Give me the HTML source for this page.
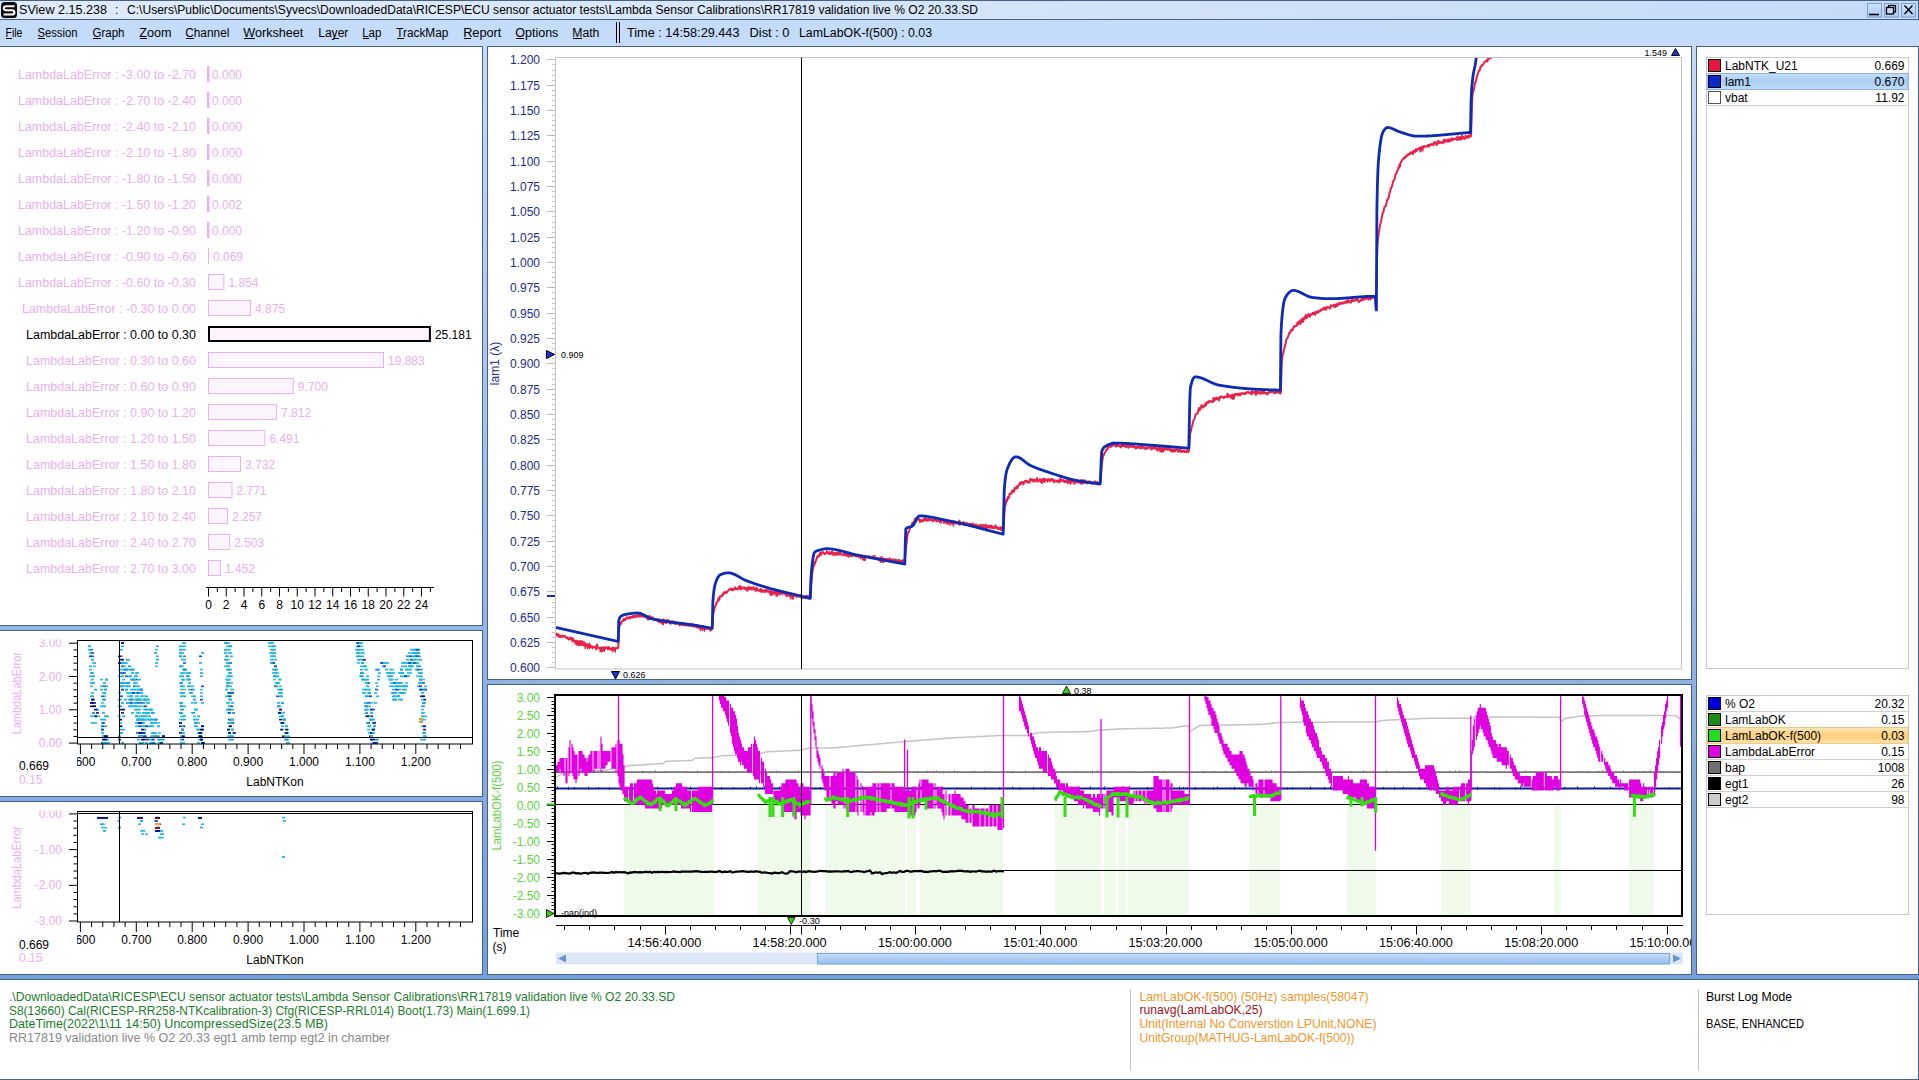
<!DOCTYPE html><html><head><meta charset="utf-8"><style>html,body{margin:0;padding:0;overflow:hidden;background:#fff}svg{display:block}text{font-family:"Liberation Sans",sans-serif}</style></head><body><svg width="1919" height="1080" viewBox="0 0 1919 1080"><defs>
<linearGradient id="gMain" x1="0" y1="0" x2="0" y2="1"><stop offset="0" stop-color="#c4dcfa"/><stop offset="1" stop-color="#6c99d4"/></linearGradient>
<linearGradient id="gTitle" x1="0" y1="0" x2="1" y2="0"><stop offset="0" stop-color="#dfebfb"/><stop offset="0.5" stop-color="#d4e4f9"/><stop offset="1" stop-color="#c6dbf8"/></linearGradient>
<linearGradient id="gBtn" x1="0" y1="0" x2="0" y2="1"><stop offset="0" stop-color="#cfe2fb"/><stop offset="1" stop-color="#a9cbf5"/></linearGradient>
<linearGradient id="gSel" x1="0" y1="0" x2="0" y2="1"><stop offset="0" stop-color="#c6def9"/><stop offset="0.5" stop-color="#a9cdf6"/><stop offset="1" stop-color="#c2dcf9"/></linearGradient>
<linearGradient id="gOrg" x1="0" y1="0" x2="0" y2="1"><stop offset="0" stop-color="#fde7b8"/><stop offset="0.5" stop-color="#fbcf7d"/><stop offset="1" stop-color="#fde2a8"/></linearGradient>
<linearGradient id="gThumb" x1="0" y1="0" x2="0" y2="1"><stop offset="0" stop-color="#c9defa"/><stop offset="1" stop-color="#96bdf0"/></linearGradient>
</defs>
<rect x="0" y="20" width="1919" height="1060" fill="url(#gMain)"/>
<rect x="0" y="0" width="1919" height="20" fill="url(#gTitle)"/>
<line x1="0" y1="0.5" x2="1919" y2="0.5" stroke="#485f88" stroke-width="1"/>
<line x1="0" y1="19.5" x2="1919" y2="19.5" stroke="#485f88" stroke-width="1"/>
<line x1="1918.5" y1="0" x2="1918.5" y2="20" stroke="#485f88" stroke-width="1"/>
<rect x="0" y="20" width="1919" height="26" fill="#c4dbf9"/>
<rect x="-1" y="46" width="484" height="580" fill="#485f88"/>
<rect x="0" y="47" width="482" height="578" fill="#fff"/>
<rect x="-1" y="630" width="484" height="167" fill="#485f88"/>
<rect x="0" y="631" width="482" height="165" fill="#fff"/>
<rect x="-1" y="801" width="484" height="174" fill="#485f88"/>
<rect x="0" y="802" width="482" height="172" fill="#fff"/>
<rect x="487" y="46" width="1205" height="634" fill="#485f88"/>
<rect x="488" y="47" width="1203" height="632" fill="#fff"/>
<rect x="487" y="684" width="1205" height="291" fill="#485f88"/>
<rect x="488" y="685" width="1203" height="289" fill="#fff"/>
<rect x="1696" y="46" width="223" height="929" fill="#485f88"/>
<rect x="1697" y="47" width="221" height="927" fill="#fff"/>
<rect x="-1" y="979" width="1920" height="101" fill="#485f88"/>
<rect x="0" y="980" width="1918" height="99" fill="#fff"/>
<rect x="1" y="2" width="16" height="16" rx="3.5" fill="#080808"/>
<path d="M14.6,6.2 H6.2 Q3.8,6.2 3.8,8.3 Q3.8,10.2 6.2,10.2 H11.8 Q14.4,10.2 14.4,12.4 Q14.4,14.5 11.8,14.5 H3.6" stroke="#fff" stroke-width="2.1" fill="none"/>
<text x="19.0" y="13.5" font-size="12" fill="#000" textLength="88.0" lengthAdjust="spacingAndGlyphs">SView 2.15.238</text>
<text x="115.0" y="13.5" font-size="12" fill="#000">:</text>
<text x="127.0" y="13.5" font-size="12" fill="#000" textLength="851.0" lengthAdjust="spacingAndGlyphs">C:\Users\Public\Documents\Syvecs\DownloadedData\RICESP\ECU sensor actuator tests\Lambda Sensor Calibrations\RR17819 validation live % O2 20.33.SD</text>
<rect x="1867.5" y="3.5" width="14" height="13.5" fill="url(#gBtn)" stroke="#7d9cc8" stroke-width="1"/>
<rect x="1884.5" y="3.5" width="14" height="13.5" fill="url(#gBtn)" stroke="#7d9cc8" stroke-width="1"/>
<rect x="1901.5" y="3.5" width="14" height="13.5" fill="url(#gBtn)" stroke="#7d9cc8" stroke-width="1"/>
<line x1="1869" y1="14.5" x2="1879" y2="14.5" stroke="#000" stroke-width="1.6"/>
<rect x="1888.5" y="5.5" width="7" height="6.5" fill="none" stroke="#000" stroke-width="1.3"/>
<rect x="1886.5" y="7.5" width="7" height="6.5" fill="#c6ddf9" stroke="#000" stroke-width="1.3"/>
<path d="M1904.5,5.5 L1912.5,14 M1912.5,5.5 L1904.5,14" stroke="#000" stroke-width="1.4" fill="none"/>
<text x="5.5" y="37.0" font-size="12" fill="#000" textLength="16.9" lengthAdjust="spacingAndGlyphs">File</text>
<text x="37.5" y="37.0" font-size="12" fill="#000" textLength="39.9" lengthAdjust="spacingAndGlyphs">Session</text>
<text x="92.5" y="37.0" font-size="12" fill="#000" textLength="31.9" lengthAdjust="spacingAndGlyphs">Graph</text>
<text x="139.2" y="37.0" font-size="12" fill="#000" textLength="32.2" lengthAdjust="spacingAndGlyphs">Zoom</text>
<text x="185.2" y="37.0" font-size="12" fill="#000" textLength="44.2" lengthAdjust="spacingAndGlyphs">Channel</text>
<text x="243.2" y="37.0" font-size="12" fill="#000" textLength="60.2" lengthAdjust="spacingAndGlyphs">Worksheet</text>
<text x="318.2" y="37.0" font-size="12" fill="#000" textLength="30.2" lengthAdjust="spacingAndGlyphs">Layer</text>
<text x="362.2" y="37.0" font-size="12" fill="#000" textLength="19.2" lengthAdjust="spacingAndGlyphs">Lap</text>
<text x="396.2" y="37.0" font-size="12" fill="#000" textLength="52.2" lengthAdjust="spacingAndGlyphs">TrackMap</text>
<text x="463.2" y="37.0" font-size="12" fill="#000" textLength="38.2" lengthAdjust="spacingAndGlyphs">Report</text>
<text x="515.2" y="37.0" font-size="12" fill="#000" textLength="43.2" lengthAdjust="spacingAndGlyphs">Options</text>
<text x="572.2" y="37.0" font-size="12" fill="#000" textLength="27.2" lengthAdjust="spacingAndGlyphs">Math</text>
<line x1="6" y1="38.5" x2="12" y2="38.5" stroke="#000" stroke-width="1"/>
<line x1="38" y1="38.5" x2="45" y2="38.5" stroke="#000" stroke-width="1"/>
<line x1="93" y1="38.5" x2="101" y2="38.5" stroke="#000" stroke-width="1"/>
<line x1="140" y1="38.5" x2="147" y2="38.5" stroke="#000" stroke-width="1"/>
<line x1="186" y1="38.5" x2="194" y2="38.5" stroke="#000" stroke-width="1"/>
<line x1="244" y1="38.5" x2="255" y2="38.5" stroke="#000" stroke-width="1"/>
<line x1="333" y1="38.5" x2="339" y2="38.5" stroke="#000" stroke-width="1"/>
<line x1="363" y1="38.5" x2="369" y2="38.5" stroke="#000" stroke-width="1"/>
<line x1="397" y1="38.5" x2="404" y2="38.5" stroke="#000" stroke-width="1"/>
<line x1="464" y1="38.5" x2="471" y2="38.5" stroke="#000" stroke-width="1"/>
<line x1="516" y1="38.5" x2="524" y2="38.5" stroke="#000" stroke-width="1"/>
<line x1="573" y1="38.5" x2="582" y2="38.5" stroke="#000" stroke-width="1"/>
<line x1="616.5" y1="22" x2="616.5" y2="43" stroke="#000" stroke-width="1"/>
<line x1="619.5" y1="22" x2="619.5" y2="43" stroke="#000" stroke-width="1"/>
<text x="627.0" y="37.0" font-size="12" fill="#000" textLength="112.5" lengthAdjust="spacingAndGlyphs">Time : 14:58:29.443</text>
<text x="749.5" y="37.0" font-size="12" fill="#000" textLength="40.0" lengthAdjust="spacingAndGlyphs">Dist : 0</text>
<text x="799.0" y="37.0" font-size="12" fill="#000" textLength="133.0" lengthAdjust="spacingAndGlyphs">LamLabOK-f(500) : 0.03</text>
<text x="18.0" y="78.5" font-size="12" fill="#e9b0ee" textLength="178.0" lengthAdjust="spacingAndGlyphs">LambdaLabError : -3.00 to -2.70</text>
<rect x="207" y="66" width="2.4" height="16" fill="#e9b0ee"/>
<text x="212.0" y="78.5" font-size="12" fill="#e9b0ee">0.000</text>
<text x="18.0" y="104.5" font-size="12" fill="#e9b0ee" textLength="178.0" lengthAdjust="spacingAndGlyphs">LambdaLabError : -2.70 to -2.40</text>
<rect x="207" y="92" width="2.4" height="16" fill="#e9b0ee"/>
<text x="212.0" y="104.5" font-size="12" fill="#e9b0ee">0.000</text>
<text x="18.0" y="130.5" font-size="12" fill="#e9b0ee" textLength="178.0" lengthAdjust="spacingAndGlyphs">LambdaLabError : -2.40 to -2.10</text>
<rect x="207" y="118" width="2.4" height="16" fill="#e9b0ee"/>
<text x="212.0" y="130.5" font-size="12" fill="#e9b0ee">0.000</text>
<text x="18.0" y="156.5" font-size="12" fill="#e9b0ee" textLength="178.0" lengthAdjust="spacingAndGlyphs">LambdaLabError : -2.10 to -1.80</text>
<rect x="207" y="144" width="2.4" height="16" fill="#e9b0ee"/>
<text x="212.0" y="156.5" font-size="12" fill="#e9b0ee">0.000</text>
<text x="18.0" y="182.5" font-size="12" fill="#e9b0ee" textLength="178.0" lengthAdjust="spacingAndGlyphs">LambdaLabError : -1.80 to -1.50</text>
<rect x="207" y="170" width="2.4" height="16" fill="#e9b0ee"/>
<text x="212.0" y="182.5" font-size="12" fill="#e9b0ee">0.000</text>
<text x="18.0" y="208.5" font-size="12" fill="#e9b0ee" textLength="178.0" lengthAdjust="spacingAndGlyphs">LambdaLabError : -1.50 to -1.20</text>
<rect x="207" y="196" width="2.4" height="16" fill="#e9b0ee"/>
<text x="212.0" y="208.5" font-size="12" fill="#e9b0ee">0.002</text>
<text x="18.0" y="234.5" font-size="12" fill="#e9b0ee" textLength="178.0" lengthAdjust="spacingAndGlyphs">LambdaLabError : -1.20 to -0.90</text>
<rect x="207" y="222" width="2.4" height="16" fill="#e9b0ee"/>
<text x="212.0" y="234.5" font-size="12" fill="#e9b0ee">0.000</text>
<text x="18.0" y="260.5" font-size="12" fill="#e9b0ee" textLength="178.0" lengthAdjust="spacingAndGlyphs">LambdaLabError : -0.90 to -0.60</text>
<line x1="208.5" y1="248" x2="208.5" y2="264" stroke="#e9b0ee" stroke-width="1"/>
<text x="213.0" y="260.5" font-size="12" fill="#e9b0ee">0.069</text>
<text x="18.0" y="286.5" font-size="12" fill="#e9b0ee" textLength="178.0" lengthAdjust="spacingAndGlyphs">LambdaLabError : -0.60 to -0.30</text>
<rect x="208.5" y="274.5" width="15.4" height="15" fill="#fdf5fd" stroke="#e9b0ee" stroke-width="1"/>
<text x="228.4" y="286.5" font-size="12" fill="#e9b0ee">1.854</text>
<text x="22.0" y="312.5" font-size="12" fill="#e9b0ee" textLength="174.0" lengthAdjust="spacingAndGlyphs">LambdaLabError : -0.30 to 0.00</text>
<rect x="208.5" y="300.5" width="42.1" height="15" fill="#fdf5fd" stroke="#e9b0ee" stroke-width="1"/>
<text x="255.1" y="312.5" font-size="12" fill="#e9b0ee">4.875</text>
<text x="26.0" y="338.5" font-size="12" fill="#000" textLength="170.0" lengthAdjust="spacingAndGlyphs">LambdaLabError : 0.00 to 0.30</text>
<rect x="209" y="327" width="220.9" height="14" fill="#fdf4fd" stroke="#000" stroke-width="2"/>
<text x="434.9" y="338.5" font-size="12" fill="#000">25.181</text>
<text x="26.0" y="364.5" font-size="12" fill="#e9b0ee" textLength="170.0" lengthAdjust="spacingAndGlyphs">LambdaLabError : 0.30 to 0.60</text>
<rect x="208.5" y="352.5" width="175.0" height="15" fill="#fdf5fd" stroke="#e9b0ee" stroke-width="1"/>
<text x="388.0" y="364.5" font-size="12" fill="#e9b0ee">19.883</text>
<text x="26.0" y="390.5" font-size="12" fill="#e9b0ee" textLength="170.0" lengthAdjust="spacingAndGlyphs">LambdaLabError : 0.60 to 0.90</text>
<rect x="208.5" y="378.5" width="84.8" height="15" fill="#fdf5fd" stroke="#e9b0ee" stroke-width="1"/>
<text x="297.8" y="390.5" font-size="12" fill="#e9b0ee">9.700</text>
<text x="26.0" y="416.5" font-size="12" fill="#e9b0ee" textLength="170.0" lengthAdjust="spacingAndGlyphs">LambdaLabError : 0.90 to 1.20</text>
<rect x="208.5" y="404.5" width="68.1" height="15" fill="#fdf5fd" stroke="#e9b0ee" stroke-width="1"/>
<text x="281.1" y="416.5" font-size="12" fill="#e9b0ee">7.812</text>
<text x="26.0" y="442.5" font-size="12" fill="#e9b0ee" textLength="170.0" lengthAdjust="spacingAndGlyphs">LambdaLabError : 1.20 to 1.50</text>
<rect x="208.5" y="430.5" width="56.4" height="15" fill="#fdf5fd" stroke="#e9b0ee" stroke-width="1"/>
<text x="269.4" y="442.5" font-size="12" fill="#e9b0ee">6.491</text>
<text x="26.0" y="468.5" font-size="12" fill="#e9b0ee" textLength="170.0" lengthAdjust="spacingAndGlyphs">LambdaLabError : 1.50 to 1.80</text>
<rect x="208.5" y="456.5" width="32.0" height="15" fill="#fdf5fd" stroke="#e9b0ee" stroke-width="1"/>
<text x="245.0" y="468.5" font-size="12" fill="#e9b0ee">3.732</text>
<text x="26.0" y="494.5" font-size="12" fill="#e9b0ee" textLength="170.0" lengthAdjust="spacingAndGlyphs">LambdaLabError : 1.80 to 2.10</text>
<rect x="208.5" y="482.5" width="23.5" height="15" fill="#fdf5fd" stroke="#e9b0ee" stroke-width="1"/>
<text x="236.5" y="494.5" font-size="12" fill="#e9b0ee">2.771</text>
<text x="26.0" y="520.5" font-size="12" fill="#e9b0ee" textLength="170.0" lengthAdjust="spacingAndGlyphs">LambdaLabError : 2.10 to 2.40</text>
<rect x="208.5" y="508.5" width="19.0" height="15" fill="#fdf5fd" stroke="#e9b0ee" stroke-width="1"/>
<text x="232.0" y="520.5" font-size="12" fill="#e9b0ee">2.257</text>
<text x="26.0" y="546.5" font-size="12" fill="#e9b0ee" textLength="170.0" lengthAdjust="spacingAndGlyphs">LambdaLabError : 2.40 to 2.70</text>
<rect x="208.5" y="534.5" width="21.2" height="15" fill="#fdf5fd" stroke="#e9b0ee" stroke-width="1"/>
<text x="234.2" y="546.5" font-size="12" fill="#e9b0ee">2.503</text>
<text x="26.0" y="572.5" font-size="12" fill="#e9b0ee" textLength="170.0" lengthAdjust="spacingAndGlyphs">LambdaLabError : 2.70 to 3.00</text>
<rect x="208.5" y="560.5" width="11.9" height="15" fill="#fdf5fd" stroke="#e9b0ee" stroke-width="1"/>
<text x="224.9" y="572.5" font-size="12" fill="#e9b0ee">1.452</text>
<line x1="206" y1="587.5" x2="434" y2="587.5" stroke="#000" stroke-width="1"/>
<line x1="208.5" y1="587" x2="208.5" y2="596.5" stroke="#000" stroke-width="1"/>
<text x="208.5" y="608.6" font-size="12" fill="#000" text-anchor="middle">0</text>
<line x1="217.375" y1="587" x2="217.375" y2="592" stroke="#000" stroke-width="1"/>
<line x1="226.25" y1="587" x2="226.25" y2="596.5" stroke="#000" stroke-width="1"/>
<text x="226.2" y="608.6" font-size="12" fill="#000" text-anchor="middle">2</text>
<line x1="235.125" y1="587" x2="235.125" y2="592" stroke="#000" stroke-width="1"/>
<line x1="244.0" y1="587" x2="244.0" y2="596.5" stroke="#000" stroke-width="1"/>
<text x="244.0" y="608.6" font-size="12" fill="#000" text-anchor="middle">4</text>
<line x1="252.875" y1="587" x2="252.875" y2="592" stroke="#000" stroke-width="1"/>
<line x1="261.75" y1="587" x2="261.75" y2="596.5" stroke="#000" stroke-width="1"/>
<text x="261.8" y="608.6" font-size="12" fill="#000" text-anchor="middle">6</text>
<line x1="270.625" y1="587" x2="270.625" y2="592" stroke="#000" stroke-width="1"/>
<line x1="279.5" y1="587" x2="279.5" y2="596.5" stroke="#000" stroke-width="1"/>
<text x="279.5" y="608.6" font-size="12" fill="#000" text-anchor="middle">8</text>
<line x1="288.375" y1="587" x2="288.375" y2="592" stroke="#000" stroke-width="1"/>
<line x1="297.25" y1="587" x2="297.25" y2="596.5" stroke="#000" stroke-width="1"/>
<text x="297.2" y="608.6" font-size="12" fill="#000" text-anchor="middle">10</text>
<line x1="306.125" y1="587" x2="306.125" y2="592" stroke="#000" stroke-width="1"/>
<line x1="315.0" y1="587" x2="315.0" y2="596.5" stroke="#000" stroke-width="1"/>
<text x="315.0" y="608.6" font-size="12" fill="#000" text-anchor="middle">12</text>
<line x1="323.875" y1="587" x2="323.875" y2="592" stroke="#000" stroke-width="1"/>
<line x1="332.75" y1="587" x2="332.75" y2="596.5" stroke="#000" stroke-width="1"/>
<text x="332.8" y="608.6" font-size="12" fill="#000" text-anchor="middle">14</text>
<line x1="341.625" y1="587" x2="341.625" y2="592" stroke="#000" stroke-width="1"/>
<line x1="350.5" y1="587" x2="350.5" y2="596.5" stroke="#000" stroke-width="1"/>
<text x="350.5" y="608.6" font-size="12" fill="#000" text-anchor="middle">16</text>
<line x1="359.375" y1="587" x2="359.375" y2="592" stroke="#000" stroke-width="1"/>
<line x1="368.25" y1="587" x2="368.25" y2="596.5" stroke="#000" stroke-width="1"/>
<text x="368.2" y="608.6" font-size="12" fill="#000" text-anchor="middle">18</text>
<line x1="377.125" y1="587" x2="377.125" y2="592" stroke="#000" stroke-width="1"/>
<line x1="386.0" y1="587" x2="386.0" y2="596.5" stroke="#000" stroke-width="1"/>
<text x="386.0" y="608.6" font-size="12" fill="#000" text-anchor="middle">20</text>
<line x1="394.875" y1="587" x2="394.875" y2="592" stroke="#000" stroke-width="1"/>
<line x1="403.75" y1="587" x2="403.75" y2="596.5" stroke="#000" stroke-width="1"/>
<text x="403.8" y="608.6" font-size="12" fill="#000" text-anchor="middle">22</text>
<line x1="412.625" y1="587" x2="412.625" y2="592" stroke="#000" stroke-width="1"/>
<line x1="421.5" y1="587" x2="421.5" y2="596.5" stroke="#000" stroke-width="1"/>
<text x="421.5" y="608.6" font-size="12" fill="#000" text-anchor="middle">24</text>
<line x1="430.375" y1="587" x2="430.375" y2="592" stroke="#000" stroke-width="1"/>
<clipPath id="cl1"><rect x="0" y="639.5" width="482" height="200"/></clipPath>
<g clip-path="url(#cl1)">
<text x="62.0" y="647.2" font-size="12" fill="#e9b0ee" text-anchor="end">3.00</text>
<text x="62.0" y="680.5" font-size="12" fill="#e9b0ee" text-anchor="end">2.00</text>
<text x="62.0" y="713.8" font-size="12" fill="#e9b0ee" text-anchor="end">1.00</text>
<text x="62.0" y="747.1" font-size="12" fill="#e9b0ee" text-anchor="end">0.00</text>
</g>
<text x="0" y="0" font-size="12" fill="#e9b0ee" text-anchor="middle" transform="translate(21.3,693.2) rotate(-90)" textLength="82.4" lengthAdjust="spacingAndGlyphs">LambdaLabError</text>
<line x1="69" y1="743.1" x2="77.5" y2="743.1" stroke="#000" stroke-width="1"/>
<line x1="69" y1="709.8000000000001" x2="77.5" y2="709.8000000000001" stroke="#000" stroke-width="1"/>
<line x1="69" y1="676.5" x2="77.5" y2="676.5" stroke="#000" stroke-width="1"/>
<line x1="69" y1="643.2" x2="77.5" y2="643.2" stroke="#000" stroke-width="1"/>
<line x1="73.5" y1="736.44" x2="77.5" y2="736.44" stroke="#000" stroke-width="1"/>
<line x1="73.5" y1="729.78" x2="77.5" y2="729.78" stroke="#000" stroke-width="1"/>
<line x1="73.5" y1="723.12" x2="77.5" y2="723.12" stroke="#000" stroke-width="1"/>
<line x1="73.5" y1="716.46" x2="77.5" y2="716.46" stroke="#000" stroke-width="1"/>
<line x1="73.5" y1="703.14" x2="77.5" y2="703.14" stroke="#000" stroke-width="1"/>
<line x1="73.5" y1="696.48" x2="77.5" y2="696.48" stroke="#000" stroke-width="1"/>
<line x1="73.5" y1="689.82" x2="77.5" y2="689.82" stroke="#000" stroke-width="1"/>
<line x1="73.5" y1="683.1600000000001" x2="77.5" y2="683.1600000000001" stroke="#000" stroke-width="1"/>
<line x1="73.5" y1="669.84" x2="77.5" y2="669.84" stroke="#000" stroke-width="1"/>
<line x1="73.5" y1="663.1800000000001" x2="77.5" y2="663.1800000000001" stroke="#000" stroke-width="1"/>
<line x1="73.5" y1="656.52" x2="77.5" y2="656.52" stroke="#000" stroke-width="1"/>
<line x1="73.5" y1="649.86" x2="77.5" y2="649.86" stroke="#000" stroke-width="1"/>
<rect x="88" y="645.5" width="3" height="1.6" fill="#1ebdf0"/><rect x="88" y="645.5" width="3" height="1.6" fill="#18b0e8"/><rect x="90" y="648.9" width="3" height="1.6" fill="#1060d8"/><rect x="88" y="648.9" width="3" height="1.6" fill="#18b0e8"/><rect x="91" y="652.2" width="3" height="1.6" fill="#0a48c0"/><rect x="89" y="652.2" width="3" height="1.6" fill="#18b0e8"/><rect x="89" y="655.5" width="3" height="1.6" fill="#0a48c0"/><rect x="91" y="655.5" width="3" height="1.6" fill="#1060d8"/><rect x="91" y="658.9" width="3" height="1.6" fill="#1060d8"/><rect x="91" y="658.9" width="3" height="1.6" fill="#2ac0f0"/><rect x="93" y="662.2" width="3" height="1.6" fill="#18b0e8"/><rect x="92" y="662.2" width="3" height="1.6" fill="#2ac0f0"/><rect x="93" y="665.5" width="3" height="1.6" fill="#2ac0f0"/><rect x="89" y="665.5" width="3" height="1.6" fill="#18b0e8"/><rect x="89" y="668.8" width="3" height="1.6" fill="#1ebdf0"/><rect x="91" y="672.2" width="3" height="1.6" fill="#2ac0f0"/><rect x="90" y="672.2" width="3" height="1.6" fill="#14a8e0"/><rect x="89" y="675.5" width="3" height="1.6" fill="#1ebdf0"/><rect x="92" y="675.5" width="3" height="1.6" fill="#14a8e0"/><rect x="91" y="678.8" width="3" height="1.6" fill="#1ebdf0"/><rect x="92" y="682.2" width="3" height="1.6" fill="#18b0e8"/><rect x="90" y="682.2" width="3" height="1.6" fill="#14a8e0"/><rect x="90" y="685.5" width="3" height="1.6" fill="#2ac0f0"/><rect x="94" y="688.8" width="3" height="1.6" fill="#14a8e0"/><rect x="91" y="692.1" width="3" height="1.6" fill="#1ebdf0"/><rect x="91" y="695.5" width="3" height="1.6" fill="#14a8e0"/><rect x="90" y="695.5" width="3" height="1.6" fill="#18b0e8"/><rect x="91" y="698.8" width="3" height="1.6" fill="#0a1a9a"/><rect x="92" y="698.8" width="3" height="1.6" fill="#10107a"/><rect x="92" y="698.8" width="3" height="1.6" fill="#14a8e0"/><rect x="91" y="698.8" width="3" height="1.6" fill="#000a80"/><rect x="90" y="702.1" width="3" height="1.6" fill="#0a1a9a"/><rect x="93" y="702.1" width="3" height="1.6" fill="#10107a"/><rect x="90" y="702.1" width="3" height="1.6" fill="#0a1a9a"/><rect x="91" y="702.1" width="3" height="1.6" fill="#10107a"/><rect x="92" y="705.5" width="3" height="1.6" fill="#0a1a9a"/><rect x="93" y="705.5" width="3" height="1.6" fill="#14a8e0"/><rect x="90" y="705.5" width="3" height="1.6" fill="#000a80"/><rect x="93" y="705.5" width="3" height="1.6" fill="#10107a"/><rect x="96" y="708.8" width="3" height="1.6" fill="#0a1a9a"/><rect x="96" y="708.8" width="3" height="1.6" fill="#2ac0f0"/><rect x="94" y="708.8" width="3" height="1.6" fill="#000a80"/><rect x="92" y="712.1" width="3" height="1.6" fill="#10107a"/><rect x="92" y="712.1" width="3" height="1.6" fill="#18b0e8"/><rect x="96" y="712.1" width="3" height="1.6" fill="#0a1a9a"/><rect x="94" y="715.5" width="3" height="1.6" fill="#0a1a9a"/><rect x="94" y="715.5" width="3" height="1.6" fill="#10107a"/><rect x="97" y="715.5" width="3" height="1.6" fill="#2ac0f0"/><rect x="90" y="715.5" width="3" height="1.6" fill="#2ac0f0"/><rect x="92" y="715.5" width="3" height="1.6" fill="#1ebdf0"/><rect x="94" y="722.1" width="3" height="1.6" fill="#1ebdf0"/><rect x="91" y="722.1" width="3" height="1.6" fill="#18b0e8"/><rect x="100" y="678.8" width="3" height="1.6" fill="#2ac0f0"/><rect x="105" y="678.8" width="3" height="1.6" fill="#14a8e0"/><rect x="105" y="678.8" width="3" height="1.6" fill="#18b0e8"/><rect x="103" y="682.2" width="3" height="1.6" fill="#18b0e8"/><rect x="103" y="682.2" width="3" height="1.6" fill="#2ac0f0"/><rect x="103" y="685.5" width="3" height="1.6" fill="#1060d8"/><rect x="105" y="685.5" width="3" height="1.6" fill="#18b0e8"/><rect x="100" y="685.5" width="3" height="1.6" fill="#2ac0f0"/><rect x="104" y="688.8" width="3" height="1.6" fill="#14a8e0"/><rect x="100" y="688.8" width="3" height="1.6" fill="#14a8e0"/><rect x="104" y="688.8" width="3" height="1.6" fill="#18b0e8"/><rect x="103" y="692.1" width="3" height="1.6" fill="#0a48c0"/><rect x="103" y="692.1" width="3" height="1.6" fill="#18b0e8"/><rect x="102" y="692.1" width="3" height="1.6" fill="#1ebdf0"/><rect x="103" y="695.5" width="3" height="1.6" fill="#1ebdf0"/><rect x="101" y="695.5" width="3" height="1.6" fill="#1060d8"/><rect x="103" y="698.8" width="3" height="1.6" fill="#1ebdf0"/><rect x="103" y="698.8" width="3" height="1.6" fill="#18b0e8"/><rect x="102" y="698.8" width="3" height="1.6" fill="#14a8e0"/><rect x="101" y="702.1" width="3" height="1.6" fill="#2ac0f0"/><rect x="103" y="705.5" width="3" height="1.6" fill="#14a8e0"/><rect x="100" y="705.5" width="3" height="1.6" fill="#1ebdf0"/><rect x="102" y="705.5" width="3" height="1.6" fill="#18b0e8"/><rect x="102" y="712.1" width="3" height="1.6" fill="#18b0e8"/><rect x="106" y="715.5" width="3" height="1.6" fill="#14a8e0"/><rect x="104" y="715.5" width="3" height="1.6" fill="#14a8e0"/><rect x="103" y="718.8" width="3" height="1.6" fill="#1ebdf0"/><rect x="100" y="718.8" width="3" height="1.6" fill="#14a8e0"/><rect x="103" y="718.8" width="3" height="1.6" fill="#2ac0f0"/><rect x="101" y="722.1" width="3" height="1.6" fill="#18b0e8"/><rect x="102" y="722.1" width="3" height="1.6" fill="#1060d8"/><rect x="101" y="725.5" width="3" height="1.6" fill="#2ac0f0"/><rect x="104" y="725.5" width="3" height="1.6" fill="#14a8e0"/><rect x="101" y="725.5" width="3" height="1.6" fill="#1060d8"/><rect x="101" y="728.8" width="3" height="1.6" fill="#1ebdf0"/><rect x="101" y="728.8" width="3" height="1.6" fill="#1ebdf0"/><rect x="101" y="728.8" width="3" height="1.6" fill="#0a48c0"/><rect x="101" y="732.1" width="3" height="1.6" fill="#18b0e8"/><rect x="102" y="735.4" width="3" height="1.6" fill="#2ac0f0"/><rect x="102" y="735.4" width="3" height="1.6" fill="#18b0e8"/><rect x="106" y="738.8" width="3" height="1.6" fill="#1ebdf0"/><rect x="105" y="738.8" width="3" height="1.6" fill="#18b0e8"/><rect x="102" y="738.8" width="3" height="1.6" fill="#14a8e0"/><rect x="104" y="742.1" width="3" height="1.6" fill="#2ac0f0"/><rect x="107" y="742.1" width="3" height="1.6" fill="#18b0e8"/><rect x="103" y="742.1" width="3" height="1.6" fill="#1060d8"/><rect x="105" y="735.4" width="3" height="1.6" fill="#14a8e0"/><rect x="102" y="735.4" width="3" height="1.6" fill="#2ac0f0"/><rect x="105" y="735.4" width="3" height="1.6" fill="#0a1a9a"/><rect x="104" y="735.4" width="3" height="1.6" fill="#000a80"/><rect x="102" y="738.8" width="3" height="1.6" fill="#2ac0f0"/><rect x="102" y="738.8" width="3" height="1.6" fill="#0a1a9a"/><rect x="104" y="738.8" width="3" height="1.6" fill="#10107a"/><rect x="102" y="742.1" width="3" height="1.6" fill="#18b0e8"/><rect x="101" y="742.1" width="3" height="1.6" fill="#000a80"/><rect x="102" y="742.1" width="3" height="1.6" fill="#18b0e8"/><rect x="105" y="742.1" width="3" height="1.6" fill="#14a8e0"/><rect x="121" y="642.2" width="3" height="1.6" fill="#000a80"/><rect x="121" y="642.2" width="3" height="1.6" fill="#10107a"/><rect x="121" y="645.5" width="3" height="1.6" fill="#18b0e8"/><rect x="120" y="648.9" width="3" height="1.6" fill="#1ebdf0"/><rect x="120" y="655.5" width="3" height="1.6" fill="#18b0e8"/><rect x="118" y="655.5" width="3" height="1.6" fill="#0a1a9a"/><rect x="120" y="658.9" width="3" height="1.6" fill="#0a1a9a"/><rect x="121" y="658.9" width="3" height="1.6" fill="#0a1a9a"/><rect x="118" y="662.2" width="3" height="1.6" fill="#1ebdf0"/><rect x="118" y="662.2" width="3" height="1.6" fill="#000a80"/><rect x="121" y="662.2" width="3" height="1.6" fill="#18b0e8"/><rect x="121" y="662.2" width="3" height="1.6" fill="#14a8e0"/><rect x="122" y="665.5" width="3" height="1.6" fill="#1ebdf0"/><rect x="121" y="665.5" width="3" height="1.6" fill="#1060d8"/><rect x="121" y="668.8" width="3" height="1.6" fill="#18b0e8"/><rect x="118" y="668.8" width="3" height="1.6" fill="#1ebdf0"/><rect x="121" y="672.2" width="3" height="1.6" fill="#2ac0f0"/><rect x="120" y="672.2" width="3" height="1.6" fill="#1060d8"/><rect x="118" y="675.5" width="3" height="1.6" fill="#2ac0f0"/><rect x="121" y="675.5" width="3" height="1.6" fill="#14a8e0"/><rect x="122" y="678.8" width="3" height="1.6" fill="#1ebdf0"/><rect x="119" y="682.2" width="3" height="1.6" fill="#2ac0f0"/><rect x="121" y="682.2" width="3" height="1.6" fill="#1ebdf0"/><rect x="119" y="685.5" width="3" height="1.6" fill="#14a8e0"/><rect x="119" y="685.5" width="3" height="1.6" fill="#14a8e0"/><rect x="121" y="688.8" width="3" height="1.6" fill="#14a8e0"/><rect x="121" y="688.8" width="3" height="1.6" fill="#0a48c0"/><rect x="118" y="692.1" width="3" height="1.6" fill="#1ebdf0"/><rect x="119" y="695.5" width="3" height="1.6" fill="#1ebdf0"/><rect x="120" y="695.5" width="3" height="1.6" fill="#1060d8"/><rect x="118" y="698.8" width="3" height="1.6" fill="#18b0e8"/><rect x="119" y="698.8" width="3" height="1.6" fill="#18b0e8"/><rect x="121" y="702.1" width="3" height="1.6" fill="#1ebdf0"/><rect x="121" y="702.1" width="3" height="1.6" fill="#18b0e8"/><rect x="118" y="705.5" width="3" height="1.6" fill="#14a8e0"/><rect x="119" y="705.5" width="3" height="1.6" fill="#14a8e0"/><rect x="122" y="708.8" width="3" height="1.6" fill="#000a80"/><rect x="119" y="708.8" width="3" height="1.6" fill="#10107a"/><rect x="121" y="712.1" width="3" height="1.6" fill="#10107a"/><rect x="118" y="715.5" width="3" height="1.6" fill="#1ebdf0"/><rect x="122" y="715.5" width="3" height="1.6" fill="#18b0e8"/><rect x="119" y="718.8" width="3" height="1.6" fill="#14a8e0"/><rect x="119" y="718.8" width="3" height="1.6" fill="#000a80"/><rect x="119" y="722.1" width="3" height="1.6" fill="#18b0e8"/><rect x="120" y="725.5" width="3" height="1.6" fill="#18b0e8"/><rect x="119" y="725.5" width="3" height="1.6" fill="#000a80"/><rect x="119" y="728.8" width="3" height="1.6" fill="#18b0e8"/><rect x="122" y="728.8" width="3" height="1.6" fill="#14a8e0"/><rect x="119" y="732.1" width="3" height="1.6" fill="#1ebdf0"/><rect x="120" y="732.1" width="3" height="1.6" fill="#14a8e0"/><rect x="118" y="735.4" width="3" height="1.6" fill="#14a8e0"/><rect x="118" y="738.8" width="3" height="1.6" fill="#10107a"/><rect x="121" y="742.1" width="3" height="1.6" fill="#14a8e0"/><rect x="126" y="658.9" width="3" height="1.6" fill="#1060d8"/><rect x="127" y="658.9" width="3" height="1.6" fill="#2ac0f0"/><rect x="125" y="662.2" width="3" height="1.6" fill="#1ebdf0"/><rect x="123" y="662.2" width="3" height="1.6" fill="#18b0e8"/><rect x="123" y="662.2" width="3" height="1.6" fill="#1ebdf0"/><rect x="128" y="665.5" width="3" height="1.6" fill="#2ac0f0"/><rect x="128" y="665.5" width="3" height="1.6" fill="#18b0e8"/><rect x="123" y="665.5" width="3" height="1.6" fill="#2ac0f0"/><rect x="124" y="668.8" width="3" height="1.6" fill="#14a8e0"/><rect x="124" y="668.8" width="3" height="1.6" fill="#2ac0f0"/><rect x="123" y="668.8" width="3" height="1.6" fill="#14a8e0"/><rect x="125" y="668.8" width="3" height="1.6" fill="#0a48c0"/><rect x="126" y="668.8" width="3" height="1.6" fill="#18b0e8"/><rect x="130" y="668.8" width="3" height="1.6" fill="#18b0e8"/><rect x="131" y="668.8" width="3" height="1.6" fill="#0a48c0"/><rect x="132" y="668.8" width="3" height="1.6" fill="#1ebdf0"/><rect x="125" y="668.8" width="3" height="1.6" fill="#18b0e8"/><rect x="129" y="668.8" width="3" height="1.6" fill="#14a8e0"/><rect x="136" y="672.2" width="3" height="1.6" fill="#2ac0f0"/><rect x="131" y="672.2" width="3" height="1.6" fill="#14a8e0"/><rect x="131" y="672.2" width="3" height="1.6" fill="#2ac0f0"/><rect x="123" y="672.2" width="3" height="1.6" fill="#1060d8"/><rect x="135" y="672.2" width="3" height="1.6" fill="#18b0e8"/><rect x="135" y="675.5" width="3" height="1.6" fill="#14a8e0"/><rect x="134" y="675.5" width="3" height="1.6" fill="#14a8e0"/><rect x="129" y="675.5" width="3" height="1.6" fill="#1ebdf0"/><rect x="128" y="675.5" width="3" height="1.6" fill="#14a8e0"/><rect x="125" y="675.5" width="3" height="1.6" fill="#1060d8"/><rect x="135" y="675.5" width="3" height="1.6" fill="#2ac0f0"/><rect x="129" y="675.5" width="3" height="1.6" fill="#1ebdf0"/><rect x="134" y="675.5" width="3" height="1.6" fill="#2ac0f0"/><rect x="137" y="678.8" width="3" height="1.6" fill="#1ebdf0"/><rect x="130" y="678.8" width="3" height="1.6" fill="#14a8e0"/><rect x="131" y="678.8" width="3" height="1.6" fill="#14a8e0"/><rect x="134" y="678.8" width="3" height="1.6" fill="#0a48c0"/><rect x="138" y="678.8" width="3" height="1.6" fill="#2ac0f0"/><rect x="133" y="678.8" width="3" height="1.6" fill="#1ebdf0"/><rect x="132" y="678.8" width="3" height="1.6" fill="#14a8e0"/><rect x="119" y="682.2" width="3" height="1.6" fill="#2ac0f0"/><rect x="127" y="682.2" width="3" height="1.6" fill="#1060d8"/><rect x="120" y="682.2" width="3" height="1.6" fill="#0a48c0"/><rect x="121" y="682.2" width="3" height="1.6" fill="#18b0e8"/><rect x="135" y="682.2" width="3" height="1.6" fill="#1ebdf0"/><rect x="124" y="682.2" width="3" height="1.6" fill="#2ac0f0"/><rect x="133" y="682.2" width="3" height="1.6" fill="#18b0e8"/><rect x="123" y="682.2" width="3" height="1.6" fill="#18b0e8"/><rect x="126" y="682.2" width="3" height="1.6" fill="#18b0e8"/><rect x="120" y="682.2" width="3" height="1.6" fill="#1ebdf0"/><rect x="127" y="682.2" width="3" height="1.6" fill="#14a8e0"/><rect x="126" y="685.5" width="3" height="1.6" fill="#1060d8"/><rect x="136" y="685.5" width="3" height="1.6" fill="#1ebdf0"/><rect x="137" y="685.5" width="3" height="1.6" fill="#2ac0f0"/><rect x="133" y="685.5" width="3" height="1.6" fill="#0a48c0"/><rect x="127" y="685.5" width="3" height="1.6" fill="#18b0e8"/><rect x="134" y="685.5" width="3" height="1.6" fill="#1ebdf0"/><rect x="128" y="685.5" width="3" height="1.6" fill="#2ac0f0"/><rect x="120" y="685.5" width="3" height="1.6" fill="#14a8e0"/><rect x="122" y="685.5" width="3" height="1.6" fill="#18b0e8"/><rect x="122" y="685.5" width="3" height="1.6" fill="#2ac0f0"/><rect x="125" y="685.5" width="3" height="1.6" fill="#1ebdf0"/><rect x="133" y="688.8" width="3" height="1.6" fill="#14a8e0"/><rect x="137" y="688.8" width="3" height="1.6" fill="#18b0e8"/><rect x="130" y="688.8" width="3" height="1.6" fill="#14a8e0"/><rect x="138" y="688.8" width="3" height="1.6" fill="#2ac0f0"/><rect x="125" y="688.8" width="3" height="1.6" fill="#1060d8"/><rect x="140" y="688.8" width="3" height="1.6" fill="#0a48c0"/><rect x="125" y="688.8" width="3" height="1.6" fill="#18b0e8"/><rect x="140" y="688.8" width="3" height="1.6" fill="#0a48c0"/><rect x="137" y="688.8" width="3" height="1.6" fill="#2ac0f0"/><rect x="140" y="688.8" width="3" height="1.6" fill="#14a8e0"/><rect x="134" y="688.8" width="3" height="1.6" fill="#1ebdf0"/><rect x="140" y="692.1" width="3" height="1.6" fill="#18b0e8"/><rect x="136" y="692.1" width="3" height="1.6" fill="#14a8e0"/><rect x="128" y="692.1" width="3" height="1.6" fill="#18b0e8"/><rect x="126" y="692.1" width="3" height="1.6" fill="#18b0e8"/><rect x="135" y="692.1" width="3" height="1.6" fill="#1ebdf0"/><rect x="130" y="692.1" width="3" height="1.6" fill="#14a8e0"/><rect x="136" y="692.1" width="3" height="1.6" fill="#14a8e0"/><rect x="128" y="692.1" width="3" height="1.6" fill="#2ac0f0"/><rect x="132" y="692.1" width="3" height="1.6" fill="#0a48c0"/><rect x="132" y="692.1" width="3" height="1.6" fill="#14a8e0"/><rect x="140" y="692.1" width="3" height="1.6" fill="#1ebdf0"/><rect x="132" y="692.1" width="3" height="1.6" fill="#0a48c0"/><rect x="137" y="692.1" width="3" height="1.6" fill="#1060d8"/><rect x="140" y="695.5" width="3" height="1.6" fill="#1ebdf0"/><rect x="135" y="695.5" width="3" height="1.6" fill="#18b0e8"/><rect x="127" y="695.5" width="3" height="1.6" fill="#1ebdf0"/><rect x="145" y="695.5" width="3" height="1.6" fill="#18b0e8"/><rect x="140" y="695.5" width="3" height="1.6" fill="#2ac0f0"/><rect x="130" y="695.5" width="3" height="1.6" fill="#2ac0f0"/><rect x="130" y="695.5" width="3" height="1.6" fill="#14a8e0"/><rect x="130" y="695.5" width="3" height="1.6" fill="#2ac0f0"/><rect x="129" y="695.5" width="3" height="1.6" fill="#2ac0f0"/><rect x="143" y="695.5" width="3" height="1.6" fill="#2ac0f0"/><rect x="136" y="695.5" width="3" height="1.6" fill="#2ac0f0"/><rect x="137" y="698.8" width="3" height="1.6" fill="#1ebdf0"/><rect x="138" y="698.8" width="3" height="1.6" fill="#2ac0f0"/><rect x="147" y="698.8" width="3" height="1.6" fill="#2ac0f0"/><rect x="129" y="698.8" width="3" height="1.6" fill="#1ebdf0"/><rect x="137" y="698.8" width="3" height="1.6" fill="#2ac0f0"/><rect x="142" y="698.8" width="3" height="1.6" fill="#2ac0f0"/><rect x="136" y="698.8" width="3" height="1.6" fill="#1ebdf0"/><rect x="132" y="698.8" width="3" height="1.6" fill="#1ebdf0"/><rect x="138" y="698.8" width="3" height="1.6" fill="#2ac0f0"/><rect x="135" y="698.8" width="3" height="1.6" fill="#18b0e8"/><rect x="139" y="698.8" width="3" height="1.6" fill="#18b0e8"/><rect x="143" y="698.8" width="3" height="1.6" fill="#14a8e0"/><rect x="140" y="698.8" width="3" height="1.6" fill="#2ac0f0"/><rect x="130" y="698.8" width="3" height="1.6" fill="#0a48c0"/><rect x="137" y="698.8" width="3" height="1.6" fill="#14a8e0"/><rect x="144" y="698.8" width="3" height="1.6" fill="#1060d8"/><rect x="129" y="698.8" width="3" height="1.6" fill="#1060d8"/><rect x="136" y="698.8" width="3" height="1.6" fill="#18b0e8"/><rect x="135" y="698.8" width="3" height="1.6" fill="#14a8e0"/><rect x="128" y="698.8" width="3" height="1.6" fill="#2ac0f0"/><rect x="146" y="698.8" width="3" height="1.6" fill="#14a8e0"/><rect x="124" y="698.8" width="3" height="1.6" fill="#14a8e0"/><rect x="138" y="698.8" width="3" height="1.6" fill="#1ebdf0"/><rect x="138" y="698.8" width="3" height="1.6" fill="#2ac0f0"/><rect x="130" y="698.8" width="3" height="1.6" fill="#14a8e0"/><rect x="144" y="698.8" width="3" height="1.6" fill="#2ac0f0"/><rect x="145" y="698.8" width="3" height="1.6" fill="#1ebdf0"/><rect x="146" y="702.1" width="3" height="1.6" fill="#18b0e8"/><rect x="133" y="702.1" width="3" height="1.6" fill="#2ac0f0"/><rect x="134" y="702.1" width="3" height="1.6" fill="#14a8e0"/><rect x="137" y="702.1" width="3" height="1.6" fill="#1060d8"/><rect x="142" y="702.1" width="3" height="1.6" fill="#2ac0f0"/><rect x="134" y="702.1" width="3" height="1.6" fill="#18b0e8"/><rect x="126" y="702.1" width="3" height="1.6" fill="#1060d8"/><rect x="129" y="702.1" width="3" height="1.6" fill="#1060d8"/><rect x="140" y="702.1" width="3" height="1.6" fill="#1060d8"/><rect x="127" y="702.1" width="3" height="1.6" fill="#2ac0f0"/><rect x="147" y="702.1" width="3" height="1.6" fill="#1ebdf0"/><rect x="142" y="702.1" width="3" height="1.6" fill="#14a8e0"/><rect x="130" y="702.1" width="3" height="1.6" fill="#1060d8"/><rect x="129" y="705.5" width="3" height="1.6" fill="#2ac0f0"/><rect x="130" y="705.5" width="3" height="1.6" fill="#18b0e8"/><rect x="135" y="705.5" width="3" height="1.6" fill="#2ac0f0"/><rect x="134" y="705.5" width="3" height="1.6" fill="#2ac0f0"/><rect x="141" y="705.5" width="3" height="1.6" fill="#2ac0f0"/><rect x="128" y="705.5" width="3" height="1.6" fill="#14a8e0"/><rect x="129" y="705.5" width="3" height="1.6" fill="#1ebdf0"/><rect x="132" y="705.5" width="3" height="1.6" fill="#1ebdf0"/><rect x="134" y="705.5" width="3" height="1.6" fill="#18b0e8"/><rect x="144" y="705.5" width="3" height="1.6" fill="#0a48c0"/><rect x="138" y="705.5" width="3" height="1.6" fill="#18b0e8"/><rect x="150" y="708.8" width="3" height="1.6" fill="#18b0e8"/><rect x="134" y="708.8" width="3" height="1.6" fill="#14a8e0"/><rect x="150" y="708.8" width="3" height="1.6" fill="#14a8e0"/><rect x="144" y="708.8" width="3" height="1.6" fill="#2ac0f0"/><rect x="138" y="708.8" width="3" height="1.6" fill="#1ebdf0"/><rect x="143" y="708.8" width="3" height="1.6" fill="#2ac0f0"/><rect x="149" y="708.8" width="3" height="1.6" fill="#14a8e0"/><rect x="150" y="708.8" width="3" height="1.6" fill="#1ebdf0"/><rect x="136" y="708.8" width="3" height="1.6" fill="#14a8e0"/><rect x="145" y="708.8" width="3" height="1.6" fill="#14a8e0"/><rect x="135" y="708.8" width="3" height="1.6" fill="#2ac0f0"/><rect x="148" y="708.8" width="3" height="1.6" fill="#18b0e8"/><rect x="147" y="712.1" width="3" height="1.6" fill="#18b0e8"/><rect x="152" y="712.1" width="3" height="1.6" fill="#2ac0f0"/><rect x="138" y="712.1" width="3" height="1.6" fill="#1ebdf0"/><rect x="145" y="712.1" width="3" height="1.6" fill="#18b0e8"/><rect x="147" y="712.1" width="3" height="1.6" fill="#18b0e8"/><rect x="151" y="712.1" width="3" height="1.6" fill="#14a8e0"/><rect x="131" y="712.1" width="3" height="1.6" fill="#14a8e0"/><rect x="142" y="712.1" width="3" height="1.6" fill="#14a8e0"/><rect x="136" y="712.1" width="3" height="1.6" fill="#1ebdf0"/><rect x="151" y="712.1" width="3" height="1.6" fill="#14a8e0"/><rect x="145" y="712.1" width="3" height="1.6" fill="#18b0e8"/><rect x="145" y="712.1" width="3" height="1.6" fill="#2ac0f0"/><rect x="146" y="712.1" width="3" height="1.6" fill="#18b0e8"/><rect x="148" y="715.5" width="3" height="1.6" fill="#2ac0f0"/><rect x="143" y="715.5" width="3" height="1.6" fill="#0a48c0"/><rect x="147" y="715.5" width="3" height="1.6" fill="#2ac0f0"/><rect x="141" y="715.5" width="3" height="1.6" fill="#1ebdf0"/><rect x="144" y="715.5" width="3" height="1.6" fill="#18b0e8"/><rect x="135" y="715.5" width="3" height="1.6" fill="#18b0e8"/><rect x="144" y="715.5" width="3" height="1.6" fill="#2ac0f0"/><rect x="141" y="715.5" width="3" height="1.6" fill="#18b0e8"/><rect x="144" y="715.5" width="3" height="1.6" fill="#2ac0f0"/><rect x="138" y="715.5" width="3" height="1.6" fill="#1ebdf0"/><rect x="142" y="715.5" width="3" height="1.6" fill="#2ac0f0"/><rect x="135" y="715.5" width="3" height="1.6" fill="#14a8e0"/><rect x="139" y="718.8" width="3" height="1.6" fill="#14a8e0"/><rect x="138" y="718.8" width="3" height="1.6" fill="#1ebdf0"/><rect x="148" y="718.8" width="3" height="1.6" fill="#18b0e8"/><rect x="137" y="718.8" width="3" height="1.6" fill="#14a8e0"/><rect x="140" y="718.8" width="3" height="1.6" fill="#18b0e8"/><rect x="144" y="718.8" width="3" height="1.6" fill="#18b0e8"/><rect x="142" y="718.8" width="3" height="1.6" fill="#14a8e0"/><rect x="145" y="718.8" width="3" height="1.6" fill="#2ac0f0"/><rect x="148" y="718.8" width="3" height="1.6" fill="#14a8e0"/><rect x="148" y="718.8" width="3" height="1.6" fill="#2ac0f0"/><rect x="141" y="718.8" width="3" height="1.6" fill="#1ebdf0"/><rect x="154" y="718.8" width="3" height="1.6" fill="#18b0e8"/><rect x="142" y="718.8" width="3" height="1.6" fill="#1ebdf0"/><rect x="136" y="718.8" width="3" height="1.6" fill="#1ebdf0"/><rect x="154" y="718.8" width="3" height="1.6" fill="#14a8e0"/><rect x="137" y="718.8" width="3" height="1.6" fill="#18b0e8"/><rect x="150" y="718.8" width="3" height="1.6" fill="#1ebdf0"/><rect x="154" y="718.8" width="3" height="1.6" fill="#2ac0f0"/><rect x="150" y="718.8" width="3" height="1.6" fill="#14a8e0"/><rect x="136" y="718.8" width="3" height="1.6" fill="#0a48c0"/><rect x="136" y="718.8" width="3" height="1.6" fill="#1ebdf0"/><rect x="155" y="718.8" width="3" height="1.6" fill="#18b0e8"/><rect x="146" y="718.8" width="3" height="1.6" fill="#1ebdf0"/><rect x="141" y="718.8" width="3" height="1.6" fill="#14a8e0"/><rect x="153" y="718.8" width="3" height="1.6" fill="#14a8e0"/><rect x="137" y="718.8" width="3" height="1.6" fill="#1ebdf0"/><rect x="135" y="722.1" width="3" height="1.6" fill="#2ac0f0"/><rect x="136" y="722.1" width="3" height="1.6" fill="#18b0e8"/><rect x="151" y="722.1" width="3" height="1.6" fill="#2ac0f0"/><rect x="150" y="722.1" width="3" height="1.6" fill="#18b0e8"/><rect x="142" y="722.1" width="3" height="1.6" fill="#1ebdf0"/><rect x="141" y="722.1" width="3" height="1.6" fill="#14a8e0"/><rect x="157" y="722.1" width="3" height="1.6" fill="#2ac0f0"/><rect x="153" y="722.1" width="3" height="1.6" fill="#2ac0f0"/><rect x="137" y="722.1" width="3" height="1.6" fill="#1ebdf0"/><rect x="135" y="722.1" width="3" height="1.6" fill="#14a8e0"/><rect x="135" y="722.1" width="3" height="1.6" fill="#1ebdf0"/><rect x="154" y="722.1" width="3" height="1.6" fill="#1ebdf0"/><rect x="157" y="725.5" width="3" height="1.6" fill="#18b0e8"/><rect x="151" y="725.5" width="3" height="1.6" fill="#1ebdf0"/><rect x="151" y="725.5" width="3" height="1.6" fill="#18b0e8"/><rect x="139" y="725.5" width="3" height="1.6" fill="#1060d8"/><rect x="144" y="725.5" width="3" height="1.6" fill="#2ac0f0"/><rect x="141" y="725.5" width="3" height="1.6" fill="#14a8e0"/><rect x="135" y="725.5" width="3" height="1.6" fill="#1ebdf0"/><rect x="147" y="725.5" width="3" height="1.6" fill="#14a8e0"/><rect x="157" y="725.5" width="3" height="1.6" fill="#1ebdf0"/><rect x="149" y="725.5" width="3" height="1.6" fill="#18b0e8"/><rect x="145" y="725.5" width="3" height="1.6" fill="#0a48c0"/><rect x="138" y="725.5" width="3" height="1.6" fill="#1060d8"/><rect x="152" y="732.1" width="3" height="1.6" fill="#1ebdf0"/><rect x="138" y="732.1" width="3" height="1.6" fill="#2ac0f0"/><rect x="141" y="732.1" width="3" height="1.6" fill="#18b0e8"/><rect x="153" y="732.1" width="3" height="1.6" fill="#18b0e8"/><rect x="138" y="732.1" width="3" height="1.6" fill="#14a8e0"/><rect x="158" y="732.1" width="3" height="1.6" fill="#1ebdf0"/><rect x="136" y="732.1" width="3" height="1.6" fill="#1060d8"/><rect x="143" y="732.1" width="3" height="1.6" fill="#14a8e0"/><rect x="143" y="732.1" width="3" height="1.6" fill="#14a8e0"/><rect x="139" y="732.1" width="3" height="1.6" fill="#1ebdf0"/><rect x="151" y="732.1" width="3" height="1.6" fill="#14a8e0"/><rect x="154" y="732.1" width="3" height="1.6" fill="#2ac0f0"/><rect x="150" y="735.4" width="3" height="1.6" fill="#1ebdf0"/><rect x="152" y="735.4" width="3" height="1.6" fill="#2ac0f0"/><rect x="154" y="735.4" width="3" height="1.6" fill="#1060d8"/><rect x="144" y="735.4" width="3" height="1.6" fill="#18b0e8"/><rect x="153" y="735.4" width="3" height="1.6" fill="#18b0e8"/><rect x="143" y="735.4" width="3" height="1.6" fill="#0a48c0"/><rect x="140" y="735.4" width="3" height="1.6" fill="#1ebdf0"/><rect x="140" y="735.4" width="3" height="1.6" fill="#18b0e8"/><rect x="157" y="735.4" width="3" height="1.6" fill="#14a8e0"/><rect x="138" y="735.4" width="3" height="1.6" fill="#14a8e0"/><rect x="154" y="735.4" width="3" height="1.6" fill="#18b0e8"/><rect x="138" y="735.4" width="3" height="1.6" fill="#18b0e8"/><rect x="137" y="738.8" width="3" height="1.6" fill="#1ebdf0"/><rect x="146" y="738.8" width="3" height="1.6" fill="#0a48c0"/><rect x="159" y="738.8" width="3" height="1.6" fill="#2ac0f0"/><rect x="151" y="738.8" width="3" height="1.6" fill="#18b0e8"/><rect x="157" y="738.8" width="3" height="1.6" fill="#2ac0f0"/><rect x="150" y="738.8" width="3" height="1.6" fill="#1ebdf0"/><rect x="158" y="738.8" width="3" height="1.6" fill="#14a8e0"/><rect x="141" y="738.8" width="3" height="1.6" fill="#2ac0f0"/><rect x="152" y="738.8" width="3" height="1.6" fill="#1060d8"/><rect x="149" y="738.8" width="3" height="1.6" fill="#2ac0f0"/><rect x="140" y="742.1" width="3" height="1.6" fill="#18b0e8"/><rect x="139" y="742.1" width="3" height="1.6" fill="#18b0e8"/><rect x="139" y="742.1" width="3" height="1.6" fill="#0a48c0"/><rect x="149" y="742.1" width="3" height="1.6" fill="#1ebdf0"/><rect x="153" y="742.1" width="3" height="1.6" fill="#1ebdf0"/><rect x="152" y="742.1" width="3" height="1.6" fill="#14a8e0"/><rect x="158" y="742.1" width="3" height="1.6" fill="#18b0e8"/><rect x="139" y="742.1" width="3" height="1.6" fill="#2ac0f0"/><rect x="151" y="742.1" width="3" height="1.6" fill="#1060d8"/><rect x="150" y="742.1" width="3" height="1.6" fill="#14a8e0"/><rect x="141" y="742.1" width="3" height="1.6" fill="#18b0e8"/><rect x="145" y="742.1" width="3" height="1.6" fill="#1ebdf0"/><rect x="139" y="722.1" width="3" height="1.6" fill="#000a80"/><rect x="138" y="722.1" width="3" height="1.6" fill="#0a1a9a"/><rect x="142" y="725.5" width="3" height="1.6" fill="#18b0e8"/><rect x="143" y="728.8" width="3" height="1.6" fill="#18b0e8"/><rect x="143" y="728.8" width="3" height="1.6" fill="#14a8e0"/><rect x="141" y="728.8" width="3" height="1.6" fill="#000a80"/><rect x="139" y="732.1" width="3" height="1.6" fill="#000a80"/><rect x="139" y="732.1" width="3" height="1.6" fill="#10107a"/><rect x="142" y="732.1" width="3" height="1.6" fill="#0a1a9a"/><rect x="140" y="735.4" width="3" height="1.6" fill="#000a80"/><rect x="140" y="735.4" width="3" height="1.6" fill="#2ac0f0"/><rect x="140" y="735.4" width="3" height="1.6" fill="#1ebdf0"/><rect x="141" y="738.8" width="3" height="1.6" fill="#10107a"/><rect x="143" y="738.8" width="3" height="1.6" fill="#0a1a9a"/><rect x="140" y="742.1" width="3" height="1.6" fill="#0a1a9a"/><rect x="140" y="742.1" width="3" height="1.6" fill="#1ebdf0"/><rect x="162" y="735.4" width="3" height="1.6" fill="#10107a"/><rect x="162" y="735.4" width="3" height="1.6" fill="#0a1a9a"/><rect x="162" y="738.8" width="3" height="1.6" fill="#2ac0f0"/><rect x="161" y="738.8" width="3" height="1.6" fill="#18b0e8"/><rect x="160" y="742.1" width="3" height="1.6" fill="#18b0e8"/><rect x="160" y="742.1" width="3" height="1.6" fill="#0a1a9a"/><rect x="156" y="645.5" width="3" height="1.6" fill="#18b0e8"/><rect x="155" y="648.9" width="3" height="1.6" fill="#2ac0f0"/><rect x="154" y="652.2" width="3" height="1.6" fill="#14a8e0"/><rect x="156" y="655.5" width="3" height="1.6" fill="#2ac0f0"/><rect x="156" y="658.9" width="3" height="1.6" fill="#14a8e0"/><rect x="155" y="662.2" width="3" height="1.6" fill="#18b0e8"/><rect x="155" y="665.5" width="3" height="1.6" fill="#2ac0f0"/><rect x="182" y="642.2" width="3" height="1.6" fill="#1ebdf0"/><rect x="183" y="642.2" width="3" height="1.6" fill="#1ebdf0"/><rect x="182" y="642.2" width="3" height="1.6" fill="#2ac0f0"/><rect x="183" y="645.5" width="3" height="1.6" fill="#1ebdf0"/><rect x="179" y="645.5" width="3" height="1.6" fill="#14a8e0"/><rect x="181" y="645.5" width="3" height="1.6" fill="#1ebdf0"/><rect x="179" y="648.9" width="3" height="1.6" fill="#18b0e8"/><rect x="180" y="648.9" width="3" height="1.6" fill="#1ebdf0"/><rect x="183" y="648.9" width="3" height="1.6" fill="#2ac0f0"/><rect x="181" y="652.2" width="3" height="1.6" fill="#18b0e8"/><rect x="179" y="652.2" width="3" height="1.6" fill="#18b0e8"/><rect x="179" y="652.2" width="3" height="1.6" fill="#2ac0f0"/><rect x="179" y="655.5" width="3" height="1.6" fill="#18b0e8"/><rect x="179" y="655.5" width="3" height="1.6" fill="#14a8e0"/><rect x="183" y="655.5" width="3" height="1.6" fill="#14a8e0"/><rect x="181" y="658.9" width="3" height="1.6" fill="#1ebdf0"/><rect x="183" y="658.9" width="3" height="1.6" fill="#2ac0f0"/><rect x="183" y="658.9" width="3" height="1.6" fill="#2ac0f0"/><rect x="183" y="662.2" width="3" height="1.6" fill="#1060d8"/><rect x="181" y="665.5" width="3" height="1.6" fill="#2ac0f0"/><rect x="179" y="665.5" width="3" height="1.6" fill="#18b0e8"/><rect x="179" y="665.5" width="3" height="1.6" fill="#14a8e0"/><rect x="183" y="668.8" width="3" height="1.6" fill="#1ebdf0"/><rect x="182" y="668.8" width="3" height="1.6" fill="#2ac0f0"/><rect x="183" y="668.8" width="3" height="1.6" fill="#1060d8"/><rect x="181" y="672.2" width="3" height="1.6" fill="#1ebdf0"/><rect x="180" y="672.2" width="3" height="1.6" fill="#1ebdf0"/><rect x="183" y="672.2" width="3" height="1.6" fill="#2ac0f0"/><rect x="181" y="675.5" width="3" height="1.6" fill="#14a8e0"/><rect x="179" y="675.5" width="3" height="1.6" fill="#14a8e0"/><rect x="180" y="675.5" width="3" height="1.6" fill="#2ac0f0"/><rect x="182" y="678.8" width="3" height="1.6" fill="#14a8e0"/><rect x="182" y="678.8" width="3" height="1.6" fill="#2ac0f0"/><rect x="181" y="678.8" width="3" height="1.6" fill="#18b0e8"/><rect x="179" y="682.2" width="3" height="1.6" fill="#14a8e0"/><rect x="180" y="682.2" width="3" height="1.6" fill="#18b0e8"/><rect x="180" y="682.2" width="3" height="1.6" fill="#18b0e8"/><rect x="182" y="685.5" width="3" height="1.6" fill="#1ebdf0"/><rect x="180" y="685.5" width="3" height="1.6" fill="#14a8e0"/><rect x="180" y="685.5" width="3" height="1.6" fill="#18b0e8"/><rect x="183" y="688.8" width="3" height="1.6" fill="#2ac0f0"/><rect x="180" y="688.8" width="3" height="1.6" fill="#2ac0f0"/><rect x="181" y="692.1" width="3" height="1.6" fill="#14a8e0"/><rect x="182" y="692.1" width="3" height="1.6" fill="#18b0e8"/><rect x="179" y="692.1" width="3" height="1.6" fill="#1ebdf0"/><rect x="183" y="695.5" width="3" height="1.6" fill="#14a8e0"/><rect x="180" y="695.5" width="3" height="1.6" fill="#1ebdf0"/><rect x="181" y="695.5" width="3" height="1.6" fill="#2ac0f0"/><rect x="180" y="702.1" width="3" height="1.6" fill="#14a8e0"/><rect x="179" y="702.1" width="3" height="1.6" fill="#14a8e0"/><rect x="180" y="702.1" width="3" height="1.6" fill="#18b0e8"/><rect x="180" y="705.5" width="3" height="1.6" fill="#0a48c0"/><rect x="183" y="705.5" width="3" height="1.6" fill="#2ac0f0"/><rect x="181" y="705.5" width="3" height="1.6" fill="#1ebdf0"/><rect x="180" y="708.8" width="3" height="1.6" fill="#2ac0f0"/><rect x="181" y="708.8" width="3" height="1.6" fill="#14a8e0"/><rect x="180" y="712.1" width="3" height="1.6" fill="#2ac0f0"/><rect x="179" y="712.1" width="3" height="1.6" fill="#1060d8"/><rect x="180" y="712.1" width="3" height="1.6" fill="#18b0e8"/><rect x="183" y="715.5" width="3" height="1.6" fill="#14a8e0"/><rect x="183" y="715.5" width="3" height="1.6" fill="#1ebdf0"/><rect x="180" y="715.5" width="3" height="1.6" fill="#2ac0f0"/><rect x="179" y="718.8" width="3" height="1.6" fill="#2ac0f0"/><rect x="183" y="718.8" width="3" height="1.6" fill="#14a8e0"/><rect x="181" y="718.8" width="3" height="1.6" fill="#18b0e8"/><rect x="179" y="722.1" width="3" height="1.6" fill="#10107a"/><rect x="179" y="722.1" width="3" height="1.6" fill="#1ebdf0"/><rect x="179" y="722.1" width="3" height="1.6" fill="#10107a"/><rect x="179" y="725.5" width="3" height="1.6" fill="#0a1a9a"/><rect x="182" y="725.5" width="3" height="1.6" fill="#000a80"/><rect x="181" y="725.5" width="3" height="1.6" fill="#18b0e8"/><rect x="181" y="728.8" width="3" height="1.6" fill="#0a1a9a"/><rect x="181" y="728.8" width="3" height="1.6" fill="#0a1a9a"/><rect x="181" y="728.8" width="3" height="1.6" fill="#14a8e0"/><rect x="179" y="732.1" width="3" height="1.6" fill="#10107a"/><rect x="182" y="732.1" width="3" height="1.6" fill="#18b0e8"/><rect x="182" y="732.1" width="3" height="1.6" fill="#1ebdf0"/><rect x="181" y="735.4" width="3" height="1.6" fill="#1ebdf0"/><rect x="180" y="735.4" width="3" height="1.6" fill="#1ebdf0"/><rect x="182" y="735.4" width="3" height="1.6" fill="#0a1a9a"/><rect x="181" y="738.8" width="3" height="1.6" fill="#0a1a9a"/><rect x="180" y="738.8" width="3" height="1.6" fill="#14a8e0"/><rect x="182" y="742.1" width="3" height="1.6" fill="#18b0e8"/><rect x="180" y="742.1" width="3" height="1.6" fill="#1ebdf0"/><rect x="184" y="668.8" width="3" height="1.6" fill="#2ac0f0"/><rect x="183" y="668.8" width="3" height="1.6" fill="#14a8e0"/><rect x="184" y="668.8" width="3" height="1.6" fill="#14a8e0"/><rect x="188" y="672.2" width="3" height="1.6" fill="#14a8e0"/><rect x="186" y="672.2" width="3" height="1.6" fill="#18b0e8"/><rect x="186" y="672.2" width="3" height="1.6" fill="#2ac0f0"/><rect x="186" y="675.5" width="3" height="1.6" fill="#18b0e8"/><rect x="186" y="675.5" width="3" height="1.6" fill="#18b0e8"/><rect x="187" y="675.5" width="3" height="1.6" fill="#18b0e8"/><rect x="187" y="678.8" width="3" height="1.6" fill="#14a8e0"/><rect x="188" y="678.8" width="3" height="1.6" fill="#14a8e0"/><rect x="186" y="678.8" width="3" height="1.6" fill="#18b0e8"/><rect x="188" y="682.2" width="3" height="1.6" fill="#18b0e8"/><rect x="189" y="685.5" width="3" height="1.6" fill="#1ebdf0"/><rect x="187" y="685.5" width="3" height="1.6" fill="#14a8e0"/><rect x="191" y="685.5" width="3" height="1.6" fill="#1ebdf0"/><rect x="188" y="688.8" width="3" height="1.6" fill="#18b0e8"/><rect x="191" y="688.8" width="3" height="1.6" fill="#0a48c0"/><rect x="192" y="688.8" width="3" height="1.6" fill="#2ac0f0"/><rect x="189" y="692.1" width="3" height="1.6" fill="#14a8e0"/><rect x="190" y="692.1" width="3" height="1.6" fill="#18b0e8"/><rect x="191" y="695.5" width="3" height="1.6" fill="#2ac0f0"/><rect x="193" y="695.5" width="3" height="1.6" fill="#14a8e0"/><rect x="193" y="698.8" width="3" height="1.6" fill="#1ebdf0"/><rect x="193" y="698.8" width="3" height="1.6" fill="#1ebdf0"/><rect x="193" y="698.8" width="3" height="1.6" fill="#2ac0f0"/><rect x="194" y="702.1" width="3" height="1.6" fill="#18b0e8"/><rect x="191" y="702.1" width="3" height="1.6" fill="#2ac0f0"/><rect x="194" y="708.8" width="3" height="1.6" fill="#1ebdf0"/><rect x="195" y="708.8" width="3" height="1.6" fill="#1ebdf0"/><rect x="194" y="708.8" width="3" height="1.6" fill="#18b0e8"/><rect x="191" y="712.1" width="3" height="1.6" fill="#2ac0f0"/><rect x="192" y="712.1" width="3" height="1.6" fill="#14a8e0"/><rect x="193" y="715.5" width="3" height="1.6" fill="#2ac0f0"/><rect x="197" y="715.5" width="3" height="1.6" fill="#14a8e0"/><rect x="196" y="718.8" width="3" height="1.6" fill="#18b0e8"/><rect x="193" y="718.8" width="3" height="1.6" fill="#2ac0f0"/><rect x="193" y="718.8" width="3" height="1.6" fill="#18b0e8"/><rect x="194" y="722.1" width="3" height="1.6" fill="#0a48c0"/><rect x="194" y="722.1" width="3" height="1.6" fill="#18b0e8"/><rect x="197" y="722.1" width="3" height="1.6" fill="#18b0e8"/><rect x="194" y="725.5" width="3" height="1.6" fill="#18b0e8"/><rect x="195" y="725.5" width="3" height="1.6" fill="#18b0e8"/><rect x="196" y="728.8" width="3" height="1.6" fill="#1ebdf0"/><rect x="199" y="728.8" width="3" height="1.6" fill="#18b0e8"/><rect x="197" y="728.8" width="3" height="1.6" fill="#18b0e8"/><rect x="197" y="732.1" width="3" height="1.6" fill="#18b0e8"/><rect x="200" y="732.1" width="3" height="1.6" fill="#1ebdf0"/><rect x="198" y="732.1" width="3" height="1.6" fill="#0a48c0"/><rect x="199" y="735.4" width="3" height="1.6" fill="#1ebdf0"/><rect x="198" y="735.4" width="3" height="1.6" fill="#14a8e0"/><rect x="200" y="735.4" width="3" height="1.6" fill="#2ac0f0"/><rect x="199" y="738.8" width="3" height="1.6" fill="#18b0e8"/><rect x="198" y="738.8" width="3" height="1.6" fill="#1ebdf0"/><rect x="200" y="738.8" width="3" height="1.6" fill="#2ac0f0"/><rect x="197" y="742.1" width="3" height="1.6" fill="#1ebdf0"/><rect x="202" y="742.1" width="3" height="1.6" fill="#18b0e8"/><rect x="201" y="725.5" width="3" height="1.6" fill="#0a1a9a"/><rect x="201" y="725.5" width="3" height="1.6" fill="#000a80"/><rect x="201" y="728.8" width="3" height="1.6" fill="#0a1a9a"/><rect x="200" y="728.8" width="3" height="1.6" fill="#000a80"/><rect x="199" y="732.1" width="3" height="1.6" fill="#10107a"/><rect x="199" y="735.4" width="3" height="1.6" fill="#000a80"/><rect x="200" y="738.8" width="3" height="1.6" fill="#10107a"/><rect x="200" y="738.8" width="3" height="1.6" fill="#0a1a9a"/><rect x="202" y="742.1" width="3" height="1.6" fill="#0a1a9a"/><rect x="201" y="742.1" width="3" height="1.6" fill="#000a80"/><rect x="201" y="652.2" width="3" height="1.6" fill="#14a8e0"/><rect x="199" y="655.5" width="3" height="1.6" fill="#0a48c0"/><rect x="199" y="662.2" width="3" height="1.6" fill="#18b0e8"/><rect x="200" y="668.8" width="3" height="1.6" fill="#2ac0f0"/><rect x="200" y="672.2" width="3" height="1.6" fill="#14a8e0"/><rect x="200" y="675.5" width="3" height="1.6" fill="#18b0e8"/><rect x="201" y="685.5" width="3" height="1.6" fill="#0a48c0"/><rect x="200" y="688.8" width="3" height="1.6" fill="#2ac0f0"/><rect x="200" y="692.1" width="3" height="1.6" fill="#2ac0f0"/><rect x="200" y="695.5" width="3" height="1.6" fill="#18b0e8"/><rect x="200" y="698.8" width="3" height="1.6" fill="#0a48c0"/><rect x="201" y="702.1" width="3" height="1.6" fill="#18b0e8"/><rect x="225" y="642.2" width="3" height="1.6" fill="#1060d8"/><rect x="227" y="642.2" width="3" height="1.6" fill="#2ac0f0"/><rect x="224" y="642.2" width="3" height="1.6" fill="#14a8e0"/><rect x="226" y="645.5" width="3" height="1.6" fill="#1ebdf0"/><rect x="229" y="645.5" width="3" height="1.6" fill="#14a8e0"/><rect x="228" y="645.5" width="3" height="1.6" fill="#1ebdf0"/><rect x="229" y="645.5" width="3" height="1.6" fill="#14a8e0"/><rect x="226" y="648.9" width="3" height="1.6" fill="#18b0e8"/><rect x="228" y="648.9" width="3" height="1.6" fill="#1ebdf0"/><rect x="224" y="648.9" width="3" height="1.6" fill="#1060d8"/><rect x="224" y="648.9" width="3" height="1.6" fill="#1ebdf0"/><rect x="229" y="652.2" width="3" height="1.6" fill="#2ac0f0"/><rect x="228" y="652.2" width="3" height="1.6" fill="#1ebdf0"/><rect x="224" y="652.2" width="3" height="1.6" fill="#2ac0f0"/><rect x="224" y="652.2" width="3" height="1.6" fill="#1ebdf0"/><rect x="226" y="655.5" width="3" height="1.6" fill="#1ebdf0"/><rect x="225" y="655.5" width="3" height="1.6" fill="#14a8e0"/><rect x="230" y="655.5" width="3" height="1.6" fill="#1ebdf0"/><rect x="224" y="658.9" width="3" height="1.6" fill="#18b0e8"/><rect x="225" y="658.9" width="3" height="1.6" fill="#14a8e0"/><rect x="227" y="658.9" width="3" height="1.6" fill="#2ac0f0"/><rect x="226" y="662.2" width="3" height="1.6" fill="#14a8e0"/><rect x="229" y="662.2" width="3" height="1.6" fill="#1060d8"/><rect x="228" y="662.2" width="3" height="1.6" fill="#14a8e0"/><rect x="227" y="665.5" width="3" height="1.6" fill="#1ebdf0"/><rect x="227" y="665.5" width="3" height="1.6" fill="#18b0e8"/><rect x="224" y="665.5" width="3" height="1.6" fill="#2ac0f0"/><rect x="226" y="665.5" width="3" height="1.6" fill="#2ac0f0"/><rect x="226" y="668.8" width="3" height="1.6" fill="#18b0e8"/><rect x="227" y="668.8" width="3" height="1.6" fill="#1ebdf0"/><rect x="229" y="668.8" width="3" height="1.6" fill="#14a8e0"/><rect x="227" y="668.8" width="3" height="1.6" fill="#18b0e8"/><rect x="228" y="672.2" width="3" height="1.6" fill="#18b0e8"/><rect x="228" y="672.2" width="3" height="1.6" fill="#2ac0f0"/><rect x="229" y="672.2" width="3" height="1.6" fill="#18b0e8"/><rect x="226" y="675.5" width="3" height="1.6" fill="#2ac0f0"/><rect x="228" y="675.5" width="3" height="1.6" fill="#14a8e0"/><rect x="229" y="675.5" width="3" height="1.6" fill="#14a8e0"/><rect x="230" y="675.5" width="3" height="1.6" fill="#2ac0f0"/><rect x="226" y="678.8" width="3" height="1.6" fill="#14a8e0"/><rect x="227" y="678.8" width="3" height="1.6" fill="#18b0e8"/><rect x="225" y="678.8" width="3" height="1.6" fill="#2ac0f0"/><rect x="228" y="678.8" width="3" height="1.6" fill="#2ac0f0"/><rect x="226" y="682.2" width="3" height="1.6" fill="#18b0e8"/><rect x="227" y="682.2" width="3" height="1.6" fill="#14a8e0"/><rect x="230" y="682.2" width="3" height="1.6" fill="#2ac0f0"/><rect x="226" y="685.5" width="3" height="1.6" fill="#1060d8"/><rect x="226" y="685.5" width="3" height="1.6" fill="#1060d8"/><rect x="226" y="685.5" width="3" height="1.6" fill="#1ebdf0"/><rect x="229" y="685.5" width="3" height="1.6" fill="#1ebdf0"/><rect x="230" y="688.8" width="3" height="1.6" fill="#2ac0f0"/><rect x="225" y="688.8" width="3" height="1.6" fill="#1ebdf0"/><rect x="231" y="688.8" width="3" height="1.6" fill="#2ac0f0"/><rect x="225" y="688.8" width="3" height="1.6" fill="#2ac0f0"/><rect x="230" y="692.1" width="3" height="1.6" fill="#1ebdf0"/><rect x="227" y="692.1" width="3" height="1.6" fill="#14a8e0"/><rect x="228" y="692.1" width="3" height="1.6" fill="#0a48c0"/><rect x="231" y="692.1" width="3" height="1.6" fill="#0a48c0"/><rect x="225" y="695.5" width="3" height="1.6" fill="#1ebdf0"/><rect x="227" y="695.5" width="3" height="1.6" fill="#18b0e8"/><rect x="229" y="695.5" width="3" height="1.6" fill="#2ac0f0"/><rect x="228" y="695.5" width="3" height="1.6" fill="#0a48c0"/><rect x="229" y="698.8" width="3" height="1.6" fill="#2ac0f0"/><rect x="229" y="698.8" width="3" height="1.6" fill="#2ac0f0"/><rect x="228" y="698.8" width="3" height="1.6" fill="#2ac0f0"/><rect x="229" y="698.8" width="3" height="1.6" fill="#1ebdf0"/><rect x="226" y="702.1" width="3" height="1.6" fill="#18b0e8"/><rect x="227" y="702.1" width="3" height="1.6" fill="#2ac0f0"/><rect x="231" y="702.1" width="3" height="1.6" fill="#18b0e8"/><rect x="228" y="705.5" width="3" height="1.6" fill="#14a8e0"/><rect x="230" y="705.5" width="3" height="1.6" fill="#0a48c0"/><rect x="228" y="705.5" width="3" height="1.6" fill="#1ebdf0"/><rect x="226" y="708.8" width="3" height="1.6" fill="#14a8e0"/><rect x="228" y="708.8" width="3" height="1.6" fill="#0a48c0"/><rect x="231" y="708.8" width="3" height="1.6" fill="#18b0e8"/><rect x="226" y="708.8" width="3" height="1.6" fill="#18b0e8"/><rect x="227" y="712.1" width="3" height="1.6" fill="#2ac0f0"/><rect x="232" y="712.1" width="3" height="1.6" fill="#1060d8"/><rect x="232" y="712.1" width="3" height="1.6" fill="#18b0e8"/><rect x="228" y="712.1" width="3" height="1.6" fill="#0a48c0"/><rect x="228" y="718.8" width="3" height="1.6" fill="#10107a"/><rect x="229" y="718.8" width="3" height="1.6" fill="#18b0e8"/><rect x="231" y="718.8" width="3" height="1.6" fill="#000a80"/><rect x="231" y="718.8" width="3" height="1.6" fill="#2ac0f0"/><rect x="231" y="722.1" width="3" height="1.6" fill="#0a1a9a"/><rect x="228" y="722.1" width="3" height="1.6" fill="#2ac0f0"/><rect x="227" y="722.1" width="3" height="1.6" fill="#1ebdf0"/><rect x="230" y="722.1" width="3" height="1.6" fill="#14a8e0"/><rect x="228" y="725.5" width="3" height="1.6" fill="#1ebdf0"/><rect x="229" y="725.5" width="3" height="1.6" fill="#000a80"/><rect x="231" y="728.8" width="3" height="1.6" fill="#000a80"/><rect x="227" y="728.8" width="3" height="1.6" fill="#18b0e8"/><rect x="227" y="728.8" width="3" height="1.6" fill="#10107a"/><rect x="231" y="728.8" width="3" height="1.6" fill="#1ebdf0"/><rect x="232" y="732.1" width="3" height="1.6" fill="#1ebdf0"/><rect x="228" y="732.1" width="3" height="1.6" fill="#18b0e8"/><rect x="228" y="732.1" width="3" height="1.6" fill="#000a80"/><rect x="233" y="732.1" width="3" height="1.6" fill="#0a1a9a"/><rect x="230" y="735.4" width="3" height="1.6" fill="#1ebdf0"/><rect x="227" y="735.4" width="3" height="1.6" fill="#2ac0f0"/><rect x="231" y="735.4" width="3" height="1.6" fill="#2ac0f0"/><rect x="229" y="735.4" width="3" height="1.6" fill="#18b0e8"/><rect x="229" y="738.8" width="3" height="1.6" fill="#18b0e8"/><rect x="228" y="738.8" width="3" height="1.6" fill="#2ac0f0"/><rect x="231" y="738.8" width="3" height="1.6" fill="#18b0e8"/><rect x="268" y="642.2" width="3" height="1.6" fill="#1ebdf0"/><rect x="271" y="642.2" width="3" height="1.6" fill="#14a8e0"/><rect x="269" y="642.2" width="3" height="1.6" fill="#1ebdf0"/><rect x="271" y="645.5" width="3" height="1.6" fill="#2ac0f0"/><rect x="273" y="645.5" width="3" height="1.6" fill="#14a8e0"/><rect x="268" y="645.5" width="3" height="1.6" fill="#2ac0f0"/><rect x="272" y="645.5" width="3" height="1.6" fill="#18b0e8"/><rect x="270" y="648.9" width="3" height="1.6" fill="#2ac0f0"/><rect x="271" y="648.9" width="3" height="1.6" fill="#18b0e8"/><rect x="273" y="648.9" width="3" height="1.6" fill="#18b0e8"/><rect x="273" y="652.2" width="3" height="1.6" fill="#18b0e8"/><rect x="273" y="652.2" width="3" height="1.6" fill="#1ebdf0"/><rect x="271" y="652.2" width="3" height="1.6" fill="#14a8e0"/><rect x="269" y="652.2" width="3" height="1.6" fill="#1ebdf0"/><rect x="273" y="655.5" width="3" height="1.6" fill="#2ac0f0"/><rect x="270" y="655.5" width="3" height="1.6" fill="#14a8e0"/><rect x="272" y="655.5" width="3" height="1.6" fill="#18b0e8"/><rect x="270" y="655.5" width="3" height="1.6" fill="#2ac0f0"/><rect x="274" y="658.9" width="3" height="1.6" fill="#2ac0f0"/><rect x="271" y="658.9" width="3" height="1.6" fill="#1ebdf0"/><rect x="270" y="658.9" width="3" height="1.6" fill="#2ac0f0"/><rect x="272" y="662.2" width="3" height="1.6" fill="#14a8e0"/><rect x="271" y="662.2" width="3" height="1.6" fill="#2ac0f0"/><rect x="272" y="662.2" width="3" height="1.6" fill="#0a48c0"/><rect x="270" y="662.2" width="3" height="1.6" fill="#14a8e0"/><rect x="274" y="665.5" width="3" height="1.6" fill="#18b0e8"/><rect x="274" y="665.5" width="3" height="1.6" fill="#18b0e8"/><rect x="274" y="665.5" width="3" height="1.6" fill="#1060d8"/><rect x="272" y="668.8" width="3" height="1.6" fill="#14a8e0"/><rect x="274" y="668.8" width="3" height="1.6" fill="#1ebdf0"/><rect x="275" y="668.8" width="3" height="1.6" fill="#14a8e0"/><rect x="274" y="668.8" width="3" height="1.6" fill="#14a8e0"/><rect x="272" y="672.2" width="3" height="1.6" fill="#1ebdf0"/><rect x="276" y="672.2" width="3" height="1.6" fill="#1ebdf0"/><rect x="274" y="672.2" width="3" height="1.6" fill="#14a8e0"/><rect x="273" y="675.5" width="3" height="1.6" fill="#1060d8"/><rect x="273" y="675.5" width="3" height="1.6" fill="#14a8e0"/><rect x="276" y="675.5" width="3" height="1.6" fill="#14a8e0"/><rect x="275" y="675.5" width="3" height="1.6" fill="#18b0e8"/><rect x="278" y="678.8" width="3" height="1.6" fill="#2ac0f0"/><rect x="279" y="678.8" width="3" height="1.6" fill="#2ac0f0"/><rect x="273" y="678.8" width="3" height="1.6" fill="#2ac0f0"/><rect x="276" y="682.2" width="3" height="1.6" fill="#1ebdf0"/><rect x="275" y="682.2" width="3" height="1.6" fill="#14a8e0"/><rect x="275" y="682.2" width="3" height="1.6" fill="#1ebdf0"/><rect x="277" y="682.2" width="3" height="1.6" fill="#14a8e0"/><rect x="275" y="685.5" width="3" height="1.6" fill="#2ac0f0"/><rect x="279" y="685.5" width="3" height="1.6" fill="#1ebdf0"/><rect x="274" y="685.5" width="3" height="1.6" fill="#0a48c0"/><rect x="275" y="685.5" width="3" height="1.6" fill="#18b0e8"/><rect x="279" y="688.8" width="3" height="1.6" fill="#14a8e0"/><rect x="279" y="688.8" width="3" height="1.6" fill="#18b0e8"/><rect x="277" y="688.8" width="3" height="1.6" fill="#1ebdf0"/><rect x="280" y="688.8" width="3" height="1.6" fill="#14a8e0"/><rect x="280" y="692.1" width="3" height="1.6" fill="#18b0e8"/><rect x="279" y="692.1" width="3" height="1.6" fill="#2ac0f0"/><rect x="278" y="692.1" width="3" height="1.6" fill="#18b0e8"/><rect x="278" y="692.1" width="3" height="1.6" fill="#1ebdf0"/><rect x="279" y="695.5" width="3" height="1.6" fill="#14a8e0"/><rect x="276" y="695.5" width="3" height="1.6" fill="#1060d8"/><rect x="280" y="695.5" width="3" height="1.6" fill="#18b0e8"/><rect x="281" y="702.1" width="3" height="1.6" fill="#18b0e8"/><rect x="277" y="702.1" width="3" height="1.6" fill="#18b0e8"/><rect x="281" y="702.1" width="3" height="1.6" fill="#14a8e0"/><rect x="277" y="705.5" width="3" height="1.6" fill="#1060d8"/><rect x="277" y="705.5" width="3" height="1.6" fill="#0a48c0"/><rect x="277" y="705.5" width="3" height="1.6" fill="#1ebdf0"/><rect x="278" y="705.5" width="3" height="1.6" fill="#1ebdf0"/><rect x="279" y="708.8" width="3" height="1.6" fill="#14a8e0"/><rect x="279" y="708.8" width="3" height="1.6" fill="#10107a"/><rect x="278" y="712.1" width="3" height="1.6" fill="#000a80"/><rect x="282" y="712.1" width="3" height="1.6" fill="#2ac0f0"/><rect x="281" y="712.1" width="3" height="1.6" fill="#2ac0f0"/><rect x="278" y="712.1" width="3" height="1.6" fill="#0a1a9a"/><rect x="281" y="715.5" width="3" height="1.6" fill="#10107a"/><rect x="279" y="715.5" width="3" height="1.6" fill="#1ebdf0"/><rect x="281" y="715.5" width="3" height="1.6" fill="#1ebdf0"/><rect x="281" y="715.5" width="3" height="1.6" fill="#1ebdf0"/><rect x="282" y="718.8" width="3" height="1.6" fill="#18b0e8"/><rect x="283" y="718.8" width="3" height="1.6" fill="#10107a"/><rect x="279" y="718.8" width="3" height="1.6" fill="#0a1a9a"/><rect x="283" y="718.8" width="3" height="1.6" fill="#14a8e0"/><rect x="280" y="722.1" width="3" height="1.6" fill="#0a1a9a"/><rect x="282" y="722.1" width="3" height="1.6" fill="#1ebdf0"/><rect x="280" y="722.1" width="3" height="1.6" fill="#1ebdf0"/><rect x="281" y="722.1" width="3" height="1.6" fill="#000a80"/><rect x="285" y="725.5" width="3" height="1.6" fill="#18b0e8"/><rect x="285" y="725.5" width="3" height="1.6" fill="#18b0e8"/><rect x="281" y="725.5" width="3" height="1.6" fill="#18b0e8"/><rect x="286" y="728.8" width="3" height="1.6" fill="#1ebdf0"/><rect x="285" y="728.8" width="3" height="1.6" fill="#10107a"/><rect x="281" y="728.8" width="3" height="1.6" fill="#1ebdf0"/><rect x="280" y="728.8" width="3" height="1.6" fill="#0a1a9a"/><rect x="284" y="732.1" width="3" height="1.6" fill="#2ac0f0"/><rect x="285" y="732.1" width="3" height="1.6" fill="#18b0e8"/><rect x="286" y="732.1" width="3" height="1.6" fill="#14a8e0"/><rect x="285" y="732.1" width="3" height="1.6" fill="#10107a"/><rect x="282" y="735.4" width="3" height="1.6" fill="#0a1a9a"/><rect x="287" y="735.4" width="3" height="1.6" fill="#1ebdf0"/><rect x="284" y="735.4" width="3" height="1.6" fill="#2ac0f0"/><rect x="285" y="738.8" width="3" height="1.6" fill="#10107a"/><rect x="284" y="738.8" width="3" height="1.6" fill="#2ac0f0"/><rect x="286" y="738.8" width="3" height="1.6" fill="#14a8e0"/><rect x="287" y="742.1" width="3" height="1.6" fill="#1ebdf0"/><rect x="287" y="742.1" width="3" height="1.6" fill="#18b0e8"/><rect x="287" y="742.1" width="3" height="1.6" fill="#2ac0f0"/><rect x="286" y="742.1" width="3" height="1.6" fill="#1ebdf0"/><rect x="359" y="642.2" width="3" height="1.6" fill="#18b0e8"/><rect x="358" y="642.2" width="3" height="1.6" fill="#14a8e0"/><rect x="360" y="642.2" width="3" height="1.6" fill="#1ebdf0"/><rect x="359" y="642.2" width="3" height="1.6" fill="#2ac0f0"/><rect x="356" y="642.2" width="3" height="1.6" fill="#0a48c0"/><rect x="360" y="645.5" width="3" height="1.6" fill="#2ac0f0"/><rect x="357" y="645.5" width="3" height="1.6" fill="#1060d8"/><rect x="357" y="645.5" width="3" height="1.6" fill="#2ac0f0"/><rect x="356" y="645.5" width="3" height="1.6" fill="#2ac0f0"/><rect x="357" y="645.5" width="3" height="1.6" fill="#0a48c0"/><rect x="357" y="648.9" width="3" height="1.6" fill="#14a8e0"/><rect x="358" y="648.9" width="3" height="1.6" fill="#18b0e8"/><rect x="355" y="648.9" width="3" height="1.6" fill="#18b0e8"/><rect x="357" y="648.9" width="3" height="1.6" fill="#18b0e8"/><rect x="361" y="648.9" width="3" height="1.6" fill="#14a8e0"/><rect x="357" y="652.2" width="3" height="1.6" fill="#18b0e8"/><rect x="362" y="652.2" width="3" height="1.6" fill="#1ebdf0"/><rect x="356" y="652.2" width="3" height="1.6" fill="#14a8e0"/><rect x="360" y="652.2" width="3" height="1.6" fill="#1ebdf0"/><rect x="361" y="655.5" width="3" height="1.6" fill="#18b0e8"/><rect x="356" y="655.5" width="3" height="1.6" fill="#14a8e0"/><rect x="358" y="655.5" width="3" height="1.6" fill="#14a8e0"/><rect x="357" y="658.9" width="3" height="1.6" fill="#14a8e0"/><rect x="363" y="658.9" width="3" height="1.6" fill="#1060d8"/><rect x="359" y="658.9" width="3" height="1.6" fill="#18b0e8"/><rect x="362" y="658.9" width="3" height="1.6" fill="#0a48c0"/><rect x="357" y="662.2" width="3" height="1.6" fill="#2ac0f0"/><rect x="361" y="662.2" width="3" height="1.6" fill="#1ebdf0"/><rect x="361" y="662.2" width="3" height="1.6" fill="#18b0e8"/><rect x="361" y="662.2" width="3" height="1.6" fill="#14a8e0"/><rect x="363" y="665.5" width="3" height="1.6" fill="#14a8e0"/><rect x="364" y="665.5" width="3" height="1.6" fill="#2ac0f0"/><rect x="363" y="665.5" width="3" height="1.6" fill="#1ebdf0"/><rect x="360" y="665.5" width="3" height="1.6" fill="#1ebdf0"/><rect x="363" y="665.5" width="3" height="1.6" fill="#2ac0f0"/><rect x="365" y="668.8" width="3" height="1.6" fill="#2ac0f0"/><rect x="360" y="668.8" width="3" height="1.6" fill="#18b0e8"/><rect x="364" y="668.8" width="3" height="1.6" fill="#2ac0f0"/><rect x="361" y="672.2" width="3" height="1.6" fill="#14a8e0"/><rect x="360" y="672.2" width="3" height="1.6" fill="#14a8e0"/><rect x="361" y="672.2" width="3" height="1.6" fill="#2ac0f0"/><rect x="360" y="672.2" width="3" height="1.6" fill="#14a8e0"/><rect x="360" y="672.2" width="3" height="1.6" fill="#14a8e0"/><rect x="361" y="675.5" width="3" height="1.6" fill="#2ac0f0"/><rect x="359" y="675.5" width="3" height="1.6" fill="#2ac0f0"/><rect x="366" y="675.5" width="3" height="1.6" fill="#18b0e8"/><rect x="360" y="675.5" width="3" height="1.6" fill="#14a8e0"/><rect x="365" y="678.8" width="3" height="1.6" fill="#18b0e8"/><rect x="366" y="678.8" width="3" height="1.6" fill="#1ebdf0"/><rect x="362" y="678.8" width="3" height="1.6" fill="#2ac0f0"/><rect x="363" y="678.8" width="3" height="1.6" fill="#18b0e8"/><rect x="361" y="678.8" width="3" height="1.6" fill="#14a8e0"/><rect x="366" y="682.2" width="3" height="1.6" fill="#2ac0f0"/><rect x="367" y="682.2" width="3" height="1.6" fill="#1060d8"/><rect x="365" y="682.2" width="3" height="1.6" fill="#14a8e0"/><rect x="365" y="682.2" width="3" height="1.6" fill="#18b0e8"/><rect x="365" y="682.2" width="3" height="1.6" fill="#1ebdf0"/><rect x="366" y="685.5" width="3" height="1.6" fill="#2ac0f0"/><rect x="366" y="685.5" width="3" height="1.6" fill="#2ac0f0"/><rect x="366" y="685.5" width="3" height="1.6" fill="#2ac0f0"/><rect x="368" y="688.8" width="3" height="1.6" fill="#2ac0f0"/><rect x="368" y="688.8" width="3" height="1.6" fill="#2ac0f0"/><rect x="365" y="688.8" width="3" height="1.6" fill="#2ac0f0"/><rect x="364" y="688.8" width="3" height="1.6" fill="#14a8e0"/><rect x="362" y="688.8" width="3" height="1.6" fill="#1ebdf0"/><rect x="368" y="692.1" width="3" height="1.6" fill="#1060d8"/><rect x="368" y="692.1" width="3" height="1.6" fill="#18b0e8"/><rect x="367" y="692.1" width="3" height="1.6" fill="#1ebdf0"/><rect x="363" y="692.1" width="3" height="1.6" fill="#2ac0f0"/><rect x="362" y="692.1" width="3" height="1.6" fill="#1ebdf0"/><rect x="365" y="695.5" width="3" height="1.6" fill="#14a8e0"/><rect x="368" y="695.5" width="3" height="1.6" fill="#2ac0f0"/><rect x="369" y="695.5" width="3" height="1.6" fill="#0a48c0"/><rect x="365" y="695.5" width="3" height="1.6" fill="#14a8e0"/><rect x="367" y="702.1" width="3" height="1.6" fill="#1060d8"/><rect x="364" y="702.1" width="3" height="1.6" fill="#1ebdf0"/><rect x="364" y="702.1" width="3" height="1.6" fill="#18b0e8"/><rect x="364" y="702.1" width="3" height="1.6" fill="#2ac0f0"/><rect x="370" y="702.1" width="3" height="1.6" fill="#1ebdf0"/><rect x="365" y="705.5" width="3" height="1.6" fill="#0a48c0"/><rect x="368" y="705.5" width="3" height="1.6" fill="#2ac0f0"/><rect x="364" y="705.5" width="3" height="1.6" fill="#0a48c0"/><rect x="364" y="705.5" width="3" height="1.6" fill="#1ebdf0"/><rect x="370" y="708.8" width="3" height="1.6" fill="#14a8e0"/><rect x="365" y="708.8" width="3" height="1.6" fill="#000a80"/><rect x="370" y="708.8" width="3" height="1.6" fill="#0a1a9a"/><rect x="366" y="708.8" width="3" height="1.6" fill="#2ac0f0"/><rect x="364" y="708.8" width="3" height="1.6" fill="#2ac0f0"/><rect x="370" y="712.1" width="3" height="1.6" fill="#14a8e0"/><rect x="365" y="712.1" width="3" height="1.6" fill="#10107a"/><rect x="365" y="712.1" width="3" height="1.6" fill="#1ebdf0"/><rect x="365" y="715.5" width="3" height="1.6" fill="#1ebdf0"/><rect x="367" y="715.5" width="3" height="1.6" fill="#14a8e0"/><rect x="370" y="715.5" width="3" height="1.6" fill="#0a1a9a"/><rect x="368" y="715.5" width="3" height="1.6" fill="#1ebdf0"/><rect x="366" y="715.5" width="3" height="1.6" fill="#000a80"/><rect x="372" y="718.8" width="3" height="1.6" fill="#14a8e0"/><rect x="370" y="718.8" width="3" height="1.6" fill="#14a8e0"/><rect x="370" y="718.8" width="3" height="1.6" fill="#18b0e8"/><rect x="369" y="718.8" width="3" height="1.6" fill="#18b0e8"/><rect x="369" y="718.8" width="3" height="1.6" fill="#18b0e8"/><rect x="372" y="722.1" width="3" height="1.6" fill="#10107a"/><rect x="372" y="722.1" width="3" height="1.6" fill="#1ebdf0"/><rect x="373" y="722.1" width="3" height="1.6" fill="#0a1a9a"/><rect x="367" y="722.1" width="3" height="1.6" fill="#0a1a9a"/><rect x="366" y="722.1" width="3" height="1.6" fill="#14a8e0"/><rect x="368" y="725.5" width="3" height="1.6" fill="#0a1a9a"/><rect x="373" y="725.5" width="3" height="1.6" fill="#0a1a9a"/><rect x="368" y="725.5" width="3" height="1.6" fill="#1ebdf0"/><rect x="373" y="725.5" width="3" height="1.6" fill="#1ebdf0"/><rect x="367" y="725.5" width="3" height="1.6" fill="#1ebdf0"/><rect x="372" y="728.8" width="3" height="1.6" fill="#1ebdf0"/><rect x="372" y="728.8" width="3" height="1.6" fill="#14a8e0"/><rect x="367" y="728.8" width="3" height="1.6" fill="#1ebdf0"/><rect x="371" y="728.8" width="3" height="1.6" fill="#18b0e8"/><rect x="372" y="728.8" width="3" height="1.6" fill="#000a80"/><rect x="368" y="732.1" width="3" height="1.6" fill="#1ebdf0"/><rect x="370" y="732.1" width="3" height="1.6" fill="#1ebdf0"/><rect x="370" y="732.1" width="3" height="1.6" fill="#000a80"/><rect x="372" y="732.1" width="3" height="1.6" fill="#18b0e8"/><rect x="369" y="735.4" width="3" height="1.6" fill="#10107a"/><rect x="370" y="735.4" width="3" height="1.6" fill="#14a8e0"/><rect x="370" y="735.4" width="3" height="1.6" fill="#1ebdf0"/><rect x="374" y="738.8" width="3" height="1.6" fill="#10107a"/><rect x="375" y="738.8" width="3" height="1.6" fill="#1ebdf0"/><rect x="376" y="738.8" width="3" height="1.6" fill="#18b0e8"/><rect x="371" y="738.8" width="3" height="1.6" fill="#000a80"/><rect x="370" y="738.8" width="3" height="1.6" fill="#10107a"/><rect x="373" y="742.1" width="3" height="1.6" fill="#2ac0f0"/><rect x="371" y="742.1" width="3" height="1.6" fill="#1ebdf0"/><rect x="373" y="742.1" width="3" height="1.6" fill="#2ac0f0"/><rect x="375" y="742.1" width="3" height="1.6" fill="#000a80"/><rect x="373" y="742.1" width="3" height="1.6" fill="#000a80"/><rect x="372" y="708.8" width="3" height="1.6" fill="#1060d8"/><rect x="374" y="702.1" width="3" height="1.6" fill="#18b0e8"/><rect x="376" y="695.5" width="3" height="1.6" fill="#1ebdf0"/><rect x="374" y="692.1" width="3" height="1.6" fill="#1ebdf0"/><rect x="375" y="688.8" width="3" height="1.6" fill="#1060d8"/><rect x="376" y="685.5" width="3" height="1.6" fill="#2ac0f0"/><rect x="375" y="682.2" width="3" height="1.6" fill="#1ebdf0"/><rect x="377" y="678.8" width="3" height="1.6" fill="#18b0e8"/><rect x="377" y="675.5" width="3" height="1.6" fill="#2ac0f0"/><rect x="378" y="672.2" width="3" height="1.6" fill="#1ebdf0"/><rect x="376" y="668.8" width="3" height="1.6" fill="#0a48c0"/><rect x="377" y="668.8" width="3" height="1.6" fill="#14a8e0"/><rect x="375" y="668.8" width="3" height="1.6" fill="#14a8e0"/><rect x="381" y="662.2" width="3" height="1.6" fill="#1ebdf0"/><rect x="383" y="662.2" width="3" height="1.6" fill="#18b0e8"/><rect x="386" y="662.2" width="3" height="1.6" fill="#18b0e8"/><rect x="384" y="662.2" width="3" height="1.6" fill="#1ebdf0"/><rect x="380" y="662.2" width="3" height="1.6" fill="#0a48c0"/><rect x="383" y="665.5" width="3" height="1.6" fill="#1ebdf0"/><rect x="382" y="665.5" width="3" height="1.6" fill="#1ebdf0"/><rect x="383" y="665.5" width="3" height="1.6" fill="#1060d8"/><rect x="391" y="668.8" width="3" height="1.6" fill="#2ac0f0"/><rect x="389" y="668.8" width="3" height="1.6" fill="#2ac0f0"/><rect x="385" y="668.8" width="3" height="1.6" fill="#18b0e8"/><rect x="392" y="672.2" width="3" height="1.6" fill="#1ebdf0"/><rect x="388" y="672.2" width="3" height="1.6" fill="#14a8e0"/><rect x="388" y="672.2" width="3" height="1.6" fill="#2ac0f0"/><rect x="386" y="672.2" width="3" height="1.6" fill="#2ac0f0"/><rect x="386" y="672.2" width="3" height="1.6" fill="#1ebdf0"/><rect x="390" y="672.2" width="3" height="1.6" fill="#14a8e0"/><rect x="390" y="675.5" width="3" height="1.6" fill="#18b0e8"/><rect x="387" y="675.5" width="3" height="1.6" fill="#2ac0f0"/><rect x="390" y="675.5" width="3" height="1.6" fill="#1ebdf0"/><rect x="388" y="675.5" width="3" height="1.6" fill="#14a8e0"/><rect x="395" y="678.8" width="3" height="1.6" fill="#18b0e8"/><rect x="391" y="678.8" width="3" height="1.6" fill="#1ebdf0"/><rect x="389" y="678.8" width="3" height="1.6" fill="#14a8e0"/><rect x="388" y="678.8" width="3" height="1.6" fill="#2ac0f0"/><rect x="390" y="682.2" width="3" height="1.6" fill="#1ebdf0"/><rect x="396" y="682.2" width="3" height="1.6" fill="#18b0e8"/><rect x="393" y="682.2" width="3" height="1.6" fill="#1ebdf0"/><rect x="393" y="682.2" width="3" height="1.6" fill="#1060d8"/><rect x="394" y="685.5" width="3" height="1.6" fill="#2ac0f0"/><rect x="395" y="685.5" width="3" height="1.6" fill="#1ebdf0"/><rect x="391" y="685.5" width="3" height="1.6" fill="#18b0e8"/><rect x="389" y="685.5" width="3" height="1.6" fill="#1ebdf0"/><rect x="396" y="688.8" width="3" height="1.6" fill="#18b0e8"/><rect x="392" y="688.8" width="3" height="1.6" fill="#18b0e8"/><rect x="395" y="688.8" width="3" height="1.6" fill="#0a48c0"/><rect x="394" y="692.1" width="3" height="1.6" fill="#14a8e0"/><rect x="391" y="692.1" width="3" height="1.6" fill="#18b0e8"/><rect x="391" y="692.1" width="3" height="1.6" fill="#14a8e0"/><rect x="398" y="692.1" width="3" height="1.6" fill="#1ebdf0"/><rect x="393" y="695.5" width="3" height="1.6" fill="#1ebdf0"/><rect x="397" y="695.5" width="3" height="1.6" fill="#1ebdf0"/><rect x="397" y="695.5" width="3" height="1.6" fill="#14a8e0"/><rect x="396" y="695.5" width="3" height="1.6" fill="#18b0e8"/><rect x="393" y="698.8" width="3" height="1.6" fill="#18b0e8"/><rect x="394" y="698.8" width="3" height="1.6" fill="#18b0e8"/><rect x="392" y="698.8" width="3" height="1.6" fill="#14a8e0"/><rect x="393" y="698.8" width="3" height="1.6" fill="#18b0e8"/><rect x="400" y="698.8" width="3" height="1.6" fill="#14a8e0"/><rect x="394" y="698.8" width="3" height="1.6" fill="#1ebdf0"/><rect x="398" y="698.8" width="3" height="1.6" fill="#18b0e8"/><rect x="397" y="695.5" width="3" height="1.6" fill="#1ebdf0"/><rect x="396" y="695.5" width="3" height="1.6" fill="#2ac0f0"/><rect x="392" y="695.5" width="3" height="1.6" fill="#14a8e0"/><rect x="400" y="692.1" width="3" height="1.6" fill="#18b0e8"/><rect x="403" y="692.1" width="3" height="1.6" fill="#1ebdf0"/><rect x="394" y="692.1" width="3" height="1.6" fill="#18b0e8"/><rect x="401" y="692.1" width="3" height="1.6" fill="#0a48c0"/><rect x="401" y="692.1" width="3" height="1.6" fill="#18b0e8"/><rect x="398" y="688.8" width="3" height="1.6" fill="#14a8e0"/><rect x="404" y="688.8" width="3" height="1.6" fill="#14a8e0"/><rect x="402" y="688.8" width="3" height="1.6" fill="#14a8e0"/><rect x="397" y="685.5" width="3" height="1.6" fill="#18b0e8"/><rect x="397" y="685.5" width="3" height="1.6" fill="#14a8e0"/><rect x="402" y="685.5" width="3" height="1.6" fill="#14a8e0"/><rect x="400" y="685.5" width="3" height="1.6" fill="#14a8e0"/><rect x="405" y="685.5" width="3" height="1.6" fill="#18b0e8"/><rect x="396" y="685.5" width="3" height="1.6" fill="#2ac0f0"/><rect x="403" y="685.5" width="3" height="1.6" fill="#18b0e8"/><rect x="405" y="685.5" width="3" height="1.6" fill="#18b0e8"/><rect x="402" y="685.5" width="3" height="1.6" fill="#1ebdf0"/><rect x="395" y="685.5" width="3" height="1.6" fill="#2ac0f0"/><rect x="405" y="685.5" width="3" height="1.6" fill="#1ebdf0"/><rect x="395" y="685.5" width="3" height="1.6" fill="#2ac0f0"/><rect x="399" y="682.2" width="3" height="1.6" fill="#1060d8"/><rect x="400" y="682.2" width="3" height="1.6" fill="#2ac0f0"/><rect x="405" y="682.2" width="3" height="1.6" fill="#2ac0f0"/><rect x="397" y="682.2" width="3" height="1.6" fill="#1ebdf0"/><rect x="397" y="682.2" width="3" height="1.6" fill="#18b0e8"/><rect x="406" y="675.5" width="3" height="1.6" fill="#14a8e0"/><rect x="404" y="675.5" width="3" height="1.6" fill="#1ebdf0"/><rect x="407" y="675.5" width="3" height="1.6" fill="#2ac0f0"/><rect x="400" y="675.5" width="3" height="1.6" fill="#14a8e0"/><rect x="404" y="675.5" width="3" height="1.6" fill="#14a8e0"/><rect x="406" y="675.5" width="3" height="1.6" fill="#1ebdf0"/><rect x="403" y="675.5" width="3" height="1.6" fill="#1ebdf0"/><rect x="404" y="675.5" width="3" height="1.6" fill="#0a48c0"/><rect x="401" y="672.2" width="3" height="1.6" fill="#2ac0f0"/><rect x="398" y="672.2" width="3" height="1.6" fill="#18b0e8"/><rect x="401" y="672.2" width="3" height="1.6" fill="#14a8e0"/><rect x="409" y="672.2" width="3" height="1.6" fill="#2ac0f0"/><rect x="399" y="672.2" width="3" height="1.6" fill="#2ac0f0"/><rect x="407" y="672.2" width="3" height="1.6" fill="#2ac0f0"/><rect x="405" y="668.8" width="3" height="1.6" fill="#2ac0f0"/><rect x="400" y="668.8" width="3" height="1.6" fill="#18b0e8"/><rect x="407" y="668.8" width="3" height="1.6" fill="#1ebdf0"/><rect x="400" y="668.8" width="3" height="1.6" fill="#2ac0f0"/><rect x="405" y="668.8" width="3" height="1.6" fill="#1ebdf0"/><rect x="400" y="668.8" width="3" height="1.6" fill="#14a8e0"/><rect x="409" y="668.8" width="3" height="1.6" fill="#14a8e0"/><rect x="405" y="668.8" width="3" height="1.6" fill="#2ac0f0"/><rect x="409" y="665.5" width="3" height="1.6" fill="#2ac0f0"/><rect x="401" y="665.5" width="3" height="1.6" fill="#2ac0f0"/><rect x="410" y="665.5" width="3" height="1.6" fill="#18b0e8"/><rect x="408" y="665.5" width="3" height="1.6" fill="#1060d8"/><rect x="408" y="665.5" width="3" height="1.6" fill="#1ebdf0"/><rect x="408" y="665.5" width="3" height="1.6" fill="#1ebdf0"/><rect x="411" y="665.5" width="3" height="1.6" fill="#1ebdf0"/><rect x="404" y="665.5" width="3" height="1.6" fill="#14a8e0"/><rect x="403" y="662.2" width="3" height="1.6" fill="#14a8e0"/><rect x="405" y="662.2" width="3" height="1.6" fill="#14a8e0"/><rect x="404" y="662.2" width="3" height="1.6" fill="#14a8e0"/><rect x="412" y="662.2" width="3" height="1.6" fill="#2ac0f0"/><rect x="406" y="662.2" width="3" height="1.6" fill="#18b0e8"/><rect x="412" y="662.2" width="3" height="1.6" fill="#2ac0f0"/><rect x="401" y="662.2" width="3" height="1.6" fill="#18b0e8"/><rect x="405" y="662.2" width="3" height="1.6" fill="#2ac0f0"/><rect x="409" y="662.2" width="3" height="1.6" fill="#1060d8"/><rect x="408" y="662.2" width="3" height="1.6" fill="#0a48c0"/><rect x="411" y="662.2" width="3" height="1.6" fill="#2ac0f0"/><rect x="405" y="662.2" width="3" height="1.6" fill="#2ac0f0"/><rect x="410" y="658.9" width="3" height="1.6" fill="#2ac0f0"/><rect x="406" y="658.9" width="3" height="1.6" fill="#14a8e0"/><rect x="411" y="658.9" width="3" height="1.6" fill="#18b0e8"/><rect x="410" y="658.9" width="3" height="1.6" fill="#1060d8"/><rect x="412" y="658.9" width="3" height="1.6" fill="#2ac0f0"/><rect x="412" y="658.9" width="3" height="1.6" fill="#2ac0f0"/><rect x="406" y="655.5" width="3" height="1.6" fill="#18b0e8"/><rect x="414" y="655.5" width="3" height="1.6" fill="#1ebdf0"/><rect x="414" y="655.5" width="3" height="1.6" fill="#2ac0f0"/><rect x="410" y="655.5" width="3" height="1.6" fill="#18b0e8"/><rect x="409" y="655.5" width="3" height="1.6" fill="#1060d8"/><rect x="406" y="655.5" width="3" height="1.6" fill="#18b0e8"/><rect x="413" y="652.2" width="3" height="1.6" fill="#1ebdf0"/><rect x="412" y="652.2" width="3" height="1.6" fill="#14a8e0"/><rect x="414" y="652.2" width="3" height="1.6" fill="#14a8e0"/><rect x="411" y="652.2" width="3" height="1.6" fill="#2ac0f0"/><rect x="408" y="652.2" width="3" height="1.6" fill="#1ebdf0"/><rect x="413" y="648.9" width="3" height="1.6" fill="#18b0e8"/><rect x="413" y="648.9" width="3" height="1.6" fill="#1ebdf0"/><rect x="415" y="648.9" width="3" height="1.6" fill="#14a8e0"/><rect x="410" y="648.9" width="3" height="1.6" fill="#18b0e8"/><rect x="417" y="648.9" width="3" height="1.6" fill="#2ac0f0"/><rect x="417" y="648.9" width="3" height="1.6" fill="#1ebdf0"/><rect x="417" y="648.9" width="3" height="1.6" fill="#14a8e0"/><rect x="415" y="648.9" width="3" height="1.6" fill="#0a48c0"/><rect x="413" y="648.9" width="3" height="1.6" fill="#18b0e8"/><rect x="416" y="648.9" width="3" height="1.6" fill="#1060d8"/><rect x="414" y="652.2" width="3" height="1.6" fill="#18b0e8"/><rect x="417" y="652.2" width="3" height="1.6" fill="#1ebdf0"/><rect x="414" y="652.2" width="3" height="1.6" fill="#18b0e8"/><rect x="417" y="652.2" width="3" height="1.6" fill="#18b0e8"/><rect x="418" y="655.5" width="3" height="1.6" fill="#18b0e8"/><rect x="415" y="655.5" width="3" height="1.6" fill="#1060d8"/><rect x="413" y="655.5" width="3" height="1.6" fill="#14a8e0"/><rect x="416" y="655.5" width="3" height="1.6" fill="#1060d8"/><rect x="419" y="658.9" width="3" height="1.6" fill="#18b0e8"/><rect x="414" y="658.9" width="3" height="1.6" fill="#18b0e8"/><rect x="419" y="658.9" width="3" height="1.6" fill="#1ebdf0"/><rect x="417" y="658.9" width="3" height="1.6" fill="#2ac0f0"/><rect x="416" y="662.2" width="3" height="1.6" fill="#14a8e0"/><rect x="413" y="662.2" width="3" height="1.6" fill="#0a48c0"/><rect x="416" y="662.2" width="3" height="1.6" fill="#2ac0f0"/><rect x="418" y="665.5" width="3" height="1.6" fill="#18b0e8"/><rect x="416" y="665.5" width="3" height="1.6" fill="#2ac0f0"/><rect x="418" y="665.5" width="3" height="1.6" fill="#18b0e8"/><rect x="416" y="665.5" width="3" height="1.6" fill="#18b0e8"/><rect x="420" y="668.8" width="3" height="1.6" fill="#14a8e0"/><rect x="416" y="668.8" width="3" height="1.6" fill="#14a8e0"/><rect x="415" y="668.8" width="3" height="1.6" fill="#1ebdf0"/><rect x="417" y="668.8" width="3" height="1.6" fill="#1060d8"/><rect x="418" y="672.2" width="3" height="1.6" fill="#14a8e0"/><rect x="418" y="672.2" width="3" height="1.6" fill="#1ebdf0"/><rect x="420" y="672.2" width="3" height="1.6" fill="#14a8e0"/><rect x="416" y="675.5" width="3" height="1.6" fill="#1ebdf0"/><rect x="418" y="675.5" width="3" height="1.6" fill="#2ac0f0"/><rect x="420" y="675.5" width="3" height="1.6" fill="#18b0e8"/><rect x="419" y="678.8" width="3" height="1.6" fill="#1ebdf0"/><rect x="422" y="678.8" width="3" height="1.6" fill="#2ac0f0"/><rect x="419" y="678.8" width="3" height="1.6" fill="#1ebdf0"/><rect x="419" y="678.8" width="3" height="1.6" fill="#14a8e0"/><rect x="418" y="682.2" width="3" height="1.6" fill="#2ac0f0"/><rect x="422" y="682.2" width="3" height="1.6" fill="#1060d8"/><rect x="419" y="682.2" width="3" height="1.6" fill="#18b0e8"/><rect x="417" y="685.5" width="3" height="1.6" fill="#18b0e8"/><rect x="419" y="685.5" width="3" height="1.6" fill="#0a48c0"/><rect x="424" y="685.5" width="3" height="1.6" fill="#1ebdf0"/><rect x="424" y="688.8" width="3" height="1.6" fill="#1060d8"/><rect x="419" y="688.8" width="3" height="1.6" fill="#14a8e0"/><rect x="422" y="688.8" width="3" height="1.6" fill="#18b0e8"/><rect x="424" y="688.8" width="3" height="1.6" fill="#1060d8"/><rect x="419" y="688.8" width="3" height="1.6" fill="#1060d8"/><rect x="420" y="688.8" width="3" height="1.6" fill="#0a48c0"/><rect x="423" y="688.8" width="3" height="1.6" fill="#14a8e0"/><rect x="421" y="692.1" width="3" height="1.6" fill="#14a8e0"/><rect x="420" y="695.5" width="3" height="1.6" fill="#0a1a9a"/><rect x="422" y="695.5" width="3" height="1.6" fill="#14a8e0"/><rect x="422" y="695.5" width="3" height="1.6" fill="#000a80"/><rect x="423" y="698.8" width="3" height="1.6" fill="#000a80"/><rect x="421" y="698.8" width="3" height="1.6" fill="#18b0e8"/><rect x="423" y="702.1" width="3" height="1.6" fill="#18b0e8"/><rect x="422" y="702.1" width="3" height="1.6" fill="#10107a"/><rect x="422" y="702.1" width="3" height="1.6" fill="#1ebdf0"/><rect x="421" y="705.5" width="3" height="1.6" fill="#18b0e8"/><rect x="422" y="705.5" width="3" height="1.6" fill="#14a8e0"/><rect x="421" y="708.8" width="3" height="1.6" fill="#2ac0f0"/><rect x="422" y="712.1" width="3" height="1.6" fill="#1ebdf0"/><rect x="421" y="712.1" width="3" height="1.6" fill="#2ac0f0"/><rect x="421" y="715.5" width="3" height="1.6" fill="#14a8e0"/><rect x="424" y="715.5" width="3" height="1.6" fill="#1ebdf0"/><rect x="423" y="718.8" width="3" height="1.6" fill="#2ac0f0"/><rect x="421" y="718.8" width="3" height="1.6" fill="#1ebdf0"/><rect x="420" y="718.8" width="3" height="1.6" fill="#1ebdf0"/><rect x="421" y="725.5" width="3" height="1.6" fill="#2ac0f0"/><rect x="422" y="725.5" width="3" height="1.6" fill="#1ebdf0"/><rect x="423" y="725.5" width="3" height="1.6" fill="#10107a"/><rect x="423" y="728.8" width="3" height="1.6" fill="#10107a"/><rect x="422" y="732.1" width="3" height="1.6" fill="#2ac0f0"/><rect x="423" y="732.1" width="3" height="1.6" fill="#14a8e0"/><rect x="423" y="735.4" width="3" height="1.6" fill="#2ac0f0"/><rect x="424" y="735.4" width="3" height="1.6" fill="#18b0e8"/><rect x="423" y="735.4" width="3" height="1.6" fill="#2ac0f0"/><rect x="420" y="738.8" width="3" height="1.6" fill="#1ebdf0"/><rect x="423" y="738.8" width="3" height="1.6" fill="#18b0e8"/><rect x="422" y="738.8" width="3" height="1.6" fill="#2ac0f0"/><rect x="419" y="718" width="4" height="2" fill="#f0a030"/><rect x="419" y="721" width="4" height="2" fill="#e89028"/>
<rect x="77.5" y="640.5" width="395" height="103.5" fill="none" stroke="#000" stroke-width="1"/>
<line x1="77.5" y1="737.5" x2="472.5" y2="737.5" stroke="#000" stroke-width="1"/>
<line x1="119.5" y1="640.5" x2="119.5" y2="744" stroke="#000" stroke-width="1"/>
<clipPath id="cl1x"><rect x="77" y="744" width="400" height="40"/></clipPath>
<line x1="80.4" y1="744" x2="80.4" y2="754" stroke="#000" stroke-width="1"/>
<line x1="91.58000000000001" y1="744" x2="91.58000000000001" y2="749" stroke="#000" stroke-width="1"/>
<line x1="102.76" y1="744" x2="102.76" y2="749" stroke="#000" stroke-width="1"/>
<line x1="113.94" y1="744" x2="113.94" y2="749" stroke="#000" stroke-width="1"/>
<line x1="125.12" y1="744" x2="125.12" y2="749" stroke="#000" stroke-width="1"/>
<line x1="136.3" y1="744" x2="136.3" y2="754" stroke="#000" stroke-width="1"/>
<line x1="147.48000000000002" y1="744" x2="147.48000000000002" y2="749" stroke="#000" stroke-width="1"/>
<line x1="158.66" y1="744" x2="158.66" y2="749" stroke="#000" stroke-width="1"/>
<line x1="169.84" y1="744" x2="169.84" y2="749" stroke="#000" stroke-width="1"/>
<line x1="181.02" y1="744" x2="181.02" y2="749" stroke="#000" stroke-width="1"/>
<line x1="192.2" y1="744" x2="192.2" y2="754" stroke="#000" stroke-width="1"/>
<line x1="203.38" y1="744" x2="203.38" y2="749" stroke="#000" stroke-width="1"/>
<line x1="214.56" y1="744" x2="214.56" y2="749" stroke="#000" stroke-width="1"/>
<line x1="225.74" y1="744" x2="225.74" y2="749" stroke="#000" stroke-width="1"/>
<line x1="236.92" y1="744" x2="236.92" y2="749" stroke="#000" stroke-width="1"/>
<line x1="248.1" y1="744" x2="248.1" y2="754" stroke="#000" stroke-width="1"/>
<line x1="259.28" y1="744" x2="259.28" y2="749" stroke="#000" stroke-width="1"/>
<line x1="270.46000000000004" y1="744" x2="270.46000000000004" y2="749" stroke="#000" stroke-width="1"/>
<line x1="281.64" y1="744" x2="281.64" y2="749" stroke="#000" stroke-width="1"/>
<line x1="292.82" y1="744" x2="292.82" y2="749" stroke="#000" stroke-width="1"/>
<line x1="304.0" y1="744" x2="304.0" y2="754" stroke="#000" stroke-width="1"/>
<line x1="315.18" y1="744" x2="315.18" y2="749" stroke="#000" stroke-width="1"/>
<line x1="326.36" y1="744" x2="326.36" y2="749" stroke="#000" stroke-width="1"/>
<line x1="337.53999999999996" y1="744" x2="337.53999999999996" y2="749" stroke="#000" stroke-width="1"/>
<line x1="348.72" y1="744" x2="348.72" y2="749" stroke="#000" stroke-width="1"/>
<line x1="359.9" y1="744" x2="359.9" y2="754" stroke="#000" stroke-width="1"/>
<line x1="371.08000000000004" y1="744" x2="371.08000000000004" y2="749" stroke="#000" stroke-width="1"/>
<line x1="382.26" y1="744" x2="382.26" y2="749" stroke="#000" stroke-width="1"/>
<line x1="393.43999999999994" y1="744" x2="393.43999999999994" y2="749" stroke="#000" stroke-width="1"/>
<line x1="404.62" y1="744" x2="404.62" y2="749" stroke="#000" stroke-width="1"/>
<line x1="415.79999999999995" y1="744" x2="415.79999999999995" y2="754" stroke="#000" stroke-width="1"/>
<line x1="426.98" y1="744" x2="426.98" y2="749" stroke="#000" stroke-width="1"/>
<line x1="438.15999999999997" y1="744" x2="438.15999999999997" y2="749" stroke="#000" stroke-width="1"/>
<line x1="449.34000000000003" y1="744" x2="449.34000000000003" y2="749" stroke="#000" stroke-width="1"/>
<line x1="460.52" y1="744" x2="460.52" y2="749" stroke="#000" stroke-width="1"/>
<g clip-path="url(#cl1x)">
<text x="80.4" y="765.6" font-size="12" fill="#000" text-anchor="middle">0.600</text>
<text x="136.3" y="765.6" font-size="12" fill="#000" text-anchor="middle">0.700</text>
<text x="192.2" y="765.6" font-size="12" fill="#000" text-anchor="middle">0.800</text>
<text x="248.1" y="765.6" font-size="12" fill="#000" text-anchor="middle">0.900</text>
<text x="304.0" y="765.6" font-size="12" fill="#000" text-anchor="middle">1.000</text>
<text x="359.9" y="765.6" font-size="12" fill="#000" text-anchor="middle">1.100</text>
<text x="415.8" y="765.6" font-size="12" fill="#000" text-anchor="middle">1.200</text>
</g>
<text x="275.0" y="785.5" font-size="12" fill="#000" text-anchor="middle">LabNTKon</text>
<text x="19.0" y="770.0" font-size="12" fill="#000">0.669</text>
<text x="19.0" y="784.0" font-size="12" fill="#e9b0ee">0.15</text>
<clipPath id="cl2"><rect x="0" y="810.5" width="482" height="200"/></clipPath>
<g clip-path="url(#cl2)">
<text x="62.0" y="817.9" font-size="12" fill="#e9b0ee" text-anchor="end">0.00</text>
<text x="62.0" y="853.6" font-size="12" fill="#e9b0ee" text-anchor="end">-1.00</text>
<text x="62.0" y="889.3" font-size="12" fill="#e9b0ee" text-anchor="end">-2.00</text>
<text x="62.0" y="925.0" font-size="12" fill="#e9b0ee" text-anchor="end">-3.00</text>
</g>
<text x="0" y="0" font-size="12" fill="#e9b0ee" text-anchor="middle" transform="translate(21.3,867.4) rotate(-90)" textLength="82.7" lengthAdjust="spacingAndGlyphs">LambdaLabError</text>
<line x1="69" y1="813.9" x2="77.5" y2="813.9" stroke="#000" stroke-width="1"/>
<line x1="69" y1="849.6" x2="77.5" y2="849.6" stroke="#000" stroke-width="1"/>
<line x1="69" y1="885.3" x2="77.5" y2="885.3" stroke="#000" stroke-width="1"/>
<line x1="69" y1="921.0" x2="77.5" y2="921.0" stroke="#000" stroke-width="1"/>
<line x1="73.5" y1="821.04" x2="77.5" y2="821.04" stroke="#000" stroke-width="1"/>
<line x1="73.5" y1="828.18" x2="77.5" y2="828.18" stroke="#000" stroke-width="1"/>
<line x1="73.5" y1="835.3199999999999" x2="77.5" y2="835.3199999999999" stroke="#000" stroke-width="1"/>
<line x1="73.5" y1="842.46" x2="77.5" y2="842.46" stroke="#000" stroke-width="1"/>
<line x1="73.5" y1="856.74" x2="77.5" y2="856.74" stroke="#000" stroke-width="1"/>
<line x1="73.5" y1="863.88" x2="77.5" y2="863.88" stroke="#000" stroke-width="1"/>
<line x1="73.5" y1="871.02" x2="77.5" y2="871.02" stroke="#000" stroke-width="1"/>
<line x1="73.5" y1="878.16" x2="77.5" y2="878.16" stroke="#000" stroke-width="1"/>
<line x1="73.5" y1="892.44" x2="77.5" y2="892.44" stroke="#000" stroke-width="1"/>
<line x1="73.5" y1="899.5799999999999" x2="77.5" y2="899.5799999999999" stroke="#000" stroke-width="1"/>
<line x1="73.5" y1="906.72" x2="77.5" y2="906.72" stroke="#000" stroke-width="1"/>
<line x1="73.5" y1="913.86" x2="77.5" y2="913.86" stroke="#000" stroke-width="1"/>
<rect x="97" y="816.8" width="3" height="1.6" fill="#18b0e8"/><rect x="102" y="823.4" width="3" height="1.6" fill="#2ac0f0"/><rect x="100" y="823.4" width="3" height="1.6" fill="#14a8e0"/><rect x="101" y="826.8" width="3" height="1.6" fill="#1ebdf0"/><rect x="104" y="826.8" width="3" height="1.6" fill="#1ebdf0"/><rect x="103" y="830.1" width="3" height="1.6" fill="#14a8e0"/><rect x="103" y="830.1" width="3" height="1.6" fill="#2ac0f0"/><rect x="118" y="816.8" width="3" height="1.6" fill="#14a8e0"/><rect x="117" y="820.1" width="3" height="1.6" fill="#2ac0f0"/><rect x="118" y="826.8" width="3" height="1.6" fill="#14a8e0"/><rect x="140" y="820.1" width="3" height="1.6" fill="#1ebdf0"/><rect x="140" y="820.1" width="3" height="1.6" fill="#18b0e8"/><rect x="138" y="823.4" width="3" height="1.6" fill="#1ebdf0"/><rect x="142" y="830.1" width="3" height="1.6" fill="#14a8e0"/><rect x="140" y="830.1" width="3" height="1.6" fill="#2ac0f0"/><rect x="141" y="833.4" width="3" height="1.6" fill="#2ac0f0"/><rect x="145" y="833.4" width="3" height="1.6" fill="#2ac0f0"/><rect x="157" y="816.8" width="3" height="1.6" fill="#18b0e8"/><rect x="156" y="816.8" width="3" height="1.6" fill="#18b0e8"/><rect x="155" y="816.8" width="3" height="1.6" fill="#18b0e8"/><rect x="154" y="820.1" width="3" height="1.6" fill="#1ebdf0"/><rect x="155" y="820.1" width="3" height="1.6" fill="#0a48c0"/><rect x="158" y="823.4" width="3" height="1.6" fill="#1060d8"/><rect x="156" y="826.8" width="3" height="1.6" fill="#1ebdf0"/><rect x="157" y="826.8" width="3" height="1.6" fill="#18b0e8"/><rect x="156" y="826.8" width="3" height="1.6" fill="#18b0e8"/><rect x="160" y="830.1" width="3" height="1.6" fill="#2ac0f0"/><rect x="158" y="830.1" width="3" height="1.6" fill="#1ebdf0"/><rect x="160" y="830.1" width="3" height="1.6" fill="#1ebdf0"/><rect x="161" y="833.4" width="3" height="1.6" fill="#14a8e0"/><rect x="160" y="833.4" width="3" height="1.6" fill="#1ebdf0"/><rect x="161" y="836.8" width="3" height="1.6" fill="#2ac0f0"/><rect x="159" y="836.8" width="3" height="1.6" fill="#2ac0f0"/><rect x="158" y="836.8" width="3" height="1.6" fill="#1ebdf0"/><rect x="183" y="816.8" width="3" height="1.6" fill="#1ebdf0"/><rect x="182" y="823.4" width="3" height="1.6" fill="#1ebdf0"/><rect x="199" y="816.8" width="3" height="1.6" fill="#1ebdf0"/><rect x="201" y="823.4" width="3" height="1.6" fill="#1ebdf0"/><rect x="200" y="826.8" width="3" height="1.6" fill="#14a8e0"/><rect x="282" y="816.8" width="3" height="1.6" fill="#1ebdf0"/><rect x="283" y="820.1" width="3" height="1.6" fill="#18b0e8"/><rect x="97" y="817" width="11" height="2" fill="#0a1a9a"/><rect x="137" y="817" width="6" height="2" fill="#0a1a9a"/><rect x="155" y="817" width="5" height="2" fill="#600010"/><rect x="155" y="823" width="5" height="2" fill="#f0a030"/><rect x="155" y="830" width="5" height="2" fill="#0a1a9a"/><rect x="155" y="827" width="5" height="2" fill="#a01010"/><rect x="198" y="817" width="4" height="2" fill="#0a1a9a"/><rect x="282" y="856" width="3" height="2" fill="#1ebdf0"/>
<rect x="77.5" y="811.5" width="395" height="110.5" fill="none" stroke="#000" stroke-width="1"/>
<line x1="77.5" y1="813.5" x2="472.5" y2="813.5" stroke="#000" stroke-width="1"/>
<line x1="119.5" y1="811.5" x2="119.5" y2="922" stroke="#000" stroke-width="1"/>
<clipPath id="cl2x"><rect x="77" y="922" width="400" height="40"/></clipPath>
<line x1="80.4" y1="922" x2="80.4" y2="932" stroke="#000" stroke-width="1"/>
<line x1="91.58000000000001" y1="922" x2="91.58000000000001" y2="927" stroke="#000" stroke-width="1"/>
<line x1="102.76" y1="922" x2="102.76" y2="927" stroke="#000" stroke-width="1"/>
<line x1="113.94" y1="922" x2="113.94" y2="927" stroke="#000" stroke-width="1"/>
<line x1="125.12" y1="922" x2="125.12" y2="927" stroke="#000" stroke-width="1"/>
<line x1="136.3" y1="922" x2="136.3" y2="932" stroke="#000" stroke-width="1"/>
<line x1="147.48000000000002" y1="922" x2="147.48000000000002" y2="927" stroke="#000" stroke-width="1"/>
<line x1="158.66" y1="922" x2="158.66" y2="927" stroke="#000" stroke-width="1"/>
<line x1="169.84" y1="922" x2="169.84" y2="927" stroke="#000" stroke-width="1"/>
<line x1="181.02" y1="922" x2="181.02" y2="927" stroke="#000" stroke-width="1"/>
<line x1="192.2" y1="922" x2="192.2" y2="932" stroke="#000" stroke-width="1"/>
<line x1="203.38" y1="922" x2="203.38" y2="927" stroke="#000" stroke-width="1"/>
<line x1="214.56" y1="922" x2="214.56" y2="927" stroke="#000" stroke-width="1"/>
<line x1="225.74" y1="922" x2="225.74" y2="927" stroke="#000" stroke-width="1"/>
<line x1="236.92" y1="922" x2="236.92" y2="927" stroke="#000" stroke-width="1"/>
<line x1="248.1" y1="922" x2="248.1" y2="932" stroke="#000" stroke-width="1"/>
<line x1="259.28" y1="922" x2="259.28" y2="927" stroke="#000" stroke-width="1"/>
<line x1="270.46000000000004" y1="922" x2="270.46000000000004" y2="927" stroke="#000" stroke-width="1"/>
<line x1="281.64" y1="922" x2="281.64" y2="927" stroke="#000" stroke-width="1"/>
<line x1="292.82" y1="922" x2="292.82" y2="927" stroke="#000" stroke-width="1"/>
<line x1="304.0" y1="922" x2="304.0" y2="932" stroke="#000" stroke-width="1"/>
<line x1="315.18" y1="922" x2="315.18" y2="927" stroke="#000" stroke-width="1"/>
<line x1="326.36" y1="922" x2="326.36" y2="927" stroke="#000" stroke-width="1"/>
<line x1="337.53999999999996" y1="922" x2="337.53999999999996" y2="927" stroke="#000" stroke-width="1"/>
<line x1="348.72" y1="922" x2="348.72" y2="927" stroke="#000" stroke-width="1"/>
<line x1="359.9" y1="922" x2="359.9" y2="932" stroke="#000" stroke-width="1"/>
<line x1="371.08000000000004" y1="922" x2="371.08000000000004" y2="927" stroke="#000" stroke-width="1"/>
<line x1="382.26" y1="922" x2="382.26" y2="927" stroke="#000" stroke-width="1"/>
<line x1="393.43999999999994" y1="922" x2="393.43999999999994" y2="927" stroke="#000" stroke-width="1"/>
<line x1="404.62" y1="922" x2="404.62" y2="927" stroke="#000" stroke-width="1"/>
<line x1="415.79999999999995" y1="922" x2="415.79999999999995" y2="932" stroke="#000" stroke-width="1"/>
<line x1="426.98" y1="922" x2="426.98" y2="927" stroke="#000" stroke-width="1"/>
<line x1="438.15999999999997" y1="922" x2="438.15999999999997" y2="927" stroke="#000" stroke-width="1"/>
<line x1="449.34000000000003" y1="922" x2="449.34000000000003" y2="927" stroke="#000" stroke-width="1"/>
<line x1="460.52" y1="922" x2="460.52" y2="927" stroke="#000" stroke-width="1"/>
<g clip-path="url(#cl2x)">
<text x="80.4" y="944.0" font-size="12" fill="#000" text-anchor="middle">0.600</text>
<text x="136.3" y="944.0" font-size="12" fill="#000" text-anchor="middle">0.700</text>
<text x="192.2" y="944.0" font-size="12" fill="#000" text-anchor="middle">0.800</text>
<text x="248.1" y="944.0" font-size="12" fill="#000" text-anchor="middle">0.900</text>
<text x="304.0" y="944.0" font-size="12" fill="#000" text-anchor="middle">1.000</text>
<text x="359.9" y="944.0" font-size="12" fill="#000" text-anchor="middle">1.100</text>
<text x="415.8" y="944.0" font-size="12" fill="#000" text-anchor="middle">1.200</text>
</g>
<text x="275.0" y="963.6" font-size="12" fill="#000" text-anchor="middle">LabNTKon</text>
<text x="19.0" y="949.0" font-size="12" fill="#000">0.669</text>
<text x="19.0" y="962.0" font-size="12" fill="#e9b0ee">0.15</text>
<line x1="547" y1="667.5" x2="555" y2="667.5" stroke="#b8b8b8" stroke-width="1"/>
<text x="540.0" y="671.8" font-size="12" fill="#1c2c8c" text-anchor="end">0.600</text>
<line x1="552" y1="662.5" x2="555" y2="662.5" stroke="#c8c8c8" stroke-width="1"/>
<line x1="552" y1="657.5" x2="555" y2="657.5" stroke="#c8c8c8" stroke-width="1"/>
<line x1="552" y1="652.5" x2="555" y2="652.5" stroke="#c8c8c8" stroke-width="1"/>
<line x1="552" y1="647.5" x2="555" y2="647.5" stroke="#c8c8c8" stroke-width="1"/>
<line x1="547" y1="642.5" x2="555" y2="642.5" stroke="#b8b8b8" stroke-width="1"/>
<text x="540.0" y="646.8" font-size="12" fill="#1c2c8c" text-anchor="end">0.625</text>
<line x1="552" y1="637.5" x2="555" y2="637.5" stroke="#c8c8c8" stroke-width="1"/>
<line x1="552" y1="632.5" x2="555" y2="632.5" stroke="#c8c8c8" stroke-width="1"/>
<line x1="552" y1="627.5" x2="555" y2="627.5" stroke="#c8c8c8" stroke-width="1"/>
<line x1="552" y1="622.5" x2="555" y2="622.5" stroke="#c8c8c8" stroke-width="1"/>
<line x1="547" y1="617.5" x2="555" y2="617.5" stroke="#b8b8b8" stroke-width="1"/>
<text x="540.0" y="621.8" font-size="12" fill="#1c2c8c" text-anchor="end">0.650</text>
<line x1="552" y1="612.5" x2="555" y2="612.5" stroke="#c8c8c8" stroke-width="1"/>
<line x1="552" y1="607.5" x2="555" y2="607.5" stroke="#c8c8c8" stroke-width="1"/>
<line x1="552" y1="602.5" x2="555" y2="602.5" stroke="#c8c8c8" stroke-width="1"/>
<line x1="552" y1="596.5" x2="555" y2="596.5" stroke="#c8c8c8" stroke-width="1"/>
<line x1="547" y1="591.5" x2="555" y2="591.5" stroke="#b8b8b8" stroke-width="1"/>
<text x="540.0" y="595.8" font-size="12" fill="#1c2c8c" text-anchor="end">0.675</text>
<line x1="552" y1="586.5" x2="555" y2="586.5" stroke="#c8c8c8" stroke-width="1"/>
<line x1="552" y1="581.5" x2="555" y2="581.5" stroke="#c8c8c8" stroke-width="1"/>
<line x1="552" y1="576.5" x2="555" y2="576.5" stroke="#c8c8c8" stroke-width="1"/>
<line x1="552" y1="571.5" x2="555" y2="571.5" stroke="#c8c8c8" stroke-width="1"/>
<line x1="547" y1="566.5" x2="555" y2="566.5" stroke="#b8b8b8" stroke-width="1"/>
<text x="540.0" y="570.8" font-size="12" fill="#1c2c8c" text-anchor="end">0.700</text>
<line x1="552" y1="561.5" x2="555" y2="561.5" stroke="#c8c8c8" stroke-width="1"/>
<line x1="552" y1="556.5" x2="555" y2="556.5" stroke="#c8c8c8" stroke-width="1"/>
<line x1="552" y1="551.5" x2="555" y2="551.5" stroke="#c8c8c8" stroke-width="1"/>
<line x1="552" y1="546.5" x2="555" y2="546.5" stroke="#c8c8c8" stroke-width="1"/>
<line x1="547" y1="541.5" x2="555" y2="541.5" stroke="#b8b8b8" stroke-width="1"/>
<text x="540.0" y="545.8" font-size="12" fill="#1c2c8c" text-anchor="end">0.725</text>
<line x1="552" y1="536.5" x2="555" y2="536.5" stroke="#c8c8c8" stroke-width="1"/>
<line x1="552" y1="531.5" x2="555" y2="531.5" stroke="#c8c8c8" stroke-width="1"/>
<line x1="552" y1="526.5" x2="555" y2="526.5" stroke="#c8c8c8" stroke-width="1"/>
<line x1="552" y1="520.5" x2="555" y2="520.5" stroke="#c8c8c8" stroke-width="1"/>
<line x1="547" y1="515.5" x2="555" y2="515.5" stroke="#b8b8b8" stroke-width="1"/>
<text x="540.0" y="519.8" font-size="12" fill="#1c2c8c" text-anchor="end">0.750</text>
<line x1="552" y1="510.5" x2="555" y2="510.5" stroke="#c8c8c8" stroke-width="1"/>
<line x1="552" y1="505.5" x2="555" y2="505.5" stroke="#c8c8c8" stroke-width="1"/>
<line x1="552" y1="500.5" x2="555" y2="500.5" stroke="#c8c8c8" stroke-width="1"/>
<line x1="552" y1="495.5" x2="555" y2="495.5" stroke="#c8c8c8" stroke-width="1"/>
<line x1="547" y1="490.5" x2="555" y2="490.5" stroke="#b8b8b8" stroke-width="1"/>
<text x="540.0" y="494.8" font-size="12" fill="#1c2c8c" text-anchor="end">0.775</text>
<line x1="552" y1="485.5" x2="555" y2="485.5" stroke="#c8c8c8" stroke-width="1"/>
<line x1="552" y1="480.5" x2="555" y2="480.5" stroke="#c8c8c8" stroke-width="1"/>
<line x1="552" y1="475.5" x2="555" y2="475.5" stroke="#c8c8c8" stroke-width="1"/>
<line x1="552" y1="470.5" x2="555" y2="470.5" stroke="#c8c8c8" stroke-width="1"/>
<line x1="547" y1="465.5" x2="555" y2="465.5" stroke="#b8b8b8" stroke-width="1"/>
<text x="540.0" y="469.8" font-size="12" fill="#1c2c8c" text-anchor="end">0.800</text>
<line x1="552" y1="460.5" x2="555" y2="460.5" stroke="#c8c8c8" stroke-width="1"/>
<line x1="552" y1="455.5" x2="555" y2="455.5" stroke="#c8c8c8" stroke-width="1"/>
<line x1="552" y1="450.5" x2="555" y2="450.5" stroke="#c8c8c8" stroke-width="1"/>
<line x1="552" y1="444.5" x2="555" y2="444.5" stroke="#c8c8c8" stroke-width="1"/>
<line x1="547" y1="439.5" x2="555" y2="439.5" stroke="#b8b8b8" stroke-width="1"/>
<text x="540.0" y="443.8" font-size="12" fill="#1c2c8c" text-anchor="end">0.825</text>
<line x1="552" y1="434.5" x2="555" y2="434.5" stroke="#c8c8c8" stroke-width="1"/>
<line x1="552" y1="429.5" x2="555" y2="429.5" stroke="#c8c8c8" stroke-width="1"/>
<line x1="552" y1="424.5" x2="555" y2="424.5" stroke="#c8c8c8" stroke-width="1"/>
<line x1="552" y1="419.5" x2="555" y2="419.5" stroke="#c8c8c8" stroke-width="1"/>
<line x1="547" y1="414.5" x2="555" y2="414.5" stroke="#b8b8b8" stroke-width="1"/>
<text x="540.0" y="418.8" font-size="12" fill="#1c2c8c" text-anchor="end">0.850</text>
<line x1="552" y1="409.5" x2="555" y2="409.5" stroke="#c8c8c8" stroke-width="1"/>
<line x1="552" y1="404.5" x2="555" y2="404.5" stroke="#c8c8c8" stroke-width="1"/>
<line x1="552" y1="399.5" x2="555" y2="399.5" stroke="#c8c8c8" stroke-width="1"/>
<line x1="552" y1="394.5" x2="555" y2="394.5" stroke="#c8c8c8" stroke-width="1"/>
<line x1="547" y1="389.5" x2="555" y2="389.5" stroke="#b8b8b8" stroke-width="1"/>
<text x="540.0" y="393.8" font-size="12" fill="#1c2c8c" text-anchor="end">0.875</text>
<line x1="552" y1="384.5" x2="555" y2="384.5" stroke="#c8c8c8" stroke-width="1"/>
<line x1="552" y1="379.5" x2="555" y2="379.5" stroke="#c8c8c8" stroke-width="1"/>
<line x1="552" y1="374.5" x2="555" y2="374.5" stroke="#c8c8c8" stroke-width="1"/>
<line x1="552" y1="368.5" x2="555" y2="368.5" stroke="#c8c8c8" stroke-width="1"/>
<line x1="547" y1="363.5" x2="555" y2="363.5" stroke="#b8b8b8" stroke-width="1"/>
<text x="540.0" y="367.8" font-size="12" fill="#1c2c8c" text-anchor="end">0.900</text>
<line x1="552" y1="358.5" x2="555" y2="358.5" stroke="#c8c8c8" stroke-width="1"/>
<line x1="552" y1="353.5" x2="555" y2="353.5" stroke="#c8c8c8" stroke-width="1"/>
<line x1="552" y1="348.5" x2="555" y2="348.5" stroke="#c8c8c8" stroke-width="1"/>
<line x1="552" y1="343.5" x2="555" y2="343.5" stroke="#c8c8c8" stroke-width="1"/>
<line x1="547" y1="338.5" x2="555" y2="338.5" stroke="#b8b8b8" stroke-width="1"/>
<text x="540.0" y="342.8" font-size="12" fill="#1c2c8c" text-anchor="end">0.925</text>
<line x1="552" y1="333.5" x2="555" y2="333.5" stroke="#c8c8c8" stroke-width="1"/>
<line x1="552" y1="328.5" x2="555" y2="328.5" stroke="#c8c8c8" stroke-width="1"/>
<line x1="552" y1="323.5" x2="555" y2="323.5" stroke="#c8c8c8" stroke-width="1"/>
<line x1="552" y1="318.5" x2="555" y2="318.5" stroke="#c8c8c8" stroke-width="1"/>
<line x1="547" y1="313.5" x2="555" y2="313.5" stroke="#b8b8b8" stroke-width="1"/>
<text x="540.0" y="317.8" font-size="12" fill="#1c2c8c" text-anchor="end">0.950</text>
<line x1="552" y1="308.5" x2="555" y2="308.5" stroke="#c8c8c8" stroke-width="1"/>
<line x1="552" y1="303.5" x2="555" y2="303.5" stroke="#c8c8c8" stroke-width="1"/>
<line x1="552" y1="298.5" x2="555" y2="298.5" stroke="#c8c8c8" stroke-width="1"/>
<line x1="552" y1="292.5" x2="555" y2="292.5" stroke="#c8c8c8" stroke-width="1"/>
<line x1="547" y1="287.5" x2="555" y2="287.5" stroke="#b8b8b8" stroke-width="1"/>
<text x="540.0" y="291.8" font-size="12" fill="#1c2c8c" text-anchor="end">0.975</text>
<line x1="552" y1="282.5" x2="555" y2="282.5" stroke="#c8c8c8" stroke-width="1"/>
<line x1="552" y1="277.5" x2="555" y2="277.5" stroke="#c8c8c8" stroke-width="1"/>
<line x1="552" y1="272.5" x2="555" y2="272.5" stroke="#c8c8c8" stroke-width="1"/>
<line x1="552" y1="267.5" x2="555" y2="267.5" stroke="#c8c8c8" stroke-width="1"/>
<line x1="547" y1="262.5" x2="555" y2="262.5" stroke="#b8b8b8" stroke-width="1"/>
<text x="540.0" y="266.8" font-size="12" fill="#1c2c8c" text-anchor="end">1.000</text>
<line x1="552" y1="257.5" x2="555" y2="257.5" stroke="#c8c8c8" stroke-width="1"/>
<line x1="552" y1="252.5" x2="555" y2="252.5" stroke="#c8c8c8" stroke-width="1"/>
<line x1="552" y1="247.5" x2="555" y2="247.5" stroke="#c8c8c8" stroke-width="1"/>
<line x1="552" y1="242.5" x2="555" y2="242.5" stroke="#c8c8c8" stroke-width="1"/>
<line x1="547" y1="237.5" x2="555" y2="237.5" stroke="#b8b8b8" stroke-width="1"/>
<text x="540.0" y="241.8" font-size="12" fill="#1c2c8c" text-anchor="end">1.025</text>
<line x1="552" y1="232.5" x2="555" y2="232.5" stroke="#c8c8c8" stroke-width="1"/>
<line x1="552" y1="227.5" x2="555" y2="227.5" stroke="#c8c8c8" stroke-width="1"/>
<line x1="552" y1="222.5" x2="555" y2="222.5" stroke="#c8c8c8" stroke-width="1"/>
<line x1="552" y1="216.5" x2="555" y2="216.5" stroke="#c8c8c8" stroke-width="1"/>
<line x1="547" y1="211.5" x2="555" y2="211.5" stroke="#b8b8b8" stroke-width="1"/>
<text x="540.0" y="215.8" font-size="12" fill="#1c2c8c" text-anchor="end">1.050</text>
<line x1="552" y1="206.5" x2="555" y2="206.5" stroke="#c8c8c8" stroke-width="1"/>
<line x1="552" y1="201.5" x2="555" y2="201.5" stroke="#c8c8c8" stroke-width="1"/>
<line x1="552" y1="196.5" x2="555" y2="196.5" stroke="#c8c8c8" stroke-width="1"/>
<line x1="552" y1="191.5" x2="555" y2="191.5" stroke="#c8c8c8" stroke-width="1"/>
<line x1="547" y1="186.5" x2="555" y2="186.5" stroke="#b8b8b8" stroke-width="1"/>
<text x="540.0" y="190.8" font-size="12" fill="#1c2c8c" text-anchor="end">1.075</text>
<line x1="552" y1="181.5" x2="555" y2="181.5" stroke="#c8c8c8" stroke-width="1"/>
<line x1="552" y1="176.5" x2="555" y2="176.5" stroke="#c8c8c8" stroke-width="1"/>
<line x1="552" y1="171.5" x2="555" y2="171.5" stroke="#c8c8c8" stroke-width="1"/>
<line x1="552" y1="166.5" x2="555" y2="166.5" stroke="#c8c8c8" stroke-width="1"/>
<line x1="547" y1="161.5" x2="555" y2="161.5" stroke="#b8b8b8" stroke-width="1"/>
<text x="540.0" y="165.8" font-size="12" fill="#1c2c8c" text-anchor="end">1.100</text>
<line x1="552" y1="156.5" x2="555" y2="156.5" stroke="#c8c8c8" stroke-width="1"/>
<line x1="552" y1="151.5" x2="555" y2="151.5" stroke="#c8c8c8" stroke-width="1"/>
<line x1="552" y1="146.5" x2="555" y2="146.5" stroke="#c8c8c8" stroke-width="1"/>
<line x1="552" y1="140.5" x2="555" y2="140.5" stroke="#c8c8c8" stroke-width="1"/>
<line x1="547" y1="135.5" x2="555" y2="135.5" stroke="#b8b8b8" stroke-width="1"/>
<text x="540.0" y="139.8" font-size="12" fill="#1c2c8c" text-anchor="end">1.125</text>
<line x1="552" y1="130.5" x2="555" y2="130.5" stroke="#c8c8c8" stroke-width="1"/>
<line x1="552" y1="125.5" x2="555" y2="125.5" stroke="#c8c8c8" stroke-width="1"/>
<line x1="552" y1="120.5" x2="555" y2="120.5" stroke="#c8c8c8" stroke-width="1"/>
<line x1="552" y1="115.5" x2="555" y2="115.5" stroke="#c8c8c8" stroke-width="1"/>
<line x1="547" y1="110.5" x2="555" y2="110.5" stroke="#b8b8b8" stroke-width="1"/>
<text x="540.0" y="114.8" font-size="12" fill="#1c2c8c" text-anchor="end">1.150</text>
<line x1="552" y1="105.5" x2="555" y2="105.5" stroke="#c8c8c8" stroke-width="1"/>
<line x1="552" y1="100.5" x2="555" y2="100.5" stroke="#c8c8c8" stroke-width="1"/>
<line x1="552" y1="95.5" x2="555" y2="95.5" stroke="#c8c8c8" stroke-width="1"/>
<line x1="552" y1="90.5" x2="555" y2="90.5" stroke="#c8c8c8" stroke-width="1"/>
<line x1="547" y1="85.5" x2="555" y2="85.5" stroke="#b8b8b8" stroke-width="1"/>
<text x="540.0" y="89.8" font-size="12" fill="#1c2c8c" text-anchor="end">1.175</text>
<line x1="552" y1="80.5" x2="555" y2="80.5" stroke="#c8c8c8" stroke-width="1"/>
<line x1="552" y1="75.5" x2="555" y2="75.5" stroke="#c8c8c8" stroke-width="1"/>
<line x1="552" y1="70.5" x2="555" y2="70.5" stroke="#c8c8c8" stroke-width="1"/>
<line x1="552" y1="64.5" x2="555" y2="64.5" stroke="#c8c8c8" stroke-width="1"/>
<line x1="547" y1="59.5" x2="555" y2="59.5" stroke="#b8b8b8" stroke-width="1"/>
<text x="540.0" y="63.8" font-size="12" fill="#1c2c8c" text-anchor="end">1.200</text>
<text x="0" y="0" font-size="12" fill="#1c2c8c" text-anchor="middle" transform="translate(499.3,363.5) rotate(-90)">lam1 (λ)</text>
<rect x="555.5" y="57.5" width="1126.0" height="611.5" fill="none" stroke="#c4c4c4" stroke-width="1"/>
<clipPath id="cpU"><rect x="556" y="58" width="1125" height="611"/></clipPath>
<g clip-path="url(#cpU)">
<polyline points="556.0,634.2 556.5,635.4 557.0,633.6 557.5,635.5 558.0,634.6 558.5,634.8 559.0,636.9 559.5,635.5 560.0,635.5 560.5,636.4 561.0,637.0 561.5,636.1 562.0,636.9 562.5,635.6 563.0,636.4 563.5,636.5 564.0,635.9 564.5,635.9 565.0,636.0 565.5,637.4 566.0,637.7 566.5,637.7 567.0,638.3 567.5,637.2 568.0,638.5 568.5,639.0 569.0,639.6 569.5,638.4 570.0,638.9 570.5,637.7 571.0,639.2 571.5,637.9 572.0,638.7 572.5,641.2 573.0,638.4 573.5,641.2 574.0,641.0 574.5,640.6 575.0,641.4 575.5,641.6 576.0,642.3 576.5,641.3 577.0,641.1 577.5,641.3 578.0,641.1 578.5,642.1 579.0,641.7 579.5,643.5 580.0,641.0 580.5,641.9 581.0,642.2 581.5,641.4 582.0,645.1 582.5,641.4 583.0,643.5 583.5,643.5 584.0,645.6 584.5,642.5 585.0,645.5 585.5,644.0 586.0,644.7 586.5,644.4 587.0,645.8 587.5,644.3 588.0,645.4 588.5,646.0 589.0,647.5 589.5,643.8 590.0,647.5 590.5,647.1 591.0,646.0 591.5,646.8 592.0,646.3 592.5,648.3 593.0,647.1 593.5,646.9 594.0,647.0 594.5,647.1 595.0,647.2 595.5,646.7 596.0,649.4 596.5,645.9 597.0,644.5 597.5,647.7 598.0,647.7 598.5,648.2 599.0,647.8 599.5,647.9 600.0,648.3 600.5,648.9 601.0,647.7 601.5,647.8 602.0,649.9 602.5,648.6 603.0,647.3 603.5,650.3 604.0,648.9 604.5,647.7 605.0,647.2 605.5,648.6 606.0,647.6 606.5,647.4 607.0,647.2 607.5,647.9 608.0,649.4 608.5,648.0 609.0,647.1 609.5,649.0 610.0,648.5 610.5,649.2 611.0,649.6 611.5,648.3 612.0,648.4 612.5,648.5 613.0,647.5 613.5,649.2 614.0,649.8 614.5,648.7 615.0,648.4 615.5,648.4 616.0,647.9 616.5,647.9 617.0,648.3 617.5,647.9 617.8,648.3 618.2,647.3 618.7,637.4 619.2,628.1 619.7,625.3 620.2,622.9 620.7,623.9 621.2,623.9 621.7,621.4 622.2,620.9 622.7,620.3 623.2,620.9 623.7,619.1 624.2,620.5 624.7,619.0 625.2,619.9 625.7,618.9 626.2,618.5 626.7,617.2 627.2,617.7 627.7,617.9 628.2,618.6 628.7,618.0 629.2,617.0 629.7,617.9 630.2,618.3 630.7,617.1 631.2,616.7 631.7,616.6 632.2,617.6 632.7,617.2 633.2,615.8 633.7,616.9 634.2,616.0 634.7,615.7 635.2,617.4 635.7,617.0 636.2,615.5 636.7,616.2 637.2,616.5 637.7,615.4 638.2,615.9 638.7,616.5 639.2,614.3 639.7,616.2 640.2,616.6 640.7,616.4 641.2,614.7 641.7,616.2 642.2,615.2 642.7,616.6 643.2,616.7 643.7,616.4 644.2,615.7 644.7,615.9 645.2,617.3 645.7,615.9 646.2,617.3 646.7,617.5 647.2,616.9 647.7,619.5 648.2,617.5 648.7,619.6 649.2,616.0 649.7,616.0 650.2,619.0 650.7,618.9 651.2,618.2 651.7,618.6 652.2,617.1 652.7,618.4 653.2,618.1 653.7,619.0 654.2,620.1 654.7,619.5 655.2,619.9 655.7,619.0 656.2,619.3 656.7,619.9 657.2,619.7 657.7,621.2 658.2,619.3 658.7,621.9 659.2,619.4 659.7,621.4 660.2,619.8 660.7,622.1 661.2,620.8 661.7,621.1 662.2,621.5 662.7,620.4 663.2,620.1 663.7,619.3 664.2,622.3 664.7,620.6 665.2,620.8 665.7,621.4 666.2,623.3 666.7,620.0 667.2,621.9 667.7,621.4 668.2,622.3 668.7,620.3 669.2,621.6 669.7,622.8 670.2,623.6 670.7,623.7 671.2,621.5 671.7,622.4 672.2,622.4 672.7,621.3 673.2,621.3 673.7,623.4 674.2,623.0 674.7,622.7 675.2,624.0 675.7,622.1 676.2,623.6 676.7,623.2 677.2,623.2 677.7,623.8 678.2,623.5 678.7,623.7 679.2,623.8 679.7,625.4 680.2,623.4 680.7,624.7 681.2,624.4 681.7,623.6 682.2,624.7 682.7,623.3 683.2,625.2 683.7,623.6 684.2,623.9 684.7,624.7 685.2,625.3 685.7,625.4 686.2,625.5 686.7,624.6 687.2,624.0 687.7,625.5 688.2,625.3 688.7,624.3 689.2,626.1 689.7,625.5 690.2,624.5 690.7,625.9 691.2,624.4 691.7,624.9 692.2,626.1 692.7,624.4 693.2,626.0 693.7,624.8 694.2,626.8 694.7,625.5 695.2,626.4 695.7,625.0 696.2,626.1 696.7,627.4 697.2,627.0 697.7,625.1 698.2,627.6 698.7,627.7 699.2,626.7 699.7,628.4 700.2,626.2 700.7,627.2 701.2,628.4 701.7,628.6 702.2,628.7 702.7,626.6 703.2,626.1 703.7,628.1 704.2,626.6 704.7,627.9 705.2,626.9 705.7,629.1 706.2,629.0 706.7,628.8 707.2,628.4 707.7,628.5 708.2,628.3 708.7,629.0 709.2,629.0 709.7,629.3 710.2,628.6 710.5,630.7 711.5,629.3 712.0,626.3 712.5,622.0 713.0,615.9 713.5,611.6 714.0,611.5 714.5,608.3 715.0,607.2 715.5,605.5 716.0,604.7 716.5,602.5 717.0,602.6 717.5,601.4 718.0,601.0 718.5,598.0 719.0,600.1 719.5,598.9 720.0,596.3 720.5,596.4 721.0,596.4 721.5,596.3 722.0,595.1 722.5,595.8 723.0,594.1 723.5,592.7 724.0,592.5 724.5,593.5 725.0,591.9 725.5,593.0 726.0,592.9 726.5,592.3 727.0,592.4 727.5,591.1 728.0,591.0 728.5,590.3 729.0,590.1 729.5,589.0 730.0,589.7 730.5,589.0 731.0,588.5 731.5,589.8 732.0,589.9 732.5,589.0 733.0,590.4 733.5,589.9 734.0,589.8 734.5,588.2 735.0,587.3 735.5,589.0 736.0,588.7 736.5,589.0 737.0,588.7 737.5,589.4 738.0,587.9 738.5,588.7 739.0,587.3 739.5,586.0 740.0,587.7 740.5,589.5 741.0,586.6 741.5,589.0 742.0,587.5 742.5,587.8 743.0,588.2 743.5,588.4 744.0,587.4 744.5,588.4 745.0,588.7 745.5,589.1 746.0,587.7 746.5,589.8 747.0,590.2 747.5,590.7 748.0,587.4 748.5,588.8 749.0,587.0 749.5,589.1 750.0,589.3 750.5,587.8 751.0,587.5 751.5,589.1 752.0,589.6 752.5,588.4 753.0,588.9 753.5,587.0 754.0,588.7 754.5,589.5 755.0,589.6 755.5,590.9 756.0,588.5 756.5,587.6 757.0,590.1 757.5,589.2 758.0,590.1 758.5,590.5 759.0,590.5 759.5,591.3 760.0,591.3 760.5,588.7 761.0,590.2 761.5,592.1 762.0,590.0 762.5,591.3 763.0,590.4 763.5,590.2 764.0,592.0 764.5,591.6 765.0,590.5 765.5,591.6 766.0,589.7 766.5,590.3 767.0,591.8 767.5,591.1 768.0,590.2 768.5,591.7 769.0,591.6 769.5,592.6 770.0,592.4 770.5,591.3 771.0,591.2 771.5,591.6 772.0,591.6 772.5,593.2 773.0,593.4 773.5,593.3 774.0,592.5 774.5,592.0 775.0,593.2 775.5,592.1 776.0,592.7 776.5,591.1 777.0,592.3 777.5,594.1 778.0,591.9 778.5,591.6 779.0,592.9 779.5,594.6 780.0,594.5 780.5,593.0 781.0,593.0 781.5,593.4 782.0,592.7 782.5,593.7 783.0,593.5 783.5,592.5 784.0,593.4 784.5,593.8 785.0,593.3 785.5,593.2 786.0,595.1 786.5,596.1 787.0,594.2 787.5,594.2 788.0,595.1 788.5,594.5 789.0,594.1 789.5,596.2 790.0,594.0 790.5,594.4 791.0,594.6 791.5,594.4 792.0,595.1 792.5,595.9 793.0,596.8 793.5,596.1 794.0,595.7 794.5,594.6 795.0,595.7 795.5,595.0 796.0,595.8 796.5,596.9 797.0,596.2 797.5,595.9 798.0,595.5 798.5,596.2 799.0,596.4 799.5,595.6 800.0,596.0 800.5,597.3 801.0,595.1 801.5,596.2 802.0,595.7 802.5,598.2 803.0,597.4 803.5,597.3 804.0,597.3 804.5,597.3 805.0,597.3 805.5,595.7 806.0,597.4 806.5,597.8 807.0,596.0 807.5,598.1 808.0,598.0 808.5,596.1 809.0,597.1 809.5,597.3 809.7,597.1 810.5,598.0 811.0,588.7 811.5,581.4 812.0,574.9 812.5,571.5 813.0,568.6 813.5,566.5 814.0,565.9 814.5,562.2 815.0,563.7 815.5,561.7 816.0,559.9 816.5,559.7 817.0,557.4 817.5,556.3 818.0,557.0 818.5,555.7 819.0,556.2 819.5,554.1 820.0,553.1 820.5,552.9 821.0,554.9 821.5,553.2 822.0,552.5 822.5,552.2 823.0,552.1 823.5,553.0 824.0,553.5 824.5,554.2 825.0,554.2 825.5,553.4 826.0,552.6 826.5,552.4 827.0,551.1 827.5,552.3 828.0,553.6 828.5,553.0 829.0,553.6 829.5,552.1 830.0,554.1 830.5,553.6 831.0,553.4 831.5,553.8 832.0,551.4 832.5,553.0 833.0,552.7 833.5,555.2 834.0,553.4 834.5,553.2 835.0,554.4 835.5,552.7 836.0,555.0 836.5,553.1 837.0,553.8 837.5,553.0 838.0,554.6 838.5,552.0 839.0,554.6 839.5,553.3 840.0,554.1 840.5,553.1 841.0,554.4 841.5,554.4 842.0,554.8 842.5,554.6 843.0,554.9 843.5,555.3 844.0,554.1 844.5,553.5 845.0,553.4 845.5,555.3 846.0,554.4 846.5,555.7 847.0,554.8 847.5,553.9 848.0,555.7 848.5,556.7 849.0,554.9 849.5,554.2 850.0,554.4 850.5,556.0 851.0,554.7 851.5,554.9 852.0,556.0 852.5,555.4 853.0,555.6 853.5,555.0 854.0,555.0 854.5,555.8 855.0,555.8 855.5,556.2 856.0,555.3 856.5,556.1 857.0,556.3 857.5,556.0 858.0,556.5 858.5,556.9 859.0,556.2 859.5,556.2 860.0,555.3 860.5,556.5 861.0,556.2 861.5,556.0 862.0,555.6 862.5,556.9 863.0,558.8 863.5,556.9 864.0,556.7 864.5,557.0 865.0,556.2 865.5,556.8 866.0,556.2 866.5,556.3 867.0,557.1 867.5,557.2 868.0,556.9 868.5,556.4 869.0,557.4 869.5,556.2 870.0,558.0 870.5,557.0 871.0,557.4 871.5,558.2 872.0,558.0 872.5,556.4 873.0,557.4 873.5,558.1 874.0,556.8 874.5,555.7 875.0,557.9 875.5,557.9 876.0,558.4 876.5,558.2 877.0,558.3 877.5,558.5 878.0,559.6 878.5,558.8 879.0,558.9 879.5,558.2 880.0,559.6 880.5,558.5 881.0,559.4 881.5,556.9 882.0,559.1 882.5,558.8 883.0,558.6 883.5,560.2 884.0,559.5 884.5,559.1 885.0,558.8 885.5,561.0 886.0,560.1 886.5,560.1 887.0,558.9 887.5,560.8 888.0,560.2 888.5,559.5 889.0,559.7 889.5,558.4 890.0,560.6 890.5,559.1 891.0,560.9 891.5,559.8 892.0,559.7 892.5,560.6 893.0,560.6 893.5,559.4 894.0,560.5 894.5,561.1 895.0,560.4 895.5,559.5 896.0,560.6 896.5,560.0 897.0,560.4 897.5,561.0 898.0,561.0 898.5,560.9 899.0,559.7 899.5,561.6 900.0,561.2 900.5,561.0 901.0,561.6 901.5,563.3 902.0,560.4 902.5,560.2 903.0,562.4 903.5,561.1 903.6,563.0 904.5,560.9 905.0,557.0 905.5,553.4 906.0,548.5 906.5,543.4 907.0,539.3 907.5,535.4 908.0,533.0 908.5,531.8 909.0,531.7 909.5,529.9 910.0,528.1 910.5,527.2 911.0,526.5 911.5,525.8 912.0,523.7 912.5,522.9 913.0,522.5 913.5,523.9 914.0,521.2 914.5,521.6 915.0,518.7 915.5,520.6 916.0,518.3 916.5,518.5 917.0,518.9 917.5,519.4 918.0,519.7 918.5,519.8 919.0,519.7 919.5,519.1 920.0,521.9 920.5,519.9 921.0,520.2 921.5,521.4 922.0,520.5 922.5,520.1 923.0,519.9 923.5,521.3 924.0,518.7 924.5,518.8 925.0,519.8 925.5,517.9 926.0,519.1 926.5,520.8 927.0,519.4 927.5,520.0 928.0,520.5 928.5,518.9 929.0,520.2 929.5,519.4 930.0,519.0 930.5,519.8 931.0,520.0 931.5,519.7 932.0,519.6 932.5,521.0 933.0,521.3 933.5,520.8 934.0,520.2 934.5,519.4 935.0,519.7 935.5,519.4 936.0,520.7 936.5,521.3 937.0,521.4 937.5,520.6 938.0,520.3 938.5,520.9 939.0,520.9 939.5,521.3 940.0,522.2 940.5,520.3 941.0,522.8 941.5,519.1 942.0,519.5 942.5,519.8 943.0,520.2 943.5,521.0 944.0,523.1 944.5,520.7 945.0,522.4 945.5,521.1 946.0,521.6 946.5,520.6 947.0,523.6 947.5,521.6 948.0,521.2 948.5,523.8 949.0,522.0 949.5,522.2 950.0,521.8 950.5,521.2 951.0,520.8 951.5,521.9 952.0,523.6 952.5,522.6 953.0,522.1 953.5,523.3 954.0,521.5 954.5,523.6 955.0,522.5 955.5,521.8 956.0,523.2 956.5,523.1 957.0,522.4 957.5,522.9 958.0,523.7 958.5,524.1 959.0,522.1 959.5,520.6 960.0,524.8 960.5,522.8 961.0,522.7 961.5,523.5 962.0,522.8 962.5,524.2 963.0,522.2 963.5,523.2 964.0,522.3 964.5,524.9 965.0,523.3 965.5,524.6 966.0,524.9 966.5,522.7 967.0,523.6 967.5,524.5 968.0,524.0 968.5,523.9 969.0,524.8 969.5,524.9 970.0,523.7 970.5,524.1 971.0,524.9 971.5,524.6 972.0,524.6 972.5,523.5 973.0,526.2 973.5,524.4 974.0,525.0 974.5,524.8 975.0,524.9 975.5,525.1 976.0,524.3 976.5,525.4 977.0,526.2 977.5,525.6 978.0,525.9 978.5,525.8 979.0,525.5 979.5,527.1 980.0,525.0 980.5,526.0 981.0,526.7 981.5,526.1 982.0,524.9 982.5,525.0 983.0,527.4 983.5,525.3 984.0,526.2 984.5,526.8 985.0,526.4 985.5,524.8 986.0,524.8 986.5,526.5 987.0,526.0 987.5,526.5 988.0,526.9 988.5,527.0 989.0,525.8 989.5,525.5 990.0,527.9 990.5,526.6 991.0,526.2 991.5,525.6 992.0,527.9 992.5,526.4 993.0,526.6 993.5,528.2 994.0,528.0 994.5,528.3 995.0,526.7 995.5,525.4 996.0,527.1 996.5,527.8 997.0,527.6 997.5,529.0 998.0,528.6 998.5,527.4 999.0,529.0 999.5,528.4 1000.0,528.2 1000.5,529.7 1001.0,527.3 1001.5,529.7 1002.0,529.9 1002.5,527.1 1002.8,528.8 1003.5,528.9 1004.0,519.6 1004.5,511.7 1005.0,506.4 1005.5,505.0 1006.0,502.6 1006.5,499.5 1007.0,501.1 1007.5,499.6 1008.0,497.0 1008.5,497.6 1009.0,497.8 1009.5,493.8 1010.0,494.2 1010.5,493.5 1011.0,493.8 1011.5,492.4 1012.0,490.7 1012.5,492.4 1013.0,490.4 1013.5,490.7 1014.0,491.5 1014.5,488.2 1015.0,488.0 1015.5,488.7 1016.0,487.2 1016.5,487.3 1017.0,486.4 1017.5,488.4 1018.0,486.1 1018.5,485.4 1019.0,484.8 1019.5,484.7 1020.0,482.6 1020.5,483.5 1021.0,484.1 1021.5,482.1 1022.0,482.9 1022.5,482.6 1023.0,482.0 1023.5,484.4 1024.0,482.6 1024.5,482.0 1025.0,480.8 1025.5,481.4 1026.0,480.8 1026.5,480.8 1027.0,480.9 1027.5,482.8 1028.0,481.6 1028.5,481.9 1029.0,481.5 1029.5,482.7 1030.0,479.5 1030.5,478.9 1031.0,480.3 1031.5,480.3 1032.0,480.1 1032.5,479.5 1033.0,480.7 1033.5,481.7 1034.0,480.3 1034.5,479.9 1035.0,481.2 1035.5,479.9 1036.0,479.8 1036.5,480.4 1037.0,478.1 1037.5,481.8 1038.0,480.1 1038.5,480.6 1039.0,480.5 1039.5,480.5 1040.0,479.0 1040.5,481.8 1041.0,480.7 1041.5,480.5 1042.0,483.1 1042.5,479.1 1043.0,480.9 1043.5,480.2 1044.0,478.9 1044.5,482.0 1045.0,478.9 1045.5,480.4 1046.0,480.2 1046.5,480.5 1047.0,479.5 1047.5,481.6 1048.0,480.6 1048.5,479.2 1049.0,479.3 1049.5,480.7 1050.0,479.4 1050.5,480.8 1051.0,480.8 1051.5,479.9 1052.0,478.8 1052.5,479.3 1053.0,480.8 1053.5,480.1 1054.0,482.2 1054.5,480.2 1055.0,480.9 1055.5,481.2 1056.0,480.7 1056.5,480.9 1057.0,481.6 1057.5,480.6 1058.0,481.0 1058.5,480.4 1059.0,482.6 1059.5,480.9 1060.0,481.5 1060.5,478.1 1061.0,480.4 1061.5,479.8 1062.0,480.9 1062.5,480.5 1063.0,480.0 1063.5,480.7 1064.0,481.7 1064.5,482.0 1065.0,480.5 1065.5,482.0 1066.0,480.5 1066.5,481.6 1067.0,480.3 1067.5,482.1 1068.0,483.2 1068.5,480.9 1069.0,482.3 1069.5,479.9 1070.0,480.7 1070.5,483.7 1071.0,481.2 1071.5,481.8 1072.0,479.9 1072.5,481.4 1073.0,480.7 1073.5,482.5 1074.0,481.0 1074.5,483.8 1075.0,480.5 1075.5,481.8 1076.0,479.7 1076.5,481.2 1077.0,482.7 1077.5,481.5 1078.0,480.5 1078.5,482.1 1079.0,482.6 1079.5,482.1 1080.0,482.7 1080.5,480.5 1081.0,483.5 1081.5,482.5 1082.0,480.0 1082.5,483.7 1083.0,481.6 1083.5,482.5 1084.0,480.3 1084.5,481.6 1085.0,480.6 1085.5,483.0 1086.0,482.1 1086.5,481.5 1087.0,482.1 1087.5,483.5 1088.0,481.8 1088.5,483.1 1089.0,481.6 1089.5,481.2 1090.0,482.3 1090.5,482.5 1091.0,483.0 1091.5,483.8 1092.0,482.6 1092.5,482.7 1093.0,483.8 1093.5,483.5 1094.0,483.1 1094.5,483.5 1095.0,481.3 1095.5,482.9 1096.0,482.0 1096.5,483.2 1097.0,484.3 1097.5,482.1 1098.0,484.5 1098.5,483.2 1099.0,483.5 1099.5,483.4 1099.7,484.4 1100.3,483.2 1100.8,476.0 1101.3,471.6 1101.8,464.9 1102.3,460.7 1102.8,457.9 1103.3,455.1 1103.8,455.2 1104.3,454.0 1104.8,452.8 1105.3,452.0 1105.8,451.3 1106.3,449.7 1106.8,449.3 1107.3,449.7 1107.8,447.2 1108.3,447.5 1108.8,446.2 1109.3,445.7 1109.8,445.9 1110.3,446.1 1110.8,447.1 1111.3,445.3 1111.8,446.2 1112.3,445.7 1112.8,445.3 1113.3,442.4 1113.8,445.3 1114.3,445.3 1114.8,444.3 1115.3,445.3 1115.8,446.6 1116.3,444.2 1116.8,444.8 1117.3,446.1 1117.8,443.7 1118.3,444.4 1118.8,445.6 1119.3,446.2 1119.8,446.5 1120.3,446.1 1120.8,447.5 1121.3,445.8 1121.8,444.3 1122.3,445.3 1122.8,446.1 1123.3,445.9 1123.8,443.9 1124.3,446.0 1124.8,445.0 1125.3,445.5 1125.8,447.1 1126.3,445.6 1126.8,445.2 1127.3,445.8 1127.8,445.3 1128.3,447.8 1128.8,446.7 1129.3,446.8 1129.8,445.5 1130.3,445.5 1130.8,446.4 1131.3,444.2 1131.8,447.2 1132.3,445.2 1132.8,446.4 1133.3,446.7 1133.8,445.7 1134.3,446.8 1134.8,447.2 1135.3,448.3 1135.8,447.0 1136.3,448.3 1136.8,447.2 1137.3,446.6 1137.8,447.6 1138.3,446.4 1138.8,447.1 1139.3,447.6 1139.8,448.1 1140.3,447.3 1140.8,445.8 1141.3,448.4 1141.8,447.4 1142.3,447.0 1142.8,446.6 1143.3,447.9 1143.8,447.7 1144.3,448.1 1144.8,447.4 1145.3,449.0 1145.8,447.4 1146.3,448.0 1146.8,447.9 1147.3,448.7 1147.8,447.2 1148.3,447.6 1148.8,447.7 1149.3,447.3 1149.8,447.4 1150.3,446.9 1150.8,448.7 1151.3,449.4 1151.8,447.3 1152.3,448.9 1152.8,447.2 1153.3,447.5 1153.8,448.0 1154.3,448.5 1154.8,448.8 1155.3,446.7 1155.8,447.3 1156.3,448.6 1156.8,448.3 1157.3,450.5 1157.8,448.4 1158.3,448.1 1158.8,449.8 1159.3,446.4 1159.8,447.1 1160.3,451.3 1160.8,448.3 1161.3,449.0 1161.8,448.8 1162.3,448.2 1162.8,448.9 1163.3,447.9 1163.8,450.0 1164.3,449.9 1164.8,449.9 1165.3,448.5 1165.8,447.6 1166.3,448.9 1166.8,448.4 1167.3,449.8 1167.8,448.0 1168.3,448.7 1168.8,449.7 1169.3,450.0 1169.8,449.8 1170.3,448.6 1170.8,449.1 1171.3,451.6 1171.8,450.7 1172.3,449.2 1172.8,451.7 1173.3,449.9 1173.8,450.0 1174.3,449.3 1174.8,451.5 1175.3,450.3 1175.8,450.1 1176.3,449.4 1176.8,449.1 1177.3,450.5 1177.8,450.4 1178.3,451.8 1178.8,449.7 1179.3,450.2 1179.8,451.4 1180.3,451.3 1180.8,450.0 1181.3,452.0 1181.8,451.2 1182.3,451.6 1182.8,451.1 1183.3,451.7 1183.8,450.5 1184.3,450.8 1184.8,452.0 1185.3,451.4 1185.8,451.4 1186.3,452.1 1186.8,451.4 1187.3,451.6 1187.8,449.3 1188.3,450.8 1188.3,452.0 1189.0,450.5 1189.5,442.8 1190.0,435.7 1190.5,431.9 1191.0,430.6 1191.5,428.2 1192.0,425.7 1192.5,425.0 1193.0,422.0 1193.5,420.2 1194.0,419.7 1194.5,418.6 1195.0,416.7 1195.5,414.7 1196.0,414.2 1196.5,413.9 1197.0,413.4 1197.5,413.6 1198.0,411.1 1198.5,410.3 1199.0,408.0 1199.5,410.5 1200.0,409.6 1200.5,408.3 1201.0,407.2 1201.5,405.1 1202.0,407.6 1202.5,405.9 1203.0,407.5 1203.5,406.5 1204.0,406.6 1204.5,404.9 1205.0,405.8 1205.5,403.1 1206.0,405.4 1206.5,403.7 1207.0,402.3 1207.5,402.7 1208.0,401.9 1208.5,402.8 1209.0,401.6 1209.5,400.8 1210.0,401.4 1210.5,401.3 1211.0,401.4 1211.5,401.6 1212.0,401.9 1212.5,400.9 1213.0,401.8 1213.5,397.9 1214.0,399.8 1214.5,400.6 1215.0,398.3 1215.5,399.2 1216.0,399.4 1216.5,397.6 1217.0,398.3 1217.5,399.2 1218.0,398.2 1218.5,399.8 1219.0,400.4 1219.5,398.0 1220.0,396.9 1220.5,397.8 1221.0,397.2 1221.5,396.3 1222.0,397.1 1222.5,397.0 1223.0,397.0 1223.5,398.0 1224.0,398.0 1224.5,397.3 1225.0,396.5 1225.5,397.1 1226.0,396.7 1226.5,396.8 1227.0,395.6 1227.5,393.6 1228.0,397.1 1228.5,395.6 1229.0,395.6 1229.5,396.0 1230.0,395.8 1230.5,395.5 1231.0,397.1 1231.5,395.7 1232.0,395.7 1232.5,394.6 1233.0,395.2 1233.5,395.6 1234.0,395.1 1234.5,395.3 1235.0,394.1 1235.5,395.2 1236.0,393.9 1236.5,394.3 1237.0,393.9 1237.5,394.7 1238.0,395.4 1238.5,394.6 1239.0,393.5 1239.5,394.3 1240.0,395.1 1240.5,394.7 1241.0,394.5 1241.5,392.9 1242.0,393.4 1242.5,393.2 1243.0,393.3 1243.5,393.9 1244.0,393.6 1244.5,393.2 1245.0,394.0 1245.5,392.8 1246.0,393.0 1246.5,393.4 1247.0,392.0 1247.5,392.4 1248.0,391.9 1248.5,392.1 1249.0,392.9 1249.5,392.8 1250.0,393.2 1250.5,393.1 1251.0,391.8 1251.5,394.4 1252.0,393.9 1252.5,391.6 1253.0,392.0 1253.5,392.2 1254.0,392.7 1254.5,393.1 1255.0,392.5 1255.5,390.2 1256.0,395.0 1256.5,393.2 1257.0,393.1 1257.5,391.7 1258.0,392.4 1258.5,393.1 1259.0,391.9 1259.5,393.3 1260.0,392.3 1260.5,393.7 1261.0,392.3 1261.5,393.5 1262.0,390.8 1262.5,393.5 1263.0,392.6 1263.5,391.9 1264.0,393.2 1264.5,392.0 1265.0,392.9 1265.5,393.0 1266.0,393.1 1266.5,394.2 1267.0,393.4 1267.5,394.4 1268.0,392.8 1268.5,392.3 1269.0,392.6 1269.5,392.2 1270.0,391.1 1270.5,392.3 1271.0,391.1 1271.5,391.9 1272.0,391.9 1272.5,391.7 1273.0,391.2 1273.5,392.3 1274.0,392.2 1274.5,393.4 1275.0,392.8 1275.5,393.0 1276.0,391.8 1276.5,391.9 1277.0,391.1 1277.5,391.4 1278.0,392.8 1278.5,392.0 1279.0,392.1 1279.5,391.7 1280.0,393.6 1280.0,392.1 1280.8,393.2 1281.3,376.0 1281.8,362.9 1282.3,357.0 1282.8,354.0 1283.3,353.7 1283.8,350.0 1284.3,348.4 1284.8,346.9 1285.3,344.8 1285.8,342.7 1286.3,339.8 1286.8,338.7 1287.3,338.0 1287.8,337.3 1288.3,336.0 1288.8,334.8 1289.3,332.8 1289.8,332.6 1290.3,332.7 1290.8,330.3 1291.3,329.9 1291.8,330.5 1292.3,330.6 1292.8,328.9 1293.3,328.0 1293.8,326.7 1294.3,326.9 1294.8,325.8 1295.3,326.2 1295.8,326.2 1296.3,325.4 1296.8,325.6 1297.3,323.1 1297.8,322.3 1298.3,324.2 1298.8,323.5 1299.3,321.2 1299.8,321.8 1300.3,320.3 1300.8,320.8 1301.3,320.7 1301.8,320.9 1302.3,318.8 1302.8,318.2 1303.3,319.5 1303.8,318.3 1304.3,319.5 1304.8,316.9 1305.3,317.1 1305.8,314.9 1306.3,318.0 1306.8,317.9 1307.3,316.8 1307.8,315.9 1308.3,314.1 1308.8,314.4 1309.3,314.9 1309.8,316.8 1310.3,315.7 1310.8,314.1 1311.3,314.8 1311.8,314.6 1312.3,314.4 1312.8,312.8 1313.3,313.0 1313.8,314.1 1314.3,313.6 1314.8,312.4 1315.3,314.7 1315.8,312.5 1316.3,311.6 1316.8,312.6 1317.3,312.3 1317.8,311.2 1318.3,312.7 1318.8,311.8 1319.3,310.7 1319.8,311.1 1320.3,310.8 1320.8,309.8 1321.3,310.5 1321.8,309.1 1322.3,309.2 1322.8,309.8 1323.3,307.9 1323.8,308.5 1324.3,307.7 1324.8,309.1 1325.3,307.7 1325.8,309.7 1326.3,309.2 1326.8,307.1 1327.3,307.6 1327.8,307.0 1328.3,307.1 1328.8,307.6 1329.3,308.1 1329.8,308.6 1330.3,308.1 1330.8,305.2 1331.3,305.7 1331.8,305.8 1332.3,305.5 1332.8,305.8 1333.3,306.1 1333.8,304.9 1334.3,304.7 1334.8,307.1 1335.3,305.5 1335.8,306.7 1336.3,304.1 1336.8,305.7 1337.3,305.8 1337.8,305.4 1338.3,303.4 1338.8,304.4 1339.3,303.1 1339.8,302.7 1340.3,303.5 1340.8,303.9 1341.3,303.1 1341.8,303.1 1342.3,303.6 1342.8,302.3 1343.3,303.2 1343.8,303.4 1344.3,303.2 1344.8,303.0 1345.3,301.5 1345.8,302.0 1346.3,301.8 1346.8,302.7 1347.3,300.4 1347.8,302.0 1348.3,300.3 1348.8,302.2 1349.3,301.1 1349.8,301.5 1350.3,302.2 1350.8,302.8 1351.3,300.3 1351.8,301.2 1352.3,299.2 1352.8,300.7 1353.3,300.2 1353.8,301.3 1354.3,300.5 1354.8,300.6 1355.3,299.4 1355.8,300.0 1356.3,299.2 1356.8,300.2 1357.3,298.7 1357.8,300.2 1358.3,300.9 1358.8,302.1 1359.3,301.1 1359.8,300.8 1360.3,300.3 1360.8,300.9 1361.3,299.4 1361.8,299.7 1362.3,297.5 1362.8,298.7 1363.3,300.1 1363.8,297.4 1364.3,299.2 1364.8,298.8 1365.3,298.4 1365.8,298.9 1366.3,298.6 1366.8,297.5 1367.3,298.3 1367.8,296.7 1368.3,299.6 1368.8,298.1 1369.3,298.8 1369.8,297.1 1370.3,299.5 1370.8,298.7 1371.3,298.0 1371.8,297.8 1372.3,297.9 1372.8,296.8 1373.3,297.2 1373.8,297.0 1374.3,297.5 1374.8,298.4 1375.0,298.0 1376.0,297.3 1376.5,277.5 1377.0,256.6 1377.5,244.6 1378.0,238.9 1378.5,234.9 1379.0,231.2 1379.5,228.7 1380.0,225.5 1380.5,223.3 1381.0,221.4 1381.5,218.7 1382.0,216.0 1382.5,213.9 1383.0,212.4 1383.5,211.6 1384.0,208.8 1384.5,207.0 1385.0,206.8 1385.5,206.6 1386.0,205.5 1386.5,203.6 1387.0,199.9 1387.5,199.9 1388.0,199.0 1388.5,197.7 1389.0,196.8 1389.5,192.7 1390.0,192.3 1390.5,189.0 1391.0,188.6 1391.5,186.9 1392.0,186.4 1392.5,184.3 1393.0,181.1 1393.5,181.1 1394.0,180.1 1394.5,179.6 1395.0,176.3 1395.5,174.8 1396.0,173.7 1396.5,173.8 1397.0,171.4 1397.5,170.5 1398.0,169.6 1398.5,167.3 1399.0,167.9 1399.5,164.4 1400.0,166.5 1400.5,163.3 1401.0,162.1 1401.5,161.4 1402.0,160.2 1402.5,159.7 1403.0,159.0 1403.5,158.0 1404.0,158.3 1404.5,158.3 1405.0,157.0 1405.5,157.2 1406.0,155.9 1406.5,156.5 1407.0,155.6 1407.5,154.5 1408.0,155.2 1408.5,154.6 1409.0,153.8 1409.5,154.0 1410.0,154.2 1410.5,152.3 1411.0,152.6 1411.5,153.3 1412.0,152.4 1412.5,152.8 1413.0,154.0 1413.5,150.4 1414.0,151.6 1414.5,150.7 1415.0,152.0 1415.5,151.0 1416.0,149.0 1416.5,151.0 1417.0,149.8 1417.5,149.3 1418.0,149.3 1418.5,149.3 1419.0,148.1 1419.5,148.3 1420.0,149.7 1420.5,147.4 1421.0,147.5 1421.5,148.6 1422.0,146.8 1422.5,147.3 1423.0,147.6 1423.5,146.3 1424.0,146.7 1424.5,146.0 1425.0,146.4 1425.5,146.7 1426.0,146.3 1426.5,146.3 1427.0,146.3 1427.5,146.5 1428.0,144.7 1428.5,145.6 1429.0,146.7 1429.5,144.9 1430.0,144.8 1430.5,144.8 1431.0,144.0 1431.5,145.0 1432.0,144.4 1432.5,144.1 1433.0,144.8 1433.5,145.0 1434.0,142.6 1434.5,143.2 1435.0,143.3 1435.5,142.1 1436.0,143.9 1436.5,145.0 1437.0,143.7 1437.5,144.0 1438.0,141.0 1438.5,142.2 1439.0,141.3 1439.5,143.1 1440.0,142.2 1440.5,142.0 1441.0,142.5 1441.5,142.6 1442.0,143.3 1442.5,142.9 1443.0,142.4 1443.5,140.0 1444.0,142.5 1444.5,141.4 1445.0,139.8 1445.5,141.2 1446.0,140.7 1446.5,140.8 1447.0,141.6 1447.5,139.4 1448.0,141.1 1448.5,141.5 1449.0,139.3 1449.5,141.5 1450.0,139.5 1450.5,139.4 1451.0,140.8 1451.5,139.8 1452.0,138.1 1452.5,139.1 1453.0,140.2 1453.5,139.0 1454.0,139.0 1454.5,139.3 1455.0,139.2 1455.5,138.5 1456.0,138.2 1456.5,139.3 1457.0,139.9 1457.5,136.5 1458.0,139.0 1458.5,139.4 1459.0,137.7 1459.5,139.6 1460.0,136.9 1460.5,139.0 1461.0,139.5 1461.5,139.4 1462.0,135.5 1462.5,137.8 1463.0,136.8 1463.5,137.9 1464.0,138.8 1464.5,137.8 1465.0,138.8 1465.5,135.7 1466.0,136.3 1466.5,136.5 1467.0,137.5 1467.5,137.9 1468.0,135.9 1468.5,135.7 1469.0,137.3 1469.5,135.2 1470.0,136.8 1470.0,135.5 1471.0,136.2 1471.5,121.9 1472.0,103.6 1472.5,95.0 1473.0,91.7 1473.5,90.6 1474.0,89.2 1474.5,86.2 1475.0,82.5 1475.5,82.1 1476.0,81.4 1476.5,77.5 1477.0,76.6 1477.5,74.5 1478.0,73.4 1478.5,71.8 1479.0,70.3 1479.5,70.8 1480.0,69.3 1480.5,66.5 1481.0,66.6 1481.5,66.1 1482.0,65.0 1482.5,65.4 1483.0,64.4 1483.5,64.3 1484.0,62.2 1484.5,62.2 1485.0,61.9 1485.5,61.5 1486.0,61.0 1486.5,60.2 1487.0,60.3 1487.5,61.4 1488.0,58.8 1488.5,57.5 1489.0,58.8 1489.5,57.2 1490.0,58.2 1490.5,57.9 1491.0,58.0 1491.5,56.2 1492.0,54.1 1492.5,56.6 1493.0,55.6 1493.5,55.6 1494.0,54.1 1494.5,53.4 1495.0,53.4 1495.5,51.4 1496.0,53.6 1496.5,51.8 1497.0,51.5 1497.5,52.1 1498.0,50.6 1498.5,51.8 1499.0,50.2 1499.5,52.5 1500.0,51.1 1500.0,50.6" stroke="#e8204a" stroke-width="2.0" fill="none" stroke-linejoin="round"/>
<line x1="575.0" y1="639.9" x2="575.0" y2="644.8" stroke="#e8204a" stroke-width="1"/>
<line x1="575.5" y1="640.6" x2="575.5" y2="643.0" stroke="#e8204a" stroke-width="1"/>
<line x1="576.0" y1="640.4" x2="576.0" y2="644.5" stroke="#e8204a" stroke-width="1"/>
<line x1="576.5" y1="640.3" x2="576.5" y2="645.6" stroke="#e8204a" stroke-width="1"/>
<line x1="577.0" y1="640.7" x2="577.0" y2="644.9" stroke="#e8204a" stroke-width="1"/>
<line x1="577.5" y1="641.1" x2="577.5" y2="644.4" stroke="#e8204a" stroke-width="1"/>
<line x1="578.0" y1="640.9" x2="578.0" y2="645.8" stroke="#e8204a" stroke-width="1"/>
<line x1="578.5" y1="641.0" x2="578.5" y2="646.2" stroke="#e8204a" stroke-width="1"/>
<line x1="579.0" y1="641.4" x2="579.0" y2="645.6" stroke="#e8204a" stroke-width="1"/>
<line x1="579.5" y1="641.5" x2="579.5" y2="645.9" stroke="#e8204a" stroke-width="1"/>
<line x1="580.0" y1="642.0" x2="580.0" y2="645.2" stroke="#e8204a" stroke-width="1"/>
<line x1="580.5" y1="642.1" x2="580.5" y2="645.6" stroke="#e8204a" stroke-width="1"/>
<line x1="585.0" y1="643.2" x2="585.0" y2="649.0" stroke="#e8204a" stroke-width="1"/>
<line x1="585.5" y1="643.4" x2="585.5" y2="649.1" stroke="#e8204a" stroke-width="1"/>
<line x1="586.0" y1="644.4" x2="586.0" y2="646.4" stroke="#e8204a" stroke-width="1"/>
<line x1="586.5" y1="644.4" x2="586.5" y2="647.1" stroke="#e8204a" stroke-width="1"/>
<line x1="587.0" y1="644.5" x2="587.0" y2="647.4" stroke="#e8204a" stroke-width="1"/>
<line x1="587.5" y1="644.2" x2="587.5" y2="649.2" stroke="#e8204a" stroke-width="1"/>
<line x1="588.0" y1="644.9" x2="588.0" y2="647.6" stroke="#e8204a" stroke-width="1"/>
<line x1="588.5" y1="645.1" x2="588.5" y2="647.7" stroke="#e8204a" stroke-width="1"/>
<line x1="589.0" y1="644.7" x2="589.0" y2="649.6" stroke="#e8204a" stroke-width="1"/>
<line x1="589.5" y1="645.4" x2="589.5" y2="648.0" stroke="#e8204a" stroke-width="1"/>
<line x1="600.0" y1="646.7" x2="600.0" y2="652.5" stroke="#e8204a" stroke-width="1"/>
<line x1="600.5" y1="647.2" x2="600.5" y2="650.9" stroke="#e8204a" stroke-width="1"/>
<line x1="601.0" y1="646.8" x2="601.0" y2="652.3" stroke="#e8204a" stroke-width="1"/>
<line x1="601.5" y1="646.9" x2="601.5" y2="652.1" stroke="#e8204a" stroke-width="1"/>
<line x1="602.0" y1="647.5" x2="602.0" y2="650.3" stroke="#e8204a" stroke-width="1"/>
<line x1="602.5" y1="647.0" x2="602.5" y2="652.0" stroke="#e8204a" stroke-width="1"/>
<line x1="603.0" y1="647.4" x2="603.0" y2="650.9" stroke="#e8204a" stroke-width="1"/>
<line x1="603.5" y1="647.6" x2="603.5" y2="650.4" stroke="#e8204a" stroke-width="1"/>
<line x1="604.0" y1="647.7" x2="604.0" y2="649.9" stroke="#e8204a" stroke-width="1"/>
<line x1="604.5" y1="647.2" x2="604.5" y2="651.9" stroke="#e8204a" stroke-width="1"/>
<line x1="612.0" y1="647.6" x2="612.0" y2="651.7" stroke="#e8204a" stroke-width="1"/>
<line x1="612.5" y1="647.8" x2="612.5" y2="650.9" stroke="#e8204a" stroke-width="1"/>
<line x1="613.0" y1="647.3" x2="613.0" y2="652.5" stroke="#e8204a" stroke-width="1"/>
<line x1="613.5" y1="647.9" x2="613.5" y2="650.6" stroke="#e8204a" stroke-width="1"/>
<line x1="614.0" y1="647.7" x2="614.0" y2="651.4" stroke="#e8204a" stroke-width="1"/>
<line x1="614.5" y1="648.1" x2="614.5" y2="650.3" stroke="#e8204a" stroke-width="1"/>
<line x1="615.0" y1="647.8" x2="615.0" y2="651.2" stroke="#e8204a" stroke-width="1"/>
<line x1="615.5" y1="647.4" x2="615.5" y2="652.8" stroke="#e8204a" stroke-width="1"/>
<line x1="660.0" y1="619.6" x2="660.0" y2="623.5" stroke="#e8204a" stroke-width="1"/>
<line x1="660.5" y1="620.0" x2="660.5" y2="622.5" stroke="#e8204a" stroke-width="1"/>
<line x1="661.0" y1="620.0" x2="661.0" y2="622.9" stroke="#e8204a" stroke-width="1"/>
<line x1="661.5" y1="619.7" x2="661.5" y2="624.2" stroke="#e8204a" stroke-width="1"/>
<line x1="662.0" y1="620.1" x2="662.0" y2="623.2" stroke="#e8204a" stroke-width="1"/>
<line x1="662.5" y1="619.7" x2="662.5" y2="625.1" stroke="#e8204a" stroke-width="1"/>
<line x1="663.0" y1="620.5" x2="663.0" y2="622.7" stroke="#e8204a" stroke-width="1"/>
<line x1="663.5" y1="619.9" x2="663.5" y2="625.2" stroke="#e8204a" stroke-width="1"/>
<line x1="700.0" y1="626.2" x2="700.0" y2="630.5" stroke="#e8204a" stroke-width="1"/>
<line x1="700.5" y1="626.1" x2="700.5" y2="631.2" stroke="#e8204a" stroke-width="1"/>
<line x1="701.0" y1="626.6" x2="701.0" y2="629.9" stroke="#e8204a" stroke-width="1"/>
<line x1="701.5" y1="626.9" x2="701.5" y2="629.1" stroke="#e8204a" stroke-width="1"/>
<line x1="702.0" y1="626.9" x2="702.0" y2="629.5" stroke="#e8204a" stroke-width="1"/>
<line x1="702.5" y1="626.6" x2="702.5" y2="631.0" stroke="#e8204a" stroke-width="1"/>
<line x1="703.0" y1="627.2" x2="703.0" y2="629.3" stroke="#e8204a" stroke-width="1"/>
<line x1="703.5" y1="627.2" x2="703.5" y2="629.6" stroke="#e8204a" stroke-width="1"/>
<line x1="704.0" y1="626.7" x2="704.0" y2="631.7" stroke="#e8204a" stroke-width="1"/>
<line x1="704.5" y1="626.7" x2="704.5" y2="632.1" stroke="#e8204a" stroke-width="1"/>
<line x1="770.0" y1="590.3" x2="770.0" y2="595.6" stroke="#e8204a" stroke-width="1"/>
<line x1="770.5" y1="590.4" x2="770.5" y2="595.6" stroke="#e8204a" stroke-width="1"/>
<line x1="771.0" y1="590.7" x2="771.0" y2="594.8" stroke="#e8204a" stroke-width="1"/>
<line x1="771.5" y1="590.5" x2="771.5" y2="595.9" stroke="#e8204a" stroke-width="1"/>
<line x1="772.0" y1="590.8" x2="772.0" y2="595.4" stroke="#e8204a" stroke-width="1"/>
<line x1="772.5" y1="591.0" x2="772.5" y2="595.1" stroke="#e8204a" stroke-width="1"/>
<line x1="773.0" y1="591.2" x2="773.0" y2="594.8" stroke="#e8204a" stroke-width="1"/>
<line x1="773.5" y1="591.6" x2="773.5" y2="593.7" stroke="#e8204a" stroke-width="1"/>
<line x1="774.0" y1="591.6" x2="774.0" y2="593.9" stroke="#e8204a" stroke-width="1"/>
<line x1="774.5" y1="591.6" x2="774.5" y2="594.5" stroke="#e8204a" stroke-width="1"/>
<line x1="775.0" y1="591.5" x2="775.0" y2="595.2" stroke="#e8204a" stroke-width="1"/>
<line x1="775.5" y1="591.9" x2="775.5" y2="594.3" stroke="#e8204a" stroke-width="1"/>
<line x1="776.0" y1="591.2" x2="776.0" y2="596.9" stroke="#e8204a" stroke-width="1"/>
<line x1="776.5" y1="591.6" x2="776.5" y2="595.8" stroke="#e8204a" stroke-width="1"/>
<line x1="777.0" y1="591.6" x2="777.0" y2="596.4" stroke="#e8204a" stroke-width="1"/>
<line x1="777.5" y1="591.5" x2="777.5" y2="597.0" stroke="#e8204a" stroke-width="1"/>
<line x1="790.0" y1="594.3" x2="790.0" y2="597.2" stroke="#e8204a" stroke-width="1"/>
<line x1="790.5" y1="593.8" x2="790.5" y2="599.2" stroke="#e8204a" stroke-width="1"/>
<line x1="791.0" y1="593.8" x2="791.0" y2="599.5" stroke="#e8204a" stroke-width="1"/>
<line x1="791.5" y1="594.5" x2="791.5" y2="597.5" stroke="#e8204a" stroke-width="1"/>
<line x1="792.0" y1="594.7" x2="792.0" y2="597.2" stroke="#e8204a" stroke-width="1"/>
<line x1="792.5" y1="594.2" x2="792.5" y2="599.3" stroke="#e8204a" stroke-width="1"/>
<line x1="793.0" y1="594.2" x2="793.0" y2="599.6" stroke="#e8204a" stroke-width="1"/>
<line x1="793.5" y1="594.4" x2="793.5" y2="599.4" stroke="#e8204a" stroke-width="1"/>
<line x1="860.0" y1="555.3" x2="860.0" y2="558.9" stroke="#e8204a" stroke-width="1"/>
<line x1="860.5" y1="555.2" x2="860.5" y2="559.5" stroke="#e8204a" stroke-width="1"/>
<line x1="861.0" y1="555.7" x2="861.0" y2="558.1" stroke="#e8204a" stroke-width="1"/>
<line x1="861.5" y1="555.7" x2="861.5" y2="558.5" stroke="#e8204a" stroke-width="1"/>
<line x1="862.0" y1="555.5" x2="862.0" y2="559.1" stroke="#e8204a" stroke-width="1"/>
<line x1="862.5" y1="555.3" x2="862.5" y2="560.2" stroke="#e8204a" stroke-width="1"/>
<line x1="863.0" y1="555.9" x2="863.0" y2="558.2" stroke="#e8204a" stroke-width="1"/>
<line x1="863.5" y1="555.2" x2="863.5" y2="560.8" stroke="#e8204a" stroke-width="1"/>
<line x1="864.0" y1="556.1" x2="864.0" y2="558.2" stroke="#e8204a" stroke-width="1"/>
<line x1="864.5" y1="555.3" x2="864.5" y2="561.1" stroke="#e8204a" stroke-width="1"/>
<line x1="865.0" y1="556.0" x2="865.0" y2="558.9" stroke="#e8204a" stroke-width="1"/>
<line x1="865.5" y1="555.6" x2="865.5" y2="560.7" stroke="#e8204a" stroke-width="1"/>
<line x1="880.0" y1="557.4" x2="880.0" y2="562.5" stroke="#e8204a" stroke-width="1"/>
<line x1="880.5" y1="557.3" x2="880.5" y2="563.0" stroke="#e8204a" stroke-width="1"/>
<line x1="881.0" y1="557.9" x2="881.0" y2="561.6" stroke="#e8204a" stroke-width="1"/>
<line x1="881.5" y1="557.7" x2="881.5" y2="562.4" stroke="#e8204a" stroke-width="1"/>
<line x1="882.0" y1="558.1" x2="882.0" y2="561.2" stroke="#e8204a" stroke-width="1"/>
<line x1="882.5" y1="557.7" x2="882.5" y2="562.9" stroke="#e8204a" stroke-width="1"/>
<line x1="883.0" y1="558.5" x2="883.0" y2="560.8" stroke="#e8204a" stroke-width="1"/>
<line x1="883.5" y1="557.8" x2="883.5" y2="563.2" stroke="#e8204a" stroke-width="1"/>
<line x1="884.0" y1="558.2" x2="884.0" y2="562.4" stroke="#e8204a" stroke-width="1"/>
<line x1="884.5" y1="558.7" x2="884.5" y2="560.9" stroke="#e8204a" stroke-width="1"/>
<line x1="950.0" y1="520.6" x2="950.0" y2="526.2" stroke="#e8204a" stroke-width="1"/>
<line x1="950.5" y1="521.2" x2="950.5" y2="524.4" stroke="#e8204a" stroke-width="1"/>
<line x1="951.0" y1="521.5" x2="951.0" y2="523.7" stroke="#e8204a" stroke-width="1"/>
<line x1="951.5" y1="521.4" x2="951.5" y2="524.4" stroke="#e8204a" stroke-width="1"/>
<line x1="952.0" y1="521.7" x2="952.0" y2="523.7" stroke="#e8204a" stroke-width="1"/>
<line x1="952.5" y1="521.5" x2="952.5" y2="524.5" stroke="#e8204a" stroke-width="1"/>
<line x1="953.0" y1="521.2" x2="953.0" y2="525.9" stroke="#e8204a" stroke-width="1"/>
<line x1="953.5" y1="521.0" x2="953.5" y2="526.8" stroke="#e8204a" stroke-width="1"/>
<line x1="985.0" y1="525.3" x2="985.0" y2="529.7" stroke="#e8204a" stroke-width="1"/>
<line x1="985.5" y1="525.2" x2="985.5" y2="530.5" stroke="#e8204a" stroke-width="1"/>
<line x1="986.0" y1="525.3" x2="986.0" y2="530.5" stroke="#e8204a" stroke-width="1"/>
<line x1="986.5" y1="525.5" x2="986.5" y2="530.2" stroke="#e8204a" stroke-width="1"/>
<line x1="987.0" y1="525.9" x2="987.0" y2="529.3" stroke="#e8204a" stroke-width="1"/>
<line x1="987.5" y1="526.0" x2="987.5" y2="529.0" stroke="#e8204a" stroke-width="1"/>
<line x1="1160.0" y1="448.2" x2="1160.0" y2="450.8" stroke="#e8204a" stroke-width="1"/>
<line x1="1160.5" y1="447.9" x2="1160.5" y2="452.0" stroke="#e8204a" stroke-width="1"/>
<line x1="1161.0" y1="448.3" x2="1161.0" y2="451.0" stroke="#e8204a" stroke-width="1"/>
<line x1="1161.5" y1="447.8" x2="1161.5" y2="452.7" stroke="#e8204a" stroke-width="1"/>
<line x1="1162.0" y1="448.2" x2="1162.0" y2="451.4" stroke="#e8204a" stroke-width="1"/>
<line x1="1162.5" y1="448.1" x2="1162.5" y2="452.3" stroke="#e8204a" stroke-width="1"/>
<line x1="1163.0" y1="448.1" x2="1163.0" y2="452.2" stroke="#e8204a" stroke-width="1"/>
<line x1="1163.5" y1="448.1" x2="1163.5" y2="452.5" stroke="#e8204a" stroke-width="1"/>
<line x1="1230.0" y1="395.3" x2="1230.0" y2="397.8" stroke="#e8204a" stroke-width="1"/>
<line x1="1230.5" y1="395.1" x2="1230.5" y2="398.1" stroke="#e8204a" stroke-width="1"/>
<line x1="1231.0" y1="394.6" x2="1231.0" y2="399.3" stroke="#e8204a" stroke-width="1"/>
<line x1="1231.5" y1="395.0" x2="1231.5" y2="397.7" stroke="#e8204a" stroke-width="1"/>
<line x1="1232.0" y1="394.4" x2="1232.0" y2="399.0" stroke="#e8204a" stroke-width="1"/>
<line x1="1232.5" y1="394.1" x2="1232.5" y2="399.8" stroke="#e8204a" stroke-width="1"/>
<line x1="1233.0" y1="394.5" x2="1233.0" y2="398.0" stroke="#e8204a" stroke-width="1"/>
<line x1="1233.5" y1="393.9" x2="1233.5" y2="399.6" stroke="#e8204a" stroke-width="1"/>
<line x1="1234.0" y1="394.1" x2="1234.0" y2="398.5" stroke="#e8204a" stroke-width="1"/>
<line x1="1234.5" y1="393.8" x2="1234.5" y2="399.4" stroke="#e8204a" stroke-width="1"/>
<line x1="1300.0" y1="320.7" x2="1300.0" y2="324.7" stroke="#e8204a" stroke-width="1"/>
<line x1="1300.5" y1="320.1" x2="1300.5" y2="325.0" stroke="#e8204a" stroke-width="1"/>
<line x1="1301.0" y1="319.7" x2="1301.0" y2="324.4" stroke="#e8204a" stroke-width="1"/>
<line x1="1301.5" y1="319.8" x2="1301.5" y2="322.5" stroke="#e8204a" stroke-width="1"/>
<line x1="1302.0" y1="319.1" x2="1302.0" y2="323.1" stroke="#e8204a" stroke-width="1"/>
<line x1="1302.5" y1="318.7" x2="1302.5" y2="322.9" stroke="#e8204a" stroke-width="1"/>
<line x1="1303.0" y1="318.4" x2="1303.0" y2="322.2" stroke="#e8204a" stroke-width="1"/>
<line x1="1303.5" y1="317.9" x2="1303.5" y2="322.4" stroke="#e8204a" stroke-width="1"/>
<line x1="1420.0" y1="147.2" x2="1420.0" y2="152.7" stroke="#e8204a" stroke-width="1"/>
<line x1="1420.5" y1="147.1" x2="1420.5" y2="152.1" stroke="#e8204a" stroke-width="1"/>
<line x1="1421.0" y1="146.9" x2="1421.0" y2="152.0" stroke="#e8204a" stroke-width="1"/>
<line x1="1421.5" y1="147.3" x2="1421.5" y2="149.8" stroke="#e8204a" stroke-width="1"/>
<line x1="1422.0" y1="146.6" x2="1422.0" y2="151.3" stroke="#e8204a" stroke-width="1"/>
<line x1="1422.5" y1="146.5" x2="1422.5" y2="150.9" stroke="#e8204a" stroke-width="1"/>
<line x1="1423.0" y1="146.0" x2="1423.0" y2="151.6" stroke="#e8204a" stroke-width="1"/>
<line x1="1423.5" y1="146.7" x2="1423.5" y2="148.6" stroke="#e8204a" stroke-width="1"/>
<polyline points="556.0,627.5 556.5,627.6 557.0,627.7 557.5,627.8 558.0,627.9 558.5,628.1 559.0,628.2 559.5,628.3 560.0,628.4 560.5,628.5 561.0,628.6 561.5,628.7 562.0,628.8 562.5,629.0 563.0,629.1 563.5,629.2 564.0,629.3 564.5,629.4 565.0,629.5 565.5,629.6 566.0,629.7 566.5,629.9 567.0,630.0 567.5,630.1 568.0,630.2 568.5,630.3 569.0,630.4 569.5,630.5 570.0,630.6 570.5,630.8 571.0,630.9 571.5,631.0 572.0,631.1 572.5,631.2 573.0,631.3 573.5,631.4 574.0,631.5 574.5,631.7 575.0,631.8 575.5,631.9 576.0,632.0 576.5,632.1 577.0,632.2 577.5,632.3 578.0,632.4 578.5,632.6 579.0,632.7 579.5,632.8 580.0,632.9 580.5,633.0 581.0,633.1 581.5,633.2 582.0,633.3 582.5,633.5 583.0,633.6 583.5,633.7 584.0,633.8 584.5,633.9 585.0,634.0 585.5,634.1 586.0,634.2 586.5,634.4 587.0,634.5 587.5,634.6 588.0,634.7 588.5,634.8 589.0,634.9 589.5,635.0 590.0,635.1 590.5,635.3 591.0,635.4 591.5,635.5 592.0,635.6 592.5,635.7 593.0,635.8 593.5,635.9 594.0,636.0 594.5,636.2 595.0,636.3 595.5,636.4 596.0,636.5 596.5,636.6 597.0,636.7 597.5,636.8 598.0,636.9 598.5,637.1 599.0,637.2 599.5,637.3 600.0,637.4 600.5,637.5 601.0,637.6 601.5,637.7 602.0,637.8 602.5,638.0 603.0,638.1 603.5,638.2 604.0,638.3 604.5,638.4 605.0,638.5 605.5,638.6 606.0,638.7 606.5,638.9 607.0,639.0 607.5,639.1 608.0,639.2 608.5,639.3 609.0,639.4 609.5,639.5 610.0,639.6 610.5,639.8 611.0,639.9 611.5,640.0 612.0,640.1 612.5,640.2 613.0,640.3 613.5,640.4 614.0,640.5 614.5,640.7 615.0,640.8 615.5,640.9 616.0,641.0 616.5,641.1 617.0,641.2 617.5,641.3 617.8,641.4 618.2,641.4 618.7,621.2 619.2,619.2 619.7,617.9 620.2,617.0 620.7,616.4 621.2,616.1 621.7,615.8 622.2,615.5 622.7,615.3 623.2,615.1 623.7,614.9 624.2,614.8 624.7,614.6 625.2,614.5 625.7,614.4 626.2,614.3 626.7,614.2 627.2,614.1 627.7,614.0 628.2,614.0 628.7,613.9 629.2,613.8 629.7,613.7 630.2,613.7 630.7,613.6 631.2,613.5 631.7,613.4 632.2,613.4 632.7,613.3 633.2,613.3 633.7,613.2 634.2,613.2 634.7,613.1 635.2,613.1 635.7,613.1 636.2,613.0 636.7,613.0 637.2,613.0 637.7,613.0 638.2,613.0 638.7,613.1 639.2,613.2 639.7,613.3 640.2,613.4 640.7,613.6 641.2,613.8 641.7,614.0 642.2,614.2 642.7,614.4 643.2,614.7 643.7,614.9 644.2,615.2 644.7,615.4 645.2,615.7 645.7,616.0 646.2,616.3 646.7,616.5 647.2,616.8 647.7,617.1 648.2,617.3 648.7,617.6 649.2,617.8 649.7,618.0 650.2,618.2 650.7,618.4 651.2,618.6 651.7,618.7 652.2,618.8 652.7,619.0 653.2,619.1 653.7,619.2 654.2,619.3 654.7,619.4 655.2,619.5 655.7,619.6 656.2,619.7 656.7,619.8 657.2,619.9 657.7,620.0 658.2,620.1 658.7,620.2 659.2,620.3 659.7,620.4 660.2,620.5 660.7,620.6 661.2,620.7 661.7,620.7 662.2,620.8 662.7,620.9 663.2,621.0 663.7,621.1 664.2,621.1 664.7,621.2 665.2,621.3 665.7,621.4 666.2,621.4 666.7,621.5 667.2,621.6 667.7,621.7 668.2,621.7 668.7,621.8 669.2,621.9 669.7,621.9 670.2,622.0 670.7,622.1 671.2,622.1 671.7,622.2 672.2,622.3 672.7,622.3 673.2,622.4 673.7,622.5 674.2,622.5 674.7,622.6 675.2,622.6 675.7,622.7 676.2,622.8 676.7,622.8 677.2,622.9 677.7,622.9 678.2,623.0 678.7,623.1 679.2,623.1 679.7,623.2 680.2,623.2 680.7,623.3 681.2,623.4 681.7,623.4 682.2,623.5 682.7,623.6 683.2,623.6 683.7,623.7 684.2,623.7 684.7,623.8 685.2,623.9 685.7,623.9 686.2,624.0 686.7,624.1 687.2,624.1 687.7,624.2 688.2,624.3 688.7,624.3 689.2,624.4 689.7,624.5 690.2,624.5 690.7,624.6 691.2,624.7 691.7,624.7 692.2,624.8 692.7,624.9 693.2,625.0 693.7,625.0 694.2,625.1 694.7,625.2 695.2,625.3 695.7,625.4 696.2,625.5 696.7,625.5 697.2,625.6 697.7,625.7 698.2,625.8 698.7,625.9 699.2,626.0 699.7,626.1 700.2,626.1 700.7,626.2 701.2,626.3 701.7,626.4 702.2,626.5 702.7,626.6 703.2,626.7 703.7,626.8 704.2,626.9 704.7,627.0 705.2,627.1 705.7,627.1 706.2,627.2 706.7,627.3 707.2,627.4 707.7,627.5 708.2,627.6 708.7,627.7 709.2,627.8 709.7,627.9 710.2,628.0 710.7,628.1 711.2,628.2 711.7,628.2 712.0,628.3 712.3,628.3 712.8,602.7 713.3,596.5 713.8,591.7 714.3,588.1 714.8,585.5 715.3,583.6 715.8,582.2 716.3,580.9 716.8,579.7 717.3,578.6 717.8,577.6 718.3,576.8 718.8,576.1 719.3,575.5 719.8,575.1 720.3,574.8 720.8,574.6 721.3,574.4 721.8,574.2 722.3,574.0 722.8,573.8 723.3,573.6 723.8,573.4 724.3,573.3 724.8,573.2 725.3,573.1 725.8,573.0 726.3,572.9 726.8,572.9 727.3,572.8 727.8,572.8 728.3,572.8 728.8,572.8 729.3,572.9 729.8,572.9 730.3,573.0 730.8,573.1 731.3,573.3 731.8,573.4 732.3,573.6 732.8,573.8 733.3,573.9 733.8,574.1 734.3,574.4 734.8,574.6 735.3,574.8 735.8,575.1 736.3,575.3 736.8,575.6 737.3,575.9 737.8,576.1 738.3,576.4 738.8,576.7 739.3,577.0 739.8,577.3 740.3,577.5 740.8,577.8 741.3,578.1 741.8,578.4 742.3,578.7 742.8,578.9 743.3,579.2 743.8,579.5 744.3,579.7 744.8,580.0 745.3,580.2 745.8,580.4 746.3,580.6 746.8,580.8 747.3,581.0 747.8,581.2 748.3,581.4 748.8,581.6 749.3,581.7 749.8,581.9 750.3,582.1 750.8,582.3 751.3,582.5 751.8,582.6 752.3,582.8 752.8,583.0 753.3,583.2 753.8,583.3 754.3,583.5 754.8,583.7 755.3,583.9 755.8,584.0 756.3,584.2 756.8,584.4 757.3,584.5 757.8,584.7 758.3,584.9 758.8,585.0 759.3,585.2 759.8,585.3 760.3,585.5 760.8,585.7 761.3,585.8 761.8,586.0 762.3,586.1 762.8,586.3 763.3,586.4 763.8,586.6 764.3,586.7 764.8,586.9 765.3,587.0 765.8,587.2 766.3,587.3 766.8,587.5 767.3,587.6 767.8,587.8 768.3,587.9 768.8,588.1 769.3,588.2 769.8,588.4 770.3,588.5 770.8,588.6 771.3,588.8 771.8,588.9 772.3,589.0 772.8,589.2 773.3,589.3 773.8,589.4 774.3,589.6 774.8,589.7 775.3,589.8 775.8,590.0 776.3,590.1 776.8,590.2 777.3,590.3 777.8,590.5 778.3,590.6 778.8,590.7 779.3,590.8 779.8,591.0 780.3,591.1 780.8,591.2 781.3,591.3 781.8,591.5 782.3,591.6 782.8,591.7 783.3,591.8 783.8,591.9 784.3,592.1 784.8,592.2 785.3,592.3 785.8,592.4 786.3,592.5 786.8,592.7 787.3,592.8 787.8,592.9 788.3,593.0 788.8,593.1 789.3,593.3 789.8,593.4 790.3,593.5 790.8,593.6 791.3,593.7 791.8,593.9 792.3,594.0 792.8,594.1 793.3,594.2 793.8,594.3 794.3,594.5 794.8,594.6 795.3,594.7 795.8,594.8 796.3,595.0 796.8,595.1 797.3,595.2 797.8,595.3 798.3,595.5 798.8,595.6 799.3,595.7 799.8,595.9 800.3,596.0 800.8,596.1 801.3,596.3 801.8,596.4 802.3,596.5 802.8,596.6 803.3,596.8 803.8,596.9 804.3,597.0 804.8,597.2 805.3,597.3 805.8,597.4 806.3,597.6 806.8,597.7 807.3,597.8 807.8,598.0 808.3,598.1 808.8,598.2 809.3,598.3 809.5,598.4 810.2,598.4 810.7,583.4 811.2,574.7 811.7,569.1 812.2,564.2 812.7,560.2 813.2,556.9 813.7,554.5 814.2,552.9 814.7,552.2 815.2,551.8 815.7,551.5 816.2,551.2 816.7,551.0 817.2,550.8 817.7,550.6 818.2,550.5 818.7,550.3 819.2,550.2 819.7,550.1 820.2,549.9 820.7,549.8 821.2,549.7 821.7,549.5 822.2,549.4 822.7,549.2 823.2,549.1 823.7,549.0 824.2,548.9 824.7,548.8 825.2,548.8 825.7,548.7 826.2,548.7 826.7,548.7 827.2,548.7 827.7,548.7 828.2,548.7 828.7,548.8 829.2,548.8 829.7,548.8 830.2,548.9 830.7,548.9 831.2,549.0 831.7,549.0 832.2,549.1 832.7,549.2 833.2,549.3 833.7,549.3 834.2,549.4 834.7,549.5 835.2,549.6 835.7,549.7 836.2,549.8 836.7,549.9 837.2,550.0 837.7,550.1 838.2,550.2 838.7,550.3 839.2,550.4 839.7,550.5 840.2,550.7 840.7,550.8 841.2,550.9 841.7,551.0 842.2,551.2 842.7,551.3 843.2,551.4 843.7,551.6 844.2,551.7 844.7,551.8 845.2,552.0 845.7,552.1 846.2,552.2 846.7,552.4 847.2,552.5 847.7,552.6 848.2,552.8 848.7,552.9 849.2,553.1 849.7,553.2 850.2,553.3 850.7,553.5 851.2,553.6 851.7,553.7 852.2,553.9 852.7,554.0 853.2,554.1 853.7,554.2 854.2,554.4 854.7,554.5 855.2,554.6 855.7,554.7 856.2,554.8 856.7,554.9 857.2,555.1 857.7,555.2 858.2,555.3 858.7,555.4 859.2,555.5 859.7,555.6 860.2,555.7 860.7,555.8 861.2,555.9 861.7,555.9 862.2,556.0 862.7,556.1 863.2,556.2 863.7,556.3 864.2,556.4 864.7,556.5 865.2,556.6 865.7,556.7 866.2,556.8 866.7,556.9 867.2,557.0 867.7,557.1 868.2,557.2 868.7,557.3 869.2,557.4 869.7,557.5 870.2,557.6 870.7,557.7 871.2,557.8 871.7,557.9 872.2,558.0 872.7,558.1 873.2,558.2 873.7,558.3 874.2,558.4 874.7,558.4 875.2,558.5 875.7,558.6 876.2,558.7 876.7,558.8 877.2,558.9 877.7,559.0 878.2,559.1 878.7,559.2 879.2,559.3 879.7,559.4 880.2,559.5 880.7,559.6 881.2,559.7 881.7,559.8 882.2,559.9 882.7,559.9 883.2,560.0 883.7,560.1 884.2,560.2 884.7,560.3 885.2,560.4 885.7,560.5 886.2,560.6 886.7,560.7 887.2,560.8 887.7,560.9 888.2,561.0 888.7,561.1 889.2,561.2 889.7,561.3 890.2,561.4 890.7,561.4 891.2,561.5 891.7,561.6 892.2,561.7 892.7,561.8 893.2,561.9 893.7,562.0 894.2,562.1 894.7,562.2 895.2,562.3 895.7,562.4 896.2,562.5 896.7,562.6 897.2,562.7 897.7,562.8 898.2,562.8 898.7,562.9 899.2,563.0 899.7,563.1 900.2,563.2 900.7,563.3 901.2,563.4 901.7,563.5 902.2,563.6 902.7,563.7 903.2,563.8 903.7,563.9 904.2,564.0 904.3,564.0 904.8,564.0 905.3,542.3 905.8,529.0 906.3,528.5 906.8,528.1 907.3,527.8 907.8,527.5 908.3,527.3 908.8,527.2 909.3,527.1 909.8,527.0 910.3,526.9 910.8,526.8 911.3,526.6 911.8,526.4 912.3,526.1 912.8,525.7 913.3,525.1 913.8,524.4 914.3,523.5 914.8,522.6 915.3,521.7 915.8,520.7 916.3,519.7 916.8,518.8 917.3,518.0 917.8,517.2 918.3,516.6 918.8,516.2 919.3,515.9 919.8,515.9 920.3,515.9 920.8,515.9 921.3,515.9 921.8,516.0 922.3,516.0 922.8,516.0 923.3,516.0 923.8,516.1 924.3,516.1 924.8,516.2 925.3,516.2 925.8,516.3 926.3,516.4 926.8,516.4 927.3,516.5 927.8,516.6 928.3,516.6 928.8,516.7 929.3,516.8 929.8,516.9 930.3,517.0 930.8,517.1 931.3,517.1 931.8,517.2 932.3,517.3 932.8,517.4 933.3,517.5 933.8,517.6 934.3,517.7 934.8,517.8 935.3,517.9 935.8,518.1 936.3,518.2 936.8,518.3 937.3,518.4 937.8,518.5 938.3,518.6 938.8,518.7 939.3,518.8 939.8,518.9 940.3,519.0 940.8,519.1 941.3,519.3 941.8,519.4 942.3,519.5 942.8,519.6 943.3,519.7 943.8,519.8 944.3,519.9 944.8,520.0 945.3,520.1 945.8,520.2 946.3,520.3 946.8,520.4 947.3,520.5 947.8,520.6 948.3,520.7 948.8,520.8 949.3,520.9 949.8,521.0 950.3,521.1 950.8,521.2 951.3,521.3 951.8,521.4 952.3,521.5 952.8,521.6 953.3,521.7 953.8,521.8 954.3,521.9 954.8,522.0 955.3,522.1 955.8,522.3 956.3,522.4 956.8,522.5 957.3,522.6 957.8,522.7 958.3,522.8 958.8,522.9 959.3,523.1 959.8,523.2 960.3,523.3 960.8,523.4 961.3,523.5 961.8,523.6 962.3,523.8 962.8,523.9 963.3,524.0 963.8,524.1 964.3,524.2 964.8,524.4 965.3,524.5 965.8,524.6 966.3,524.7 966.8,524.9 967.3,525.0 967.8,525.1 968.3,525.2 968.8,525.4 969.3,525.5 969.8,525.6 970.3,525.7 970.8,525.9 971.3,526.0 971.8,526.1 972.3,526.2 972.8,526.4 973.3,526.5 973.8,526.6 974.3,526.8 974.8,526.9 975.3,527.0 975.8,527.1 976.3,527.3 976.8,527.4 977.3,527.5 977.8,527.7 978.3,527.8 978.8,527.9 979.3,528.1 979.8,528.2 980.3,528.3 980.8,528.4 981.3,528.6 981.8,528.7 982.3,528.8 982.8,529.0 983.3,529.1 983.8,529.2 984.3,529.4 984.8,529.5 985.3,529.6 985.8,529.8 986.3,529.9 986.8,530.0 987.3,530.2 987.8,530.3 988.3,530.4 988.8,530.5 989.3,530.7 989.8,530.8 990.3,530.9 990.8,531.1 991.3,531.2 991.8,531.3 992.3,531.5 992.8,531.6 993.3,531.7 993.8,531.8 994.3,532.0 994.8,532.1 995.3,532.2 995.8,532.3 996.3,532.5 996.8,532.6 997.3,532.7 997.8,532.9 998.3,533.0 998.8,533.1 999.3,533.2 999.8,533.4 1000.3,533.5 1000.8,533.6 1001.3,533.7 1001.8,533.9 1002.3,534.0 1002.8,534.1 1002.8,534.1 1003.2,534.1 1003.7,510.5 1004.2,491.4 1004.7,484.7 1005.2,479.7 1005.7,475.8 1006.2,472.9 1006.7,470.8 1007.2,469.2 1007.7,467.9 1008.2,466.7 1008.7,465.5 1009.2,464.4 1009.7,463.3 1010.2,462.4 1010.7,461.5 1011.2,460.6 1011.7,459.9 1012.2,459.2 1012.7,458.6 1013.2,458.1 1013.7,457.7 1014.2,457.3 1014.7,457.1 1015.2,456.9 1015.7,456.8 1016.2,456.8 1016.7,456.9 1017.2,456.9 1017.7,457.1 1018.2,457.2 1018.7,457.4 1019.2,457.7 1019.7,457.9 1020.2,458.2 1020.7,458.5 1021.2,458.8 1021.7,459.2 1022.2,459.5 1022.7,459.9 1023.2,460.3 1023.7,460.7 1024.2,461.1 1024.7,461.5 1025.2,461.9 1025.7,462.3 1026.2,462.7 1026.7,463.1 1027.2,463.4 1027.7,463.8 1028.2,464.2 1028.7,464.5 1029.2,464.8 1029.7,465.1 1030.2,465.4 1030.7,465.6 1031.2,465.8 1031.7,466.0 1032.2,466.3 1032.7,466.5 1033.2,466.7 1033.7,466.9 1034.2,467.1 1034.7,467.3 1035.2,467.5 1035.7,467.7 1036.2,467.9 1036.7,468.1 1037.2,468.3 1037.7,468.5 1038.2,468.7 1038.7,468.9 1039.2,469.1 1039.7,469.3 1040.2,469.4 1040.7,469.6 1041.2,469.8 1041.7,470.0 1042.2,470.1 1042.7,470.3 1043.2,470.5 1043.7,470.7 1044.2,470.8 1044.7,471.0 1045.2,471.2 1045.7,471.3 1046.2,471.5 1046.7,471.7 1047.2,471.8 1047.7,472.0 1048.2,472.2 1048.7,472.3 1049.2,472.5 1049.7,472.7 1050.2,472.8 1050.7,473.0 1051.2,473.2 1051.7,473.3 1052.2,473.5 1052.7,473.7 1053.2,473.8 1053.7,474.0 1054.2,474.2 1054.7,474.3 1055.2,474.5 1055.7,474.6 1056.2,474.8 1056.7,475.0 1057.2,475.1 1057.7,475.3 1058.2,475.5 1058.7,475.6 1059.2,475.8 1059.7,475.9 1060.2,476.1 1060.7,476.3 1061.2,476.4 1061.7,476.6 1062.2,476.7 1062.7,476.9 1063.2,477.0 1063.7,477.2 1064.2,477.3 1064.7,477.5 1065.2,477.6 1065.7,477.8 1066.2,477.9 1066.7,478.0 1067.2,478.2 1067.7,478.3 1068.2,478.5 1068.7,478.6 1069.2,478.7 1069.7,478.9 1070.2,479.0 1070.7,479.1 1071.2,479.3 1071.7,479.4 1072.2,479.5 1072.7,479.6 1073.2,479.7 1073.7,479.9 1074.2,480.0 1074.7,480.1 1075.2,480.2 1075.7,480.3 1076.2,480.4 1076.7,480.5 1077.2,480.6 1077.7,480.7 1078.2,480.8 1078.7,480.9 1079.2,481.0 1079.7,481.1 1080.2,481.2 1080.7,481.2 1081.2,481.3 1081.7,481.4 1082.2,481.5 1082.7,481.6 1083.2,481.6 1083.7,481.7 1084.2,481.8 1084.7,481.9 1085.2,481.9 1085.7,482.0 1086.2,482.1 1086.7,482.1 1087.2,482.2 1087.7,482.3 1088.2,482.3 1088.7,482.4 1089.2,482.5 1089.7,482.5 1090.2,482.6 1090.7,482.7 1091.2,482.7 1091.7,482.8 1092.2,482.8 1092.7,482.9 1093.2,483.0 1093.7,483.0 1094.2,483.1 1094.7,483.1 1095.2,483.2 1095.7,483.3 1096.2,483.3 1096.7,483.4 1097.2,483.5 1097.7,483.5 1098.2,483.6 1098.7,483.7 1099.2,483.7 1099.7,483.8 1099.7,483.8 1100.2,483.8 1100.7,471.8 1101.2,459.4 1101.7,451.8 1102.2,450.3 1102.7,449.2 1103.2,448.4 1103.7,447.7 1104.2,447.2 1104.7,446.8 1105.2,446.5 1105.7,446.2 1106.2,445.9 1106.7,445.6 1107.2,445.4 1107.7,445.1 1108.2,444.9 1108.7,444.6 1109.2,444.4 1109.7,444.2 1110.2,444.0 1110.7,443.9 1111.2,443.7 1111.7,443.6 1112.2,443.4 1112.7,443.3 1113.2,443.2 1113.7,443.2 1114.2,443.1 1114.7,443.1 1115.2,443.1 1115.7,443.1 1116.2,443.1 1116.7,443.1 1117.2,443.1 1117.7,443.1 1118.2,443.1 1118.7,443.1 1119.2,443.1 1119.7,443.2 1120.2,443.2 1120.7,443.2 1121.2,443.2 1121.7,443.2 1122.2,443.2 1122.7,443.3 1123.2,443.3 1123.7,443.3 1124.2,443.3 1124.7,443.3 1125.2,443.4 1125.7,443.4 1126.2,443.4 1126.7,443.4 1127.2,443.5 1127.7,443.5 1128.2,443.5 1128.7,443.5 1129.2,443.6 1129.7,443.6 1130.2,443.6 1130.7,443.7 1131.2,443.7 1131.7,443.7 1132.2,443.8 1132.7,443.8 1133.2,443.8 1133.7,443.9 1134.2,443.9 1134.7,443.9 1135.2,444.0 1135.7,444.0 1136.2,444.0 1136.7,444.1 1137.2,444.1 1137.7,444.2 1138.2,444.2 1138.7,444.2 1139.2,444.3 1139.7,444.3 1140.2,444.4 1140.7,444.4 1141.2,444.4 1141.7,444.5 1142.2,444.5 1142.7,444.5 1143.2,444.6 1143.7,444.6 1144.2,444.7 1144.7,444.7 1145.2,444.7 1145.7,444.8 1146.2,444.8 1146.7,444.8 1147.2,444.9 1147.7,444.9 1148.2,445.0 1148.7,445.0 1149.2,445.0 1149.7,445.1 1150.2,445.1 1150.7,445.1 1151.2,445.2 1151.7,445.2 1152.2,445.2 1152.7,445.3 1153.2,445.3 1153.7,445.3 1154.2,445.4 1154.7,445.4 1155.2,445.5 1155.7,445.5 1156.2,445.5 1156.7,445.6 1157.2,445.6 1157.7,445.6 1158.2,445.7 1158.7,445.7 1159.2,445.8 1159.7,445.8 1160.2,445.8 1160.7,445.9 1161.2,445.9 1161.7,445.9 1162.2,446.0 1162.7,446.0 1163.2,446.1 1163.7,446.1 1164.2,446.2 1164.7,446.2 1165.2,446.2 1165.7,446.3 1166.2,446.3 1166.7,446.4 1167.2,446.4 1167.7,446.4 1168.2,446.5 1168.7,446.5 1169.2,446.6 1169.7,446.6 1170.2,446.7 1170.7,446.7 1171.2,446.7 1171.7,446.8 1172.2,446.8 1172.7,446.9 1173.2,446.9 1173.7,447.0 1174.2,447.0 1174.7,447.0 1175.2,447.1 1175.7,447.1 1176.2,447.2 1176.7,447.2 1177.2,447.3 1177.7,447.3 1178.2,447.3 1178.7,447.4 1179.2,447.4 1179.7,447.5 1180.2,447.5 1180.7,447.6 1181.2,447.6 1181.7,447.6 1182.2,447.7 1182.7,447.7 1183.2,447.8 1183.7,447.8 1184.2,447.9 1184.7,447.9 1185.2,447.9 1185.7,448.0 1186.2,448.0 1186.7,448.1 1187.2,448.1 1187.7,448.2 1188.2,448.2 1188.3,448.2 1188.8,448.2 1189.3,424.3 1189.8,400.3 1190.3,388.1 1190.8,385.8 1191.3,383.8 1191.8,382.0 1192.3,380.6 1192.8,379.4 1193.3,378.5 1193.8,377.8 1194.3,377.3 1194.8,377.0 1195.3,376.9 1195.8,376.9 1196.3,376.9 1196.8,377.0 1197.3,377.0 1197.8,377.1 1198.3,377.2 1198.8,377.3 1199.3,377.4 1199.8,377.5 1200.3,377.7 1200.8,377.8 1201.3,378.0 1201.8,378.2 1202.3,378.3 1202.8,378.5 1203.3,378.7 1203.8,378.9 1204.3,379.2 1204.8,379.4 1205.3,379.6 1205.8,379.8 1206.3,380.1 1206.8,380.3 1207.3,380.5 1207.8,380.8 1208.3,381.0 1208.8,381.3 1209.3,381.5 1209.8,381.8 1210.3,382.0 1210.8,382.2 1211.3,382.5 1211.8,382.7 1212.3,382.9 1212.8,383.1 1213.3,383.3 1213.8,383.5 1214.3,383.7 1214.8,383.9 1215.3,384.1 1215.8,384.3 1216.3,384.5 1216.8,384.6 1217.3,384.7 1217.8,384.9 1218.3,385.0 1218.8,385.1 1219.3,385.2 1219.8,385.3 1220.3,385.3 1220.8,385.4 1221.3,385.5 1221.8,385.6 1222.3,385.7 1222.8,385.8 1223.3,385.8 1223.8,385.9 1224.3,386.0 1224.8,386.1 1225.3,386.2 1225.8,386.2 1226.3,386.3 1226.8,386.4 1227.3,386.5 1227.8,386.5 1228.3,386.6 1228.8,386.7 1229.3,386.7 1229.8,386.8 1230.3,386.9 1230.8,387.0 1231.3,387.0 1231.8,387.1 1232.3,387.1 1232.8,387.2 1233.3,387.3 1233.8,387.3 1234.3,387.4 1234.8,387.5 1235.3,387.5 1235.8,387.6 1236.3,387.6 1236.8,387.7 1237.3,387.7 1237.8,387.8 1238.3,387.8 1238.8,387.9 1239.3,388.0 1239.8,388.0 1240.3,388.1 1240.8,388.1 1241.3,388.2 1241.8,388.2 1242.3,388.2 1242.8,388.3 1243.3,388.3 1243.8,388.4 1244.3,388.4 1244.8,388.5 1245.3,388.5 1245.8,388.6 1246.3,388.6 1246.8,388.6 1247.3,388.7 1247.8,388.7 1248.3,388.8 1248.8,388.8 1249.3,388.8 1249.8,388.9 1250.3,388.9 1250.8,388.9 1251.3,389.0 1251.8,389.0 1252.3,389.0 1252.8,389.1 1253.3,389.1 1253.8,389.1 1254.3,389.1 1254.8,389.2 1255.3,389.2 1255.8,389.2 1256.3,389.3 1256.8,389.3 1257.3,389.3 1257.8,389.3 1258.3,389.4 1258.8,389.4 1259.3,389.4 1259.8,389.4 1260.3,389.5 1260.8,389.5 1261.3,389.5 1261.8,389.5 1262.3,389.5 1262.8,389.6 1263.3,389.6 1263.8,389.6 1264.3,389.6 1264.8,389.6 1265.3,389.7 1265.8,389.7 1266.3,389.7 1266.8,389.7 1267.3,389.7 1267.8,389.7 1268.3,389.8 1268.8,389.8 1269.3,389.8 1269.8,389.8 1270.3,389.8 1270.8,389.9 1271.3,389.9 1271.8,389.9 1272.3,389.9 1272.8,389.9 1273.3,389.9 1273.8,390.0 1274.3,390.0 1274.8,390.0 1275.3,390.0 1275.8,390.0 1276.3,390.1 1276.8,390.1 1277.3,390.1 1277.8,390.1 1278.3,390.1 1278.8,390.2 1279.3,390.2 1279.8,390.2 1280.0,390.2 1280.4,390.2 1280.9,335.3 1281.4,324.9 1281.9,318.2 1282.4,312.8 1282.9,308.4 1283.4,304.9 1283.9,302.2 1284.4,300.2 1284.9,298.7 1285.4,297.6 1285.9,296.7 1286.4,295.9 1286.9,295.1 1287.4,294.5 1287.9,293.8 1288.4,293.2 1288.9,292.7 1289.4,292.2 1289.9,291.8 1290.4,291.4 1290.9,291.1 1291.4,290.8 1291.9,290.6 1292.4,290.5 1292.9,290.4 1293.4,290.4 1293.9,290.4 1294.4,290.5 1294.9,290.5 1295.4,290.6 1295.9,290.7 1296.4,290.9 1296.9,291.0 1297.4,291.2 1297.9,291.4 1298.4,291.5 1298.9,291.8 1299.4,292.0 1299.9,292.2 1300.4,292.4 1300.9,292.7 1301.4,292.9 1301.9,293.2 1302.4,293.4 1302.9,293.7 1303.4,294.0 1303.9,294.2 1304.4,294.5 1304.9,294.7 1305.4,295.0 1305.9,295.2 1306.4,295.5 1306.9,295.7 1307.4,295.9 1307.9,296.2 1308.4,296.4 1308.9,296.6 1309.4,296.8 1309.9,296.9 1310.4,297.1 1310.9,297.2 1311.4,297.3 1311.9,297.4 1312.4,297.5 1312.9,297.5 1313.4,297.6 1313.9,297.7 1314.4,297.7 1314.9,297.8 1315.4,297.8 1315.9,297.9 1316.4,297.9 1316.9,298.0 1317.4,298.0 1317.9,298.1 1318.4,298.1 1318.9,298.2 1319.4,298.2 1319.9,298.3 1320.4,298.3 1320.9,298.4 1321.4,298.4 1321.9,298.4 1322.4,298.5 1322.9,298.5 1323.4,298.5 1323.9,298.6 1324.4,298.6 1324.9,298.6 1325.4,298.6 1325.9,298.7 1326.4,298.7 1326.9,298.7 1327.4,298.7 1327.9,298.7 1328.4,298.7 1328.9,298.7 1329.4,298.7 1329.9,298.7 1330.4,298.7 1330.9,298.7 1331.4,298.7 1331.9,298.7 1332.4,298.7 1332.9,298.7 1333.4,298.7 1333.9,298.7 1334.4,298.7 1334.9,298.7 1335.4,298.7 1335.9,298.6 1336.4,298.6 1336.9,298.6 1337.4,298.6 1337.9,298.5 1338.4,298.5 1338.9,298.5 1339.4,298.5 1339.9,298.4 1340.4,298.4 1340.9,298.4 1341.4,298.3 1341.9,298.3 1342.4,298.3 1342.9,298.3 1343.4,298.2 1343.9,298.2 1344.4,298.1 1344.9,298.1 1345.4,298.1 1345.9,298.0 1346.4,298.0 1346.9,298.0 1347.4,297.9 1347.9,297.9 1348.4,297.8 1348.9,297.8 1349.4,297.8 1349.9,297.7 1350.4,297.7 1350.9,297.6 1351.4,297.6 1351.9,297.5 1352.4,297.5 1352.9,297.5 1353.4,297.4 1353.9,297.4 1354.4,297.3 1354.9,297.3 1355.4,297.3 1355.9,297.2 1356.4,297.2 1356.9,297.1 1357.4,297.1 1357.9,297.1 1358.4,297.0 1358.9,297.0 1359.4,296.9 1359.9,296.9 1360.4,296.9 1360.9,296.8 1361.4,296.8 1361.9,296.8 1362.4,296.7 1362.9,296.7 1363.4,296.7 1363.9,296.6 1364.4,296.6 1364.9,296.6 1365.4,296.5 1365.9,296.5 1366.4,296.5 1366.9,296.5 1367.4,296.4 1367.9,296.4 1368.4,296.4 1368.9,296.4 1369.4,296.4 1369.9,296.3 1370.4,296.3 1370.9,296.3 1371.4,296.3 1371.9,296.3 1372.4,296.3 1372.9,296.3 1373.4,296.3 1373.9,296.3 1374.4,296.3 1374.9,296.3 1375.4,298.8 1375.9,305.9 1376.2,310.0 1376.4,310.0 1376.9,208.9 1377.4,185.2 1377.9,170.5 1378.4,161.7 1378.9,155.9 1379.4,151.0 1379.9,146.7 1380.4,142.9 1380.9,139.8 1381.4,137.1 1381.9,135.0 1382.4,133.4 1382.9,132.2 1383.4,131.3 1383.9,130.5 1384.4,129.8 1384.9,129.2 1385.4,128.6 1385.9,128.2 1386.4,127.8 1386.9,127.6 1387.4,127.5 1387.9,127.5 1388.4,127.5 1388.9,127.6 1389.4,127.7 1389.9,127.8 1390.4,128.0 1390.9,128.1 1391.4,128.3 1391.9,128.5 1392.4,128.7 1392.9,128.9 1393.4,129.1 1393.9,129.4 1394.4,129.6 1394.9,129.8 1395.4,130.1 1395.9,130.3 1396.4,130.6 1396.9,130.8 1397.4,131.0 1397.9,131.2 1398.4,131.4 1398.9,131.6 1399.4,131.8 1399.9,132.0 1400.4,132.1 1400.9,132.3 1401.4,132.4 1401.9,132.6 1402.4,132.7 1402.9,132.9 1403.4,133.1 1403.9,133.2 1404.4,133.4 1404.9,133.6 1405.4,133.7 1405.9,133.9 1406.4,134.0 1406.9,134.2 1407.4,134.4 1407.9,134.5 1408.4,134.7 1408.9,134.8 1409.4,135.0 1409.9,135.1 1410.4,135.2 1410.9,135.3 1411.4,135.5 1411.9,135.6 1412.4,135.7 1412.9,135.8 1413.4,135.9 1413.9,136.0 1414.4,136.0 1414.9,136.1 1415.4,136.1 1415.9,136.2 1416.4,136.2 1416.9,136.2 1417.4,136.2 1417.9,136.2 1418.4,136.2 1418.9,136.2 1419.4,136.2 1419.9,136.2 1420.4,136.2 1420.9,136.2 1421.4,136.2 1421.9,136.2 1422.4,136.2 1422.9,136.2 1423.4,136.2 1423.9,136.1 1424.4,136.1 1424.9,136.1 1425.4,136.1 1425.9,136.1 1426.4,136.1 1426.9,136.0 1427.4,136.0 1427.9,136.0 1428.4,136.0 1428.9,135.9 1429.4,135.9 1429.9,135.9 1430.4,135.9 1430.9,135.8 1431.4,135.8 1431.9,135.8 1432.4,135.7 1432.9,135.7 1433.4,135.7 1433.9,135.6 1434.4,135.6 1434.9,135.6 1435.4,135.5 1435.9,135.5 1436.4,135.5 1436.9,135.4 1437.4,135.4 1437.9,135.3 1438.4,135.3 1438.9,135.3 1439.4,135.2 1439.9,135.2 1440.4,135.1 1440.9,135.1 1441.4,135.0 1441.9,135.0 1442.4,135.0 1442.9,134.9 1443.4,134.9 1443.9,134.8 1444.4,134.8 1444.9,134.7 1445.4,134.7 1445.9,134.6 1446.4,134.6 1446.9,134.6 1447.4,134.5 1447.9,134.5 1448.4,134.4 1448.9,134.4 1449.4,134.3 1449.9,134.3 1450.4,134.2 1450.9,134.2 1451.4,134.1 1451.9,134.1 1452.4,134.0 1452.9,134.0 1453.4,133.9 1453.9,133.9 1454.4,133.8 1454.9,133.8 1455.4,133.8 1455.9,133.7 1456.4,133.7 1456.9,133.6 1457.4,133.6 1457.9,133.5 1458.4,133.5 1458.9,133.4 1459.4,133.4 1459.9,133.3 1460.4,133.3 1460.9,133.2 1461.4,133.2 1461.9,133.2 1462.4,133.1 1462.9,133.1 1463.4,133.0 1463.9,133.0 1464.4,132.9 1464.9,132.9 1465.4,132.9 1465.9,132.8 1466.4,132.8 1466.9,132.7 1467.4,132.7 1467.9,132.7 1468.4,132.6 1468.9,132.6 1469.4,132.5 1469.9,132.5 1470.0,132.5 1470.5,132.5 1471.0,103.7 1471.5,91.2 1472.0,84.9 1472.5,80.0 1473.0,76.1 1473.5,73.1 1474.0,70.5 1474.5,68.2 1475.0,65.8 1475.5,63.0 1476.0,59.6 1476.5,55.2 1477.0,50.3 1477.5,45.1 1478.0,40.0 1478.0,40.0" stroke="#0c2cb4" stroke-width="2.8" fill="none" stroke-linejoin="round"/>
</g>
<line x1="801.5" y1="57.5" x2="801.5" y2="669" stroke="#000" stroke-width="1"/>
<path d="M546.5,350.5 L554.5,354.5 L546.5,358.5 Z" fill="#1a34d8" stroke="#000" stroke-width="1"/>
<text x="561.0" y="358.0" font-size="9" fill="#000" textLength="22.5" lengthAdjust="spacingAndGlyphs">0.909</text>
<path d="M611.5,671.5 L619.5,671.5 L615.5,679 Z" fill="#1a34d8" stroke="#000" stroke-width="1"/>
<text x="623.0" y="678.0" font-size="9" fill="#000" textLength="22.5" lengthAdjust="spacingAndGlyphs">0.626</text>
<path d="M1671.5,55.5 L1679.5,55.5 L1675.5,48.5 Z" fill="#1a34d8" stroke="#000" stroke-width="1"/>
<text x="1644.5" y="55.8" font-size="9" fill="#000" textLength="22.5" lengthAdjust="spacingAndGlyphs">1.549</text>
<rect x="547" y="595" width="8" height="2" fill="#0c2cb4"/>
<line x1="547" y1="913.5" x2="555" y2="913.5" stroke="#000" stroke-width="1"/>
<text x="540.0" y="917.8" font-size="12" fill="#5ad43a" text-anchor="end">-3.00</text>
<line x1="551.5" y1="909.5" x2="555" y2="909.5" stroke="#000" stroke-width="1"/>
<line x1="551.5" y1="905.5" x2="555" y2="905.5" stroke="#000" stroke-width="1"/>
<line x1="551.5" y1="902.5" x2="555" y2="902.5" stroke="#000" stroke-width="1"/>
<line x1="551.5" y1="898.5" x2="555" y2="898.5" stroke="#000" stroke-width="1"/>
<line x1="547" y1="895.5" x2="555" y2="895.5" stroke="#000" stroke-width="1"/>
<text x="540.0" y="899.8" font-size="12" fill="#5ad43a" text-anchor="end">-2.50</text>
<line x1="551.5" y1="891.5" x2="555" y2="891.5" stroke="#000" stroke-width="1"/>
<line x1="551.5" y1="887.5" x2="555" y2="887.5" stroke="#000" stroke-width="1"/>
<line x1="551.5" y1="884.5" x2="555" y2="884.5" stroke="#000" stroke-width="1"/>
<line x1="551.5" y1="880.5" x2="555" y2="880.5" stroke="#000" stroke-width="1"/>
<line x1="547" y1="877.5" x2="555" y2="877.5" stroke="#000" stroke-width="1"/>
<text x="540.0" y="881.8" font-size="12" fill="#5ad43a" text-anchor="end">-2.00</text>
<line x1="551.5" y1="873.5" x2="555" y2="873.5" stroke="#000" stroke-width="1"/>
<line x1="551.5" y1="870.5" x2="555" y2="870.5" stroke="#000" stroke-width="1"/>
<line x1="551.5" y1="866.5" x2="555" y2="866.5" stroke="#000" stroke-width="1"/>
<line x1="551.5" y1="862.5" x2="555" y2="862.5" stroke="#000" stroke-width="1"/>
<line x1="547" y1="859.5" x2="555" y2="859.5" stroke="#000" stroke-width="1"/>
<text x="540.0" y="863.8" font-size="12" fill="#5ad43a" text-anchor="end">-1.50</text>
<line x1="551.5" y1="855.5" x2="555" y2="855.5" stroke="#000" stroke-width="1"/>
<line x1="551.5" y1="852.5" x2="555" y2="852.5" stroke="#000" stroke-width="1"/>
<line x1="551.5" y1="848.5" x2="555" y2="848.5" stroke="#000" stroke-width="1"/>
<line x1="551.5" y1="844.5" x2="555" y2="844.5" stroke="#000" stroke-width="1"/>
<line x1="547" y1="841.5" x2="555" y2="841.5" stroke="#000" stroke-width="1"/>
<text x="540.0" y="845.8" font-size="12" fill="#5ad43a" text-anchor="end">-1.00</text>
<line x1="551.5" y1="837.5" x2="555" y2="837.5" stroke="#000" stroke-width="1"/>
<line x1="551.5" y1="834.5" x2="555" y2="834.5" stroke="#000" stroke-width="1"/>
<line x1="551.5" y1="830.5" x2="555" y2="830.5" stroke="#000" stroke-width="1"/>
<line x1="551.5" y1="826.5" x2="555" y2="826.5" stroke="#000" stroke-width="1"/>
<line x1="547" y1="823.5" x2="555" y2="823.5" stroke="#000" stroke-width="1"/>
<text x="540.0" y="827.8" font-size="12" fill="#5ad43a" text-anchor="end">-0.50</text>
<line x1="551.5" y1="819.5" x2="555" y2="819.5" stroke="#000" stroke-width="1"/>
<line x1="551.5" y1="816.5" x2="555" y2="816.5" stroke="#000" stroke-width="1"/>
<line x1="551.5" y1="812.5" x2="555" y2="812.5" stroke="#000" stroke-width="1"/>
<line x1="551.5" y1="808.5" x2="555" y2="808.5" stroke="#000" stroke-width="1"/>
<line x1="547" y1="805.5" x2="555" y2="805.5" stroke="#000" stroke-width="1"/>
<text x="540.0" y="809.8" font-size="12" fill="#5ad43a" text-anchor="end">0.00</text>
<line x1="551.5" y1="801.5" x2="555" y2="801.5" stroke="#000" stroke-width="1"/>
<line x1="551.5" y1="798.5" x2="555" y2="798.5" stroke="#000" stroke-width="1"/>
<line x1="551.5" y1="794.5" x2="555" y2="794.5" stroke="#000" stroke-width="1"/>
<line x1="551.5" y1="790.5" x2="555" y2="790.5" stroke="#000" stroke-width="1"/>
<line x1="547" y1="787.5" x2="555" y2="787.5" stroke="#000" stroke-width="1"/>
<text x="540.0" y="791.8" font-size="12" fill="#5ad43a" text-anchor="end">0.50</text>
<line x1="551.5" y1="783.5" x2="555" y2="783.5" stroke="#000" stroke-width="1"/>
<line x1="551.5" y1="780.5" x2="555" y2="780.5" stroke="#000" stroke-width="1"/>
<line x1="551.5" y1="776.5" x2="555" y2="776.5" stroke="#000" stroke-width="1"/>
<line x1="551.5" y1="772.5" x2="555" y2="772.5" stroke="#000" stroke-width="1"/>
<line x1="547" y1="769.5" x2="555" y2="769.5" stroke="#000" stroke-width="1"/>
<text x="540.0" y="773.8" font-size="12" fill="#5ad43a" text-anchor="end">1.00</text>
<line x1="551.5" y1="765.5" x2="555" y2="765.5" stroke="#000" stroke-width="1"/>
<line x1="551.5" y1="762.5" x2="555" y2="762.5" stroke="#000" stroke-width="1"/>
<line x1="551.5" y1="758.5" x2="555" y2="758.5" stroke="#000" stroke-width="1"/>
<line x1="551.5" y1="754.5" x2="555" y2="754.5" stroke="#000" stroke-width="1"/>
<line x1="547" y1="751.5" x2="555" y2="751.5" stroke="#000" stroke-width="1"/>
<text x="540.0" y="755.8" font-size="12" fill="#5ad43a" text-anchor="end">1.50</text>
<line x1="551.5" y1="747.5" x2="555" y2="747.5" stroke="#000" stroke-width="1"/>
<line x1="551.5" y1="744.5" x2="555" y2="744.5" stroke="#000" stroke-width="1"/>
<line x1="551.5" y1="740.5" x2="555" y2="740.5" stroke="#000" stroke-width="1"/>
<line x1="551.5" y1="736.5" x2="555" y2="736.5" stroke="#000" stroke-width="1"/>
<line x1="547" y1="733.5" x2="555" y2="733.5" stroke="#000" stroke-width="1"/>
<text x="540.0" y="737.8" font-size="12" fill="#5ad43a" text-anchor="end">2.00</text>
<line x1="551.5" y1="729.5" x2="555" y2="729.5" stroke="#000" stroke-width="1"/>
<line x1="551.5" y1="726.5" x2="555" y2="726.5" stroke="#000" stroke-width="1"/>
<line x1="551.5" y1="722.5" x2="555" y2="722.5" stroke="#000" stroke-width="1"/>
<line x1="551.5" y1="719.5" x2="555" y2="719.5" stroke="#000" stroke-width="1"/>
<line x1="547" y1="715.5" x2="555" y2="715.5" stroke="#000" stroke-width="1"/>
<text x="540.0" y="719.8" font-size="12" fill="#5ad43a" text-anchor="end">2.50</text>
<line x1="551.5" y1="711.5" x2="555" y2="711.5" stroke="#000" stroke-width="1"/>
<line x1="551.5" y1="708.5" x2="555" y2="708.5" stroke="#000" stroke-width="1"/>
<line x1="551.5" y1="704.5" x2="555" y2="704.5" stroke="#000" stroke-width="1"/>
<line x1="551.5" y1="701.5" x2="555" y2="701.5" stroke="#000" stroke-width="1"/>
<line x1="547" y1="697.5" x2="555" y2="697.5" stroke="#000" stroke-width="1"/>
<text x="540.0" y="701.8" font-size="12" fill="#5ad43a" text-anchor="end">3.00</text>
<text x="0" y="0" font-size="12" fill="#5ad43a" text-anchor="middle" transform="translate(500.5,805.6) rotate(-90)" textLength="90" lengthAdjust="spacingAndGlyphs">LamLabOK-f(500)</text>
<clipPath id="cpL"><rect x="556" y="696" width="1125" height="219"/></clipPath>
<g clip-path="url(#cpL)">
<rect x="624" y="805" width="90" height="111" fill="#effaea"/>
<rect x="758" y="805" width="53" height="111" fill="#effaea"/>
<rect x="825" y="805" width="80" height="111" fill="#effaea"/>
<rect x="907" y="805" width="9" height="111" fill="#effaea"/>
<rect x="920" y="805" width="83" height="111" fill="#effaea"/>
<rect x="1055" y="805" width="46" height="111" fill="#effaea"/>
<rect x="1104" y="805" width="12" height="111" fill="#effaea"/>
<rect x="1118" y="805" width="8" height="111" fill="#effaea"/>
<rect x="1128" y="805" width="61" height="111" fill="#effaea"/>
<rect x="1249" y="805" width="31" height="111" fill="#effaea"/>
<rect x="1347" y="805" width="29" height="111" fill="#effaea"/>
<rect x="1441" y="805" width="30" height="111" fill="#effaea"/>
<rect x="1554" y="805" width="7" height="111" fill="#effaea"/>
<rect x="1629" y="805" width="25" height="111" fill="#effaea"/>
<line x1="555" y1="804.5" x2="1682" y2="804.5" stroke="#000" stroke-width="1"/>
<polyline points="556.0,873.0 558.0,873.5 560.0,873.7 562.0,873.1 564.0,872.8 566.0,873.2 568.0,873.4 570.0,873.6 572.0,872.7 574.0,872.7 576.0,873.4 578.0,873.2 580.0,873.6 582.0,873.4 584.0,873.0 586.0,872.9 588.0,873.8 590.0,872.8 592.0,872.6 594.0,872.4 596.0,872.9 598.0,872.8 600.0,872.6 602.0,872.7 604.0,872.8 606.0,872.9 608.0,873.0 610.0,872.7 612.0,872.0 614.0,872.8 616.0,872.0 618.0,872.4 620.0,872.0 622.0,872.4 624.0,872.1 626.0,872.5 628.0,873.5 630.0,872.3 632.0,872.6 634.0,871.8 636.0,872.1 638.0,872.4 640.0,872.1 642.0,872.3 644.0,872.2 646.0,871.7 648.0,872.3 650.0,871.7 652.0,872.7 654.0,871.8 656.0,872.2 658.0,871.9 660.0,872.2 662.0,871.6 664.0,872.2 666.0,871.8 668.0,872.2 670.0,872.0 672.0,871.8 674.0,871.4 676.0,871.9 678.0,871.8 680.0,872.2 682.0,871.4 684.0,871.7 686.0,871.7 688.0,871.6 690.0,871.6 692.0,871.6 694.0,871.3 696.0,871.1 698.0,871.4 700.0,871.7 702.0,872.0 704.0,871.8 706.0,871.9 708.0,871.8 710.0,871.7 712.0,871.6 714.0,871.8 716.0,872.1 718.0,871.4 720.0,871.2 722.0,872.2 724.0,871.6 726.0,871.8 728.0,871.8 730.0,871.1 732.0,872.3 734.0,872.1 736.0,871.5 738.0,871.7 740.0,871.5 742.0,871.2 744.0,871.4 746.0,871.6 748.0,871.9 750.0,871.7 752.0,871.5 754.0,871.9 756.0,871.2 758.0,871.7 760.0,871.8 762.0,872.9 764.0,872.3 766.0,872.6 768.0,873.0 770.0,873.1 772.0,873.5 774.0,872.6 776.0,872.9 778.0,873.2 780.0,872.9 782.0,872.1 784.0,873.2 786.0,873.7 788.0,873.3 790.0,871.1 792.0,871.3 794.0,871.5 796.0,872.3 798.0,871.6 800.0,871.5 802.0,872.0 804.0,871.4 806.0,872.1 808.0,871.2 810.0,871.3 812.0,871.7 814.0,871.9 816.0,871.6 818.0,871.5 820.0,870.8 822.0,871.2 824.0,871.2 826.0,871.2 828.0,871.6 830.0,871.3 832.0,871.7 834.0,871.4 836.0,871.3 838.0,871.4 840.0,871.5 842.0,871.7 844.0,871.2 846.0,871.3 848.0,870.9 850.0,872.0 852.0,871.9 854.0,871.3 856.0,871.2 858.0,871.0 860.0,871.4 862.0,871.5 864.0,872.1 866.0,871.5 868.0,871.1 870.0,870.5 872.0,873.4 874.0,872.9 876.0,872.3 878.0,872.9 880.0,872.3 882.0,874.1 884.0,873.3 886.0,873.1 888.0,872.8 890.0,872.1 892.0,872.8 894.0,872.3 896.0,873.1 898.0,872.1 900.0,871.0 902.0,871.8 904.0,871.9 906.0,870.9 908.0,870.8 910.0,871.7 912.0,871.6 914.0,871.0 916.0,871.1 918.0,871.1 920.0,870.9 922.0,871.1 924.0,871.8 926.0,871.6 928.0,872.1 930.0,871.3 932.0,871.3 934.0,871.0 936.0,871.3 938.0,870.9 940.0,870.7 942.0,871.6 944.0,871.8 946.0,871.6 948.0,871.8 950.0,871.4 952.0,871.1 954.0,871.3 956.0,871.2 958.0,870.9 960.0,870.7 962.0,870.8 964.0,871.3 966.0,871.4 968.0,871.1 970.0,871.8 972.0,871.4 974.0,871.5 976.0,871.7 978.0,871.0 980.0,870.6 982.0,871.6 984.0,871.1 986.0,871.8 988.0,871.4 990.0,871.6 992.0,871.6 994.0,870.6 996.0,871.5 998.0,871.1 1000.0,871.0 1002.0,871.1 1004.0,871.3" stroke="#000" stroke-width="2.2" fill="none"/>
<line x1="1003" y1="870.5" x2="1681" y2="870.5" stroke="#000" stroke-width="1"/>
<polyline points="555.0,777.3 556.0,776.8 557.0,776.3 558.0,775.8 559.0,775.3 560.0,774.9 561.0,774.4 562.0,773.9 563.0,773.4 564.0,773.0 565.0,773.0 566.0,772.9 567.0,772.9 568.0,772.8 569.0,772.8 570.0,772.8 571.0,772.7 572.0,772.7 573.0,772.6 574.0,772.6 575.0,772.6 576.0,772.5 577.0,772.5 578.0,772.4 579.0,772.4 580.0,772.4 581.0,772.3 582.0,772.3 583.0,772.2 584.0,772.2 585.0,772.0 586.0,771.9 587.0,771.7 588.0,771.5 589.0,771.4 590.0,771.2 591.0,771.0 592.0,770.9 593.0,770.7 594.0,770.7 595.0,770.7 596.0,770.7 597.0,770.7 598.0,770.7 599.0,770.7 600.0,770.7 601.0,770.7 602.0,770.7 603.0,770.7 604.0,770.5 605.0,770.3 606.0,770.1 607.0,769.9 608.0,769.7 609.0,769.5 610.0,769.3 611.0,769.1 612.0,768.9 613.0,768.7 614.0,768.5 615.0,768.4 616.0,768.2 617.0,768.1 618.0,767.9 619.0,767.8 620.0,767.6 621.0,767.4 622.0,767.2 623.0,767.1 624.0,766.9 625.0,766.7 626.0,766.5 627.0,766.3 628.0,766.1 629.0,766.0 630.0,765.8 631.0,765.6 632.0,765.5 633.0,765.5 634.0,765.4 635.0,765.3 636.0,765.3 637.0,765.2 638.0,765.1 639.0,765.1 640.0,765.0 641.0,764.9 642.0,764.9 643.0,764.8 644.0,764.7 645.0,764.7 646.0,764.6 647.0,764.5 648.0,764.5 649.0,764.4 650.0,764.4 651.0,764.3 652.0,764.2 653.0,764.2 654.0,764.1 655.0,764.0 656.0,764.0 657.0,763.9 658.0,763.8 659.0,763.8 660.0,763.7 661.0,763.6 662.0,763.6 663.0,763.5 664.0,762.8 665.0,762.0 666.0,761.3 667.0,761.3 668.0,761.2 669.0,761.2 670.0,761.2 671.0,761.1 672.0,761.1 673.0,761.1 674.0,761.1 675.0,761.0 676.0,761.0 677.0,761.0 678.0,760.9 679.0,760.9 680.0,760.9 681.0,760.8 682.0,760.8 683.0,760.8 684.0,760.7 685.0,760.7 686.0,760.7 687.0,760.7 688.0,760.6 689.0,760.6 690.0,760.6 691.0,760.5 692.0,760.5 693.0,759.8 694.0,759.0 695.0,758.3 696.0,758.3 697.0,758.2 698.0,758.2 699.0,758.1 700.0,758.1 701.0,758.1 702.0,758.0 703.0,758.0 704.0,757.9 705.0,757.9 706.0,757.9 707.0,757.8 708.0,757.8 709.0,757.7 710.0,757.7 711.0,757.7 712.0,757.6 713.0,757.5 714.0,757.3 715.0,757.1 716.0,756.9 717.0,756.8 718.0,756.6 719.0,756.4 720.0,756.2 721.0,756.0 722.0,755.8 723.0,755.6 724.0,755.4 725.0,755.4 726.0,755.4 727.0,755.4 728.0,755.4 729.0,755.4 730.0,755.4 731.0,755.4 732.0,755.4 733.0,755.4 734.0,755.4 735.0,755.4 736.0,755.4 737.0,755.4 738.0,755.3 739.0,755.3 740.0,755.2 741.0,755.1 742.0,755.1 743.0,755.0 744.0,755.0 745.0,754.9 746.0,754.8 747.0,754.8 748.0,754.7 749.0,754.6 750.0,754.6 751.0,754.5 752.0,754.4 753.0,754.4 754.0,754.3 755.0,754.3 756.0,754.2 757.0,754.1 758.0,754.1 759.0,754.0 760.0,753.7 761.0,753.4 762.0,753.1 763.0,752.8 764.0,752.6 765.0,752.3 766.0,752.0 767.0,751.8 768.0,751.7 769.0,751.7 770.0,751.6 771.0,751.6 772.0,751.6 773.0,751.5 774.0,751.5 775.0,751.4 776.0,751.4 777.0,751.3 778.0,751.3 779.0,751.2 780.0,751.2 781.0,751.2 782.0,751.1 783.0,751.1 784.0,751.0 785.0,751.0 786.0,750.9 787.0,750.9 788.0,750.8 789.0,750.8 790.0,750.7 791.0,750.7 792.0,750.7 793.0,750.6 794.0,750.6 795.0,750.5 796.0,750.5 797.0,750.4 798.0,750.4 799.0,750.3 800.0,750.3 801.0,750.1 802.0,749.8 803.0,749.6 804.0,749.3 805.0,749.1 806.0,748.8 807.0,748.6 808.0,748.3 809.0,748.1 810.0,748.1 811.0,748.1 812.0,748.1 813.0,748.1 814.0,748.0 815.0,748.0 816.0,748.0 817.0,748.0 818.0,748.0 819.0,748.0 820.0,748.0 821.0,748.0 822.0,748.0 823.0,747.9 824.0,747.9 825.0,747.9 826.0,747.9 827.0,747.9 828.0,747.9 829.0,747.9 830.0,747.9 831.0,747.8 832.0,747.8 833.0,747.8 834.0,747.8 835.0,747.8 836.0,747.7 837.0,747.6 838.0,747.5 839.0,747.4 840.0,747.3 841.0,747.2 842.0,747.2 843.0,747.1 844.0,747.0 845.0,746.9 846.0,746.8 847.0,746.7 848.0,746.6 849.0,746.5 850.0,746.4 851.0,746.3 852.0,746.2 853.0,746.1 854.0,746.1 855.0,746.0 856.0,745.9 857.0,745.8 858.0,745.7 859.0,745.6 860.0,745.5 861.0,745.4 862.0,745.3 863.0,745.2 864.0,745.1 865.0,745.1 866.0,745.0 867.0,744.9 868.0,744.8 869.0,744.7 870.0,744.6 871.0,744.5 872.0,744.5 873.0,744.4 874.0,744.3 875.0,744.2 876.0,744.1 877.0,744.0 878.0,743.9 879.0,743.8 880.0,743.8 881.0,743.7 882.0,743.6 883.0,743.5 884.0,743.4 885.0,743.3 886.0,743.2 887.0,743.1 888.0,743.0 889.0,743.0 890.0,742.9 891.0,742.8 892.0,742.7 893.0,742.6 894.0,742.5 895.0,742.4 896.0,742.4 897.0,742.3 898.0,742.2 899.0,742.1 900.0,742.0 901.0,741.9 902.0,741.8 903.0,741.8 904.0,741.7 905.0,741.6 906.0,741.5 907.0,741.4 908.0,741.4 909.0,741.3 910.0,741.2 911.0,741.1 912.0,741.0 913.0,741.0 914.0,740.9 915.0,740.8 916.0,740.7 917.0,740.6 918.0,740.6 919.0,740.5 920.0,740.4 921.0,740.3 922.0,740.2 923.0,740.2 924.0,740.1 925.0,740.0 926.0,739.9 927.0,739.8 928.0,739.8 929.0,739.7 930.0,739.6 931.0,739.5 932.0,739.4 933.0,739.4 934.0,739.3 935.0,739.2 936.0,739.1 937.0,739.0 938.0,739.0 939.0,738.9 940.0,738.8 941.0,738.7 942.0,738.6 943.0,738.6 944.0,738.5 945.0,738.4 946.0,738.3 947.0,738.2 948.0,738.2 949.0,738.1 950.0,738.0 951.0,738.0 952.0,737.9 953.0,737.9 954.0,737.8 955.0,737.8 956.0,737.7 957.0,737.6 958.0,737.6 959.0,737.5 960.0,737.5 961.0,737.5 962.0,737.4 963.0,737.4 964.0,737.3 965.0,737.2 966.0,737.2 967.0,737.1 968.0,737.1 969.0,737.0 970.0,737.0 971.0,737.0 972.0,736.9 973.0,736.9 974.0,736.8 975.0,736.8 976.0,736.7 977.0,736.6 978.0,736.6 979.0,736.5 980.0,736.5 981.0,736.5 982.0,736.4 983.0,736.4 984.0,736.3 985.0,736.2 986.0,736.2 987.0,736.1 988.0,736.1 989.0,736.0 990.0,736.0 991.0,736.0 992.0,735.9 993.0,735.9 994.0,735.8 995.0,735.8 996.0,735.7 997.0,735.6 998.0,735.6 999.0,735.5 1000.0,735.5 1001.0,735.5 1002.0,735.5 1003.0,735.5 1004.0,735.5 1005.0,735.5 1006.0,735.5 1007.0,735.5 1008.0,735.5 1009.0,735.5 1010.0,735.5 1011.0,735.5 1012.0,735.5 1013.0,735.5 1014.0,735.5 1015.0,735.5 1016.0,735.5 1017.0,735.5 1018.0,735.5 1019.0,735.5 1020.0,735.5 1021.0,735.5 1022.0,735.5 1023.0,735.5 1024.0,735.5 1025.0,735.5 1026.0,735.5 1027.0,735.5 1028.0,735.5 1029.0,735.2 1030.0,735.0 1031.0,734.7 1032.0,734.4 1033.0,734.1 1034.0,733.9 1035.0,733.6 1036.0,733.3 1037.0,733.0 1038.0,732.8 1039.0,732.5 1040.0,732.5 1041.0,732.5 1042.0,732.4 1043.0,732.4 1044.0,732.4 1045.0,732.4 1046.0,732.4 1047.0,732.4 1048.0,732.3 1049.0,732.3 1050.0,732.3 1051.0,732.3 1052.0,732.3 1053.0,732.2 1054.0,732.2 1055.0,732.2 1056.0,732.2 1057.0,732.2 1058.0,732.2 1059.0,732.1 1060.0,732.1 1061.0,732.1 1062.0,732.1 1063.0,732.1 1064.0,732.0 1065.0,732.0 1066.0,732.0 1067.0,732.0 1068.0,732.0 1069.0,732.0 1070.0,731.9 1071.0,731.9 1072.0,731.9 1073.0,731.9 1074.0,731.9 1075.0,731.8 1076.0,731.8 1077.0,731.8 1078.0,731.8 1079.0,731.8 1080.0,731.8 1081.0,731.7 1082.0,731.7 1083.0,731.7 1084.0,731.7 1085.0,731.7 1086.0,731.6 1087.0,731.6 1088.0,731.6 1089.0,731.5 1090.0,731.4 1091.0,731.3 1092.0,731.1 1093.0,731.0 1094.0,730.9 1095.0,730.7 1096.0,730.6 1097.0,730.5 1098.0,730.3 1099.0,730.2 1100.0,730.1 1101.0,730.1 1102.0,730.0 1103.0,730.0 1104.0,729.9 1105.0,729.8 1106.0,729.8 1107.0,729.7 1108.0,729.7 1109.0,729.6 1110.0,729.5 1111.0,729.5 1112.0,729.4 1113.0,729.4 1114.0,729.3 1115.0,729.2 1116.0,729.2 1117.0,729.1 1118.0,729.1 1119.0,729.0 1120.0,728.9 1121.0,728.9 1122.0,728.9 1123.0,728.9 1124.0,728.8 1125.0,728.8 1126.0,728.8 1127.0,728.8 1128.0,728.8 1129.0,728.8 1130.0,728.7 1131.0,728.7 1132.0,728.7 1133.0,728.7 1134.0,728.7 1135.0,728.6 1136.0,728.6 1137.0,728.6 1138.0,728.6 1139.0,728.6 1140.0,728.6 1141.0,728.5 1142.0,728.5 1143.0,728.5 1144.0,728.5 1145.0,728.5 1146.0,728.5 1147.0,728.4 1148.0,728.4 1149.0,728.4 1150.0,728.4 1151.0,728.4 1152.0,728.3 1153.0,728.3 1154.0,728.3 1155.0,728.3 1156.0,728.3 1157.0,728.3 1158.0,728.2 1159.0,728.2 1160.0,728.2 1161.0,728.2 1162.0,728.2 1163.0,728.2 1164.0,728.1 1165.0,728.1 1166.0,728.1 1167.0,728.1 1168.0,728.1 1169.0,728.1 1170.0,728.0 1171.0,728.0 1172.0,728.0 1173.0,727.8 1174.0,727.7 1175.0,727.5 1176.0,727.3 1177.0,727.2 1178.0,727.0 1179.0,726.8 1180.0,726.7 1181.0,726.5 1182.0,726.4 1183.0,726.2 1184.0,726.0 1185.0,725.9 1186.0,725.7 1187.0,725.5 1188.0,726.1 1189.0,729.5 1190.0,731.4 1191.0,730.8 1192.0,730.2 1193.0,729.6 1194.0,729.0 1195.0,728.4 1196.0,727.8 1197.0,727.2 1198.0,726.6 1199.0,726.0 1200.0,725.4 1201.0,725.4 1202.0,725.4 1203.0,725.4 1204.0,725.3 1205.0,725.3 1206.0,725.3 1207.0,725.3 1208.0,725.3 1209.0,725.3 1210.0,725.3 1211.0,725.2 1212.0,725.2 1213.0,725.2 1214.0,725.2 1215.0,725.2 1216.0,725.2 1217.0,725.1 1218.0,725.1 1219.0,725.1 1220.0,725.1 1221.0,725.1 1222.0,725.1 1223.0,725.1 1224.0,725.0 1225.0,725.0 1226.0,725.0 1227.0,725.0 1228.0,725.0 1229.0,725.0 1230.0,725.0 1231.0,724.9 1232.0,724.9 1233.0,724.9 1234.0,724.9 1235.0,724.9 1236.0,724.9 1237.0,724.8 1238.0,724.8 1239.0,724.8 1240.0,724.8 1241.0,724.8 1242.0,724.8 1243.0,724.8 1244.0,724.7 1245.0,724.7 1246.0,724.7 1247.0,724.7 1248.0,724.7 1249.0,724.7 1250.0,724.7 1251.0,724.6 1252.0,724.6 1253.0,724.6 1254.0,724.6 1255.0,724.6 1256.0,724.6 1257.0,724.6 1258.0,724.5 1259.0,724.5 1260.0,724.5 1261.0,724.4 1262.0,724.3 1263.0,724.2 1264.0,724.1 1265.0,724.0 1266.0,723.9 1267.0,723.8 1268.0,723.7 1269.0,723.6 1270.0,723.5 1271.0,723.4 1272.0,723.3 1273.0,723.2 1274.0,723.0 1275.0,722.9 1276.0,722.8 1277.0,722.7 1278.0,722.6 1279.0,722.5 1280.0,722.4 1281.0,722.4 1282.0,722.4 1283.0,722.4 1284.0,722.4 1285.0,722.4 1286.0,722.4 1287.0,722.4 1288.0,722.4 1289.0,722.4 1290.0,722.3 1291.0,722.3 1292.0,722.3 1293.0,722.3 1294.0,722.3 1295.0,722.3 1296.0,722.3 1297.0,722.3 1298.0,722.3 1299.0,722.3 1300.0,722.3 1301.0,722.3 1302.0,722.3 1303.0,722.3 1304.0,722.3 1305.0,722.3 1306.0,722.3 1307.0,722.3 1308.0,722.3 1309.0,722.2 1310.0,722.2 1311.0,722.2 1312.0,722.2 1313.0,722.2 1314.0,722.2 1315.0,722.2 1316.0,722.2 1317.0,722.2 1318.0,722.2 1319.0,722.2 1320.0,722.2 1321.0,722.2 1322.0,722.2 1323.0,722.2 1324.0,722.2 1325.0,722.2 1326.0,722.2 1327.0,722.2 1328.0,722.2 1329.0,722.1 1330.0,722.1 1331.0,722.1 1332.0,722.1 1333.0,722.1 1334.0,722.1 1335.0,722.1 1336.0,722.1 1337.0,722.1 1338.0,722.1 1339.0,722.1 1340.0,722.1 1341.0,722.1 1342.0,722.1 1343.0,722.1 1344.0,722.1 1345.0,722.1 1346.0,722.1 1347.0,722.1 1348.0,722.0 1349.0,722.0 1350.0,722.0 1351.0,722.0 1352.0,722.0 1353.0,722.0 1354.0,722.0 1355.0,722.0 1356.0,722.0 1357.0,722.0 1358.0,722.0 1359.0,722.0 1360.0,722.0 1361.0,722.0 1362.0,722.0 1363.0,722.0 1364.0,722.0 1365.0,722.0 1366.0,722.0 1367.0,721.9 1368.0,721.9 1369.0,721.9 1370.0,721.9 1371.0,721.9 1372.0,721.9 1373.0,721.9 1374.0,721.9 1375.0,721.9 1376.0,721.9 1377.0,721.8 1378.0,721.5 1379.0,721.2 1380.0,720.9 1381.0,720.7 1382.0,720.4 1383.0,720.4 1384.0,720.3 1385.0,720.3 1386.0,720.2 1387.0,720.2 1388.0,720.1 1389.0,720.1 1390.0,720.0 1391.0,720.0 1392.0,720.0 1393.0,719.9 1394.0,719.9 1395.0,719.8 1396.0,719.8 1397.0,719.7 1398.0,719.7 1399.0,719.6 1400.0,719.6 1401.0,719.5 1402.0,719.5 1403.0,719.5 1404.0,719.4 1405.0,719.4 1406.0,719.3 1407.0,719.3 1408.0,719.2 1409.0,719.2 1410.0,719.1 1411.0,719.1 1412.0,719.1 1413.0,719.0 1414.0,719.0 1415.0,718.9 1416.0,718.9 1417.0,718.8 1418.0,718.8 1419.0,718.7 1420.0,718.7 1421.0,718.6 1422.0,718.6 1423.0,718.6 1424.0,718.5 1425.0,718.5 1426.0,718.4 1427.0,718.4 1428.0,718.3 1429.0,718.3 1430.0,718.2 1431.0,718.2 1432.0,718.2 1433.0,718.2 1434.0,718.2 1435.0,718.2 1436.0,718.2 1437.0,718.2 1438.0,718.2 1439.0,718.2 1440.0,718.2 1441.0,718.2 1442.0,718.2 1443.0,718.2 1444.0,718.2 1445.0,718.2 1446.0,718.2 1447.0,718.2 1448.0,718.2 1449.0,718.2 1450.0,718.2 1451.0,718.2 1452.0,718.2 1453.0,718.2 1454.0,718.2 1455.0,718.2 1456.0,718.2 1457.0,718.2 1458.0,718.2 1459.0,718.2 1460.0,718.2 1461.0,718.2 1462.0,718.2 1463.0,718.2 1464.0,718.2 1465.0,718.2 1466.0,718.2 1467.0,718.2 1468.0,718.2 1469.0,718.2 1470.0,718.2 1471.0,718.2 1472.0,717.9 1473.0,717.5 1474.0,717.1 1475.0,716.8 1476.0,716.8 1477.0,716.8 1478.0,716.8 1479.0,716.8 1480.0,716.8 1481.0,716.8 1482.0,716.8 1483.0,716.8 1484.0,716.9 1485.0,716.9 1486.0,716.9 1487.0,716.9 1488.0,716.9 1489.0,716.9 1490.0,716.9 1491.0,716.9 1492.0,716.9 1493.0,716.9 1494.0,716.9 1495.0,716.9 1496.0,716.9 1497.0,716.9 1498.0,716.9 1499.0,716.9 1500.0,716.9 1501.0,717.0 1502.0,717.0 1503.0,717.0 1504.0,717.0 1505.0,717.0 1506.0,717.0 1507.0,717.0 1508.0,717.0 1509.0,717.0 1510.0,717.0 1511.0,717.0 1512.0,717.0 1513.0,717.0 1514.0,717.0 1515.0,717.0 1516.0,717.0 1517.0,717.0 1518.0,717.1 1519.0,717.1 1520.0,717.1 1521.0,717.1 1522.0,717.1 1523.0,717.1 1524.0,717.1 1525.0,717.1 1526.0,717.1 1527.0,717.1 1528.0,717.1 1529.0,717.1 1530.0,717.1 1531.0,717.1 1532.0,717.1 1533.0,717.1 1534.0,717.2 1535.0,717.2 1536.0,717.2 1537.0,717.2 1538.0,717.2 1539.0,717.2 1540.0,717.2 1541.0,717.2 1542.0,717.2 1543.0,717.2 1544.0,717.2 1545.0,717.2 1546.0,717.2 1547.0,717.2 1548.0,717.2 1549.0,717.2 1550.0,717.2 1551.0,717.3 1552.0,717.3 1553.0,717.3 1554.0,717.3 1555.0,717.3 1556.0,717.3 1557.0,717.3 1558.0,717.3 1559.0,717.3 1560.0,719.1 1561.0,720.8 1562.0,721.4 1563.0,720.2 1564.0,719.0 1565.0,718.5 1566.0,718.3 1567.0,718.2 1568.0,718.0 1569.0,717.9 1570.0,717.7 1571.0,717.5 1572.0,717.4 1573.0,717.2 1574.0,717.1 1575.0,716.9 1576.0,716.7 1577.0,716.6 1578.0,716.4 1579.0,716.3 1580.0,716.1 1581.0,716.0 1582.0,716.0 1583.0,716.0 1584.0,715.9 1585.0,715.9 1586.0,715.9 1587.0,715.9 1588.0,715.8 1589.0,715.8 1590.0,715.8 1591.0,715.8 1592.0,715.8 1593.0,715.7 1594.0,715.7 1595.0,715.7 1596.0,715.7 1597.0,715.7 1598.0,715.6 1599.0,715.6 1600.0,715.6 1601.0,715.6 1602.0,715.6 1603.0,715.5 1604.0,715.5 1605.0,715.5 1606.0,715.5 1607.0,715.5 1608.0,715.5 1609.0,715.5 1610.0,715.5 1611.0,715.5 1612.0,715.5 1613.0,715.5 1614.0,715.5 1615.0,715.5 1616.0,715.5 1617.0,715.5 1618.0,715.5 1619.0,715.5 1620.0,715.5 1621.0,715.5 1622.0,715.5 1623.0,715.5 1624.0,715.5 1625.0,715.5 1626.0,715.5 1627.0,715.5 1628.0,715.5 1629.0,715.5 1630.0,715.5 1631.0,715.5 1632.0,715.5 1633.0,715.5 1634.0,715.5 1635.0,715.5 1636.0,715.5 1637.0,715.5 1638.0,715.5 1639.0,715.5 1640.0,715.5 1641.0,715.5 1642.0,715.5 1643.0,715.5 1644.0,715.5 1645.0,715.5 1646.0,715.5 1647.0,715.5 1648.0,715.5 1649.0,715.5 1650.0,715.5 1651.0,715.5 1652.0,715.5 1653.0,715.5 1654.0,715.5 1655.0,715.5 1656.0,715.5 1657.0,715.5 1658.0,715.5 1659.0,715.5 1660.0,715.5 1661.0,715.5 1662.0,715.5 1663.0,715.5 1664.0,715.5 1665.0,715.5 1666.0,715.5 1667.0,715.5 1668.0,715.5 1669.0,715.5 1670.0,715.5 1671.0,715.5 1672.0,715.5 1673.0,715.5 1674.0,715.5 1675.0,715.5 1676.0,715.8 1677.0,716.6 1678.0,717.3 1679.0,718.1 1680.0,718.2 1681.0,718.2 1682.0,718.2" stroke="#c4c4c4" stroke-width="1.5" fill="none"/>
<line x1="555" y1="772.2" x2="1681" y2="772.2" stroke="#777777" stroke-width="1.8"/>
<path d="M557.5,770.6V772.7M562.5,771.2V773.2M567.5,771.4V772.6M577.5,771.0V773.2M585.5,770.6V773.1M588.5,770.5V772.9M602.5,770.5V772.6M606.5,771.3V773.0M613.5,771.3V773.2M618.5,770.8V773.0M622.5,770.6V773.0M632.5,771.2V772.8M642.5,770.6V773.3M649.5,771.4V773.3M655.5,770.4V773.0M664.5,770.9V772.7M673.5,771.0V773.0M686.5,770.9V772.5M697.5,770.4V773.0M707.5,771.1V773.2M720.5,770.9V772.9M728.5,770.8V772.6M742.5,771.0V772.9M754.5,770.5V773.3M764.5,771.3V772.9M772.5,771.4V772.9M776.5,770.6V773.3M779.5,771.0V772.8M786.5,771.4V773.1M798.5,770.5V772.6M801.5,770.7V772.5M814.5,771.4V772.7M828.5,770.8V772.8M835.5,771.2V773.1M847.5,771.5V773.2M855.5,771.5V773.0M862.5,771.3V772.7M875.5,771.0V772.9M887.5,771.1V772.9M890.5,771.0V772.6M903.5,771.4V773.1M908.5,770.8V773.0M917.5,770.6V773.1M927.5,770.6V772.7M933.5,770.7V773.2M936.5,770.5V772.8M943.5,771.2V773.3M949.5,771.3V773.4M954.5,770.5V772.6M957.5,771.3V773.2M970.5,771.3V772.6M974.5,770.6V772.9M984.5,770.7V772.6M988.5,771.1V773.1M1001.5,771.6V772.7M1012.5,770.8V773.3M1025.5,770.4V772.6M1038.5,771.0V773.2M1046.5,771.0V773.1M1050.5,771.4V772.6M1063.5,771.5V772.5M1069.5,770.9V773.0M1075.5,770.9V772.6M1085.5,771.4V772.7M1092.5,770.6V773.4M1097.5,770.5V772.6M1111.5,771.5V773.4M1114.5,771.0V773.2M1124.5,771.2V772.9M1135.5,771.0V772.9M1149.5,770.9V772.5M1152.5,770.8V773.3M1157.5,771.4V772.9M1163.5,770.7V772.9M1170.5,771.4V772.6M1178.5,771.0V772.5M1189.5,770.5V773.2M1203.5,770.8V773.3M1214.5,770.8V772.9M1225.5,770.9V773.0M1237.5,770.4V773.2M1242.5,771.3V773.3M1251.5,770.7V773.2M1265.5,770.6V772.9M1271.5,770.5V773.3M1275.5,770.8V773.2M1284.5,770.7V772.9M1298.5,770.7V772.6M1307.5,771.2V772.9M1312.5,771.6V772.8M1322.5,770.8V773.1M1332.5,771.3V773.4M1338.5,770.8V772.8M1351.5,770.8V773.0M1354.5,771.0V772.9M1363.5,770.4V773.1M1374.5,770.8V773.2M1386.5,770.4V772.5M1399.5,770.9V773.2M1410.5,771.3V772.9M1418.5,771.5V772.7M1428.5,771.1V772.6M1436.5,771.3V773.3M1449.5,770.9V773.0M1455.5,770.4V773.0M1459.5,770.4V773.1M1473.5,770.6V772.6M1486.5,770.9V773.2M1500.5,771.5V773.3M1504.5,771.4V772.9M1510.5,771.4V772.9M1516.5,770.9V772.6M1525.5,770.5V772.9M1529.5,771.0V773.0M1536.5,771.2V772.8M1547.5,770.8V773.0M1555.5,771.3V773.1M1562.5,771.2V772.5M1576.5,771.3V772.5M1579.5,771.4V773.2M1587.5,771.1V773.3M1598.5,770.7V772.5M1602.5,770.4V773.4M1605.5,771.5V773.3M1615.5,771.1V772.9M1623.5,770.4V772.7M1634.5,771.0V773.3M1643.5,770.7V772.9M1650.5,770.4V773.2M1660.5,770.9V772.6M1663.5,770.9V772.9M1669.5,771.4V772.5M1673.5,771.0V772.6" stroke="#7a7a7a" stroke-width="1" fill="none"/>
<line x1="555" y1="788.4" x2="1681" y2="788.4" stroke="#0a1e9c" stroke-width="2"/>
<path d="M557.5,786.5V789.1M568.5,786.7V789.9M574.5,787.1V789.4M588.5,786.6V789.8M598.5,787.0V789.1M609.5,787.5V789.8M622.5,787.5V788.8M630.5,786.8V789.3M644.5,786.6V789.1M657.5,786.5V788.8M671.5,787.3V789.5M681.5,787.5V789.1M690.5,786.6V789.5M706.5,787.2V788.9M721.5,787.1V789.6M733.5,787.1V788.8M750.5,786.6V789.4M756.5,786.3V789.8M764.5,786.3V789.2M779.5,786.5V789.1M785.5,787.2V789.2M792.5,786.3V789.8M803.5,787.3V789.1M808.5,787.1V789.1M820.5,787.0V789.2M838.5,787.3V789.4M846.5,786.5V789.3M862.5,786.4V789.4M874.5,787.4V789.6M887.5,786.4V789.0M904.5,787.6V789.3M913.5,786.8V789.4M921.5,786.2V789.5M929.5,786.5V788.8M942.5,786.8V789.6M956.5,787.5V788.8M971.5,786.6V789.8M984.5,787.5V789.5M999.5,787.4V789.6M1012.5,786.7V789.0M1019.5,787.3V789.6M1033.5,786.9V789.6M1041.5,787.0V789.1M1057.5,786.2V789.5M1064.5,786.9V789.3M1071.5,786.6V789.5M1078.5,786.3V789.2M1090.5,786.4V789.5M1104.5,786.4V789.7M1122.5,786.4V789.8M1129.5,786.3V789.5M1147.5,786.9V789.6M1161.5,786.5V789.2M1165.5,787.0V788.9M1179.5,786.6V789.9M1183.5,787.1V788.9M1187.5,787.3V789.2M1195.5,787.2V789.9M1203.5,787.5V789.1M1213.5,787.4V789.5M1217.5,786.5V788.9M1230.5,787.5V789.3M1234.5,786.8V789.8M1239.5,787.5V788.8M1246.5,787.3V789.0M1258.5,787.3V789.6M1266.5,786.8V789.0M1271.5,787.3V789.0M1287.5,787.4V789.6M1292.5,787.2V789.4M1310.5,786.5V789.3M1324.5,787.2V789.8M1330.5,786.3V789.1M1342.5,786.8V789.8M1349.5,786.9V789.0M1363.5,787.5V789.8M1372.5,786.5V789.2M1383.5,786.9V789.3M1394.5,787.2V789.9M1403.5,786.7V789.0M1410.5,787.6V789.3M1419.5,787.1V789.7M1428.5,786.6V789.4M1439.5,787.4V788.9M1454.5,787.1V789.0M1460.5,786.4V789.3M1477.5,786.7V789.9M1494.5,787.2V789.3M1499.5,787.4V789.6M1515.5,787.6V789.7M1520.5,786.4V789.7M1531.5,787.5V789.0M1547.5,786.6V788.8M1564.5,786.9V789.3M1577.5,786.3V789.4M1594.5,786.4V789.1M1610.5,786.5V789.2M1626.5,786.3V788.8M1633.5,786.4V789.0M1644.5,786.8V789.3M1654.5,787.4V789.7M1669.5,787.2V789.1M1677.5,787.5V789.1" stroke="#0a1e9c" stroke-width="1" fill="none"/>
<path d="M556.0,765.3V772.4M557.0,765.3V772.4M558.0,761.7V772.4M559.0,761.7V772.4M560.0,758.1V768.8M561.0,758.1V772.4M562.0,758.1V772.4M563.0,758.1V772.4M564.0,758.1V776.0M566.0,758.1V783.2M567.0,758.1V783.2M569.0,747.3V776.0M570.0,740.1V772.4M572.0,743.7V772.4M573.0,747.3V776.0M574.0,750.9V779.6M575.0,754.5V779.6M576.0,754.5V783.2M577.0,754.5V779.6M579.0,750.9V776.0M580.0,750.9V772.4M581.0,750.9V768.8M582.0,750.9V772.4M583.0,754.5V772.4M584.0,754.5V772.4M585.0,758.1V776.0M586.0,758.1V776.0M587.0,761.7V776.0M588.0,758.1V772.4M589.0,754.5V772.4M590.0,754.5V772.4M591.0,750.9V772.4M592.0,750.9V772.4M594.0,750.9V772.4M595.0,750.9V768.8M596.0,750.9V768.8M597.0,750.9V768.8M599.0,750.9V768.8M601.0,736.5V772.4M602.0,743.7V768.8M603.0,750.9V768.8M604.0,750.9V768.8M605.0,750.9V768.8M606.0,750.9V765.3M607.0,750.9V765.3M608.0,750.9V761.7M609.0,750.9V761.7M610.0,750.9V761.7M612.0,747.3V768.8M613.0,747.3V768.8M614.0,747.3V768.8M615.0,747.3V768.8M616.0,743.7V772.4M618.0,740.1V776.0M619.0,740.1V783.2M620.0,743.7V786.8M621.0,743.7V790.4M622.0,743.7V790.4M623.0,754.5V794.0M624.0,765.3V794.0M624.5,786.8V801.2M625.5,786.8V801.2M626.5,786.8V801.2M627.5,786.8V801.2M629.5,786.8V801.2M630.5,783.2V804.8M631.5,783.2V804.8M632.5,783.2V804.8M634.5,783.2V804.8M635.5,783.2V804.8M636.5,783.2V804.8M637.5,779.6V804.8M638.5,779.6V804.8M639.5,779.6V804.8M640.5,779.6V804.8M641.5,779.6V804.8M642.5,779.6V804.8M643.5,779.6V804.8M644.5,779.6V804.8M645.5,779.6V808.4M646.5,779.6V808.4M647.5,779.6V808.4M648.5,779.6V808.4M649.5,779.6V808.4M650.5,779.6V808.4M651.5,779.6V808.4M652.5,783.2V808.4M653.5,786.8V808.4M654.5,790.4V808.4M655.5,790.4V808.4M656.5,794.0V808.4M657.5,790.4V808.4M658.5,790.4V808.4M659.5,790.4V808.4M660.5,790.4V808.4M661.5,790.4V808.4M662.5,790.4V804.8M663.5,790.4V804.8M664.5,790.4V804.8M665.5,794.0V804.8M666.5,794.0V804.8M667.5,794.0V804.8M668.5,794.0V804.8M669.5,794.0V804.8M670.5,794.0V804.8M671.5,794.0V804.8M672.5,790.4V804.8M673.5,790.4V804.8M674.5,786.8V804.8M675.5,786.8V801.2M676.5,783.2V804.8M677.5,783.2V804.8M678.5,783.2V804.8M679.5,783.2V804.8M680.5,783.2V804.8M681.5,783.2V808.4M682.5,786.8V808.4M683.5,786.8V808.4M684.5,786.8V808.4M685.5,786.8V808.4M686.5,786.8V808.4M687.5,790.4V808.4M688.5,790.4V808.4M689.5,790.4V808.4M690.5,790.4V812.0M692.5,790.4V812.0M693.5,790.4V812.0M694.5,790.4V812.0M695.5,790.4V812.0M696.5,790.4V812.0M697.5,790.4V812.0M698.5,786.8V812.0M699.5,786.8V812.0M700.5,786.8V812.0M701.5,786.8V812.0M702.5,786.8V812.0M703.5,786.8V812.0M704.5,786.8V812.0M705.5,786.8V812.0M706.5,786.8V812.0M707.5,786.8V812.0M708.5,786.8V812.0M709.5,786.8V812.0M710.5,786.8V812.0M711.5,786.8V812.0M719.5,693.4V700.5M720.5,693.4V704.1M721.5,693.4V707.7M722.5,693.4V707.7M723.5,693.4V711.3M724.5,696.9V711.3M725.5,696.9V714.9M726.5,700.5V718.5M727.5,700.5V722.1M728.5,700.5V725.7M730.5,704.1V732.9M731.5,707.7V736.5M732.5,707.7V743.7M733.5,711.3V747.3M734.5,711.3V750.9M735.5,714.9V754.5M736.5,718.5V754.5M737.5,725.7V758.1M738.5,732.9V761.7M739.5,736.5V761.7M740.5,740.1V765.3M741.5,743.7V761.7M742.5,747.3V765.3M743.5,747.3V765.3M744.5,750.9V768.8M745.5,750.9V768.8M746.5,750.9V768.8M747.5,750.9V772.4M748.5,747.3V772.4M749.5,747.3V772.4M750.5,747.3V772.4M751.5,743.7V772.4M753.5,743.7V776.0M754.5,736.5V779.6M755.5,740.1V779.6M756.5,743.7V779.6M757.5,747.3V779.6M758.5,750.9V779.6M759.5,750.9V783.2M761.5,758.1V783.2M762.5,761.7V783.2M763.5,761.7V786.8M765.5,768.8V794.0M766.5,772.4V794.0M767.5,776.0V794.0M768.5,776.0V794.0M769.5,776.0V794.0M770.5,779.6V794.0M771.5,783.2V794.0M772.5,783.2V794.0M774.0,790.4V797.6M775.0,790.4V801.2M776.0,790.4V801.2M777.0,790.4V801.2M778.0,790.4V801.2M779.0,790.4V804.8M780.0,790.4V804.8M781.0,786.8V804.8M782.0,783.2V808.4M783.0,783.2V808.4M784.0,783.2V812.0M785.0,783.2V812.0M786.0,779.6V812.0M787.0,779.6V812.0M788.0,779.6V812.0M789.0,779.6V812.0M790.0,779.6V812.0M791.0,779.6V812.0M792.0,779.6V812.0M793.0,779.6V815.6M794.0,779.6V815.6M795.0,779.6V819.2M796.0,779.6V819.2M797.0,783.2V812.0M798.0,783.2V812.0M799.0,786.8V812.0M800.0,786.8V812.0M801.0,783.2V815.6M802.0,783.2V815.6M803.0,783.2V815.6M804.0,786.8V815.6M805.0,786.8V819.2M806.0,786.8V815.6M807.0,786.8V815.6M808.0,786.8V815.6M809.0,786.8V815.6M810.0,790.4V815.6M811.0,696.9V711.3M812.0,704.1V718.5M813.0,711.3V725.7M814.0,722.1V732.9M815.0,729.3V740.1M816.0,736.5V747.3M817.0,747.3V758.1M818.0,750.9V761.7M819.0,754.5V765.3M820.0,758.1V768.8M822.0,765.3V779.6M823.0,768.8V783.2M824.0,772.4V786.8M825.0,776.0V790.4M826.0,776.0V790.4M827.0,776.0V797.6M828.0,776.0V797.6M829.0,776.0V801.2M831.0,776.0V801.2M832.0,776.0V804.8M833.0,776.0V804.8M834.0,772.4V808.4M835.0,772.4V808.4M835.0,776.0V801.2M836.0,776.0V801.2M837.0,772.4V801.2M838.0,772.4V804.8M839.0,772.4V804.8M840.0,772.4V804.8M841.0,772.4V804.8M842.0,772.4V804.8M843.0,768.8V804.8M844.0,772.4V808.4M846.0,768.8V808.4M847.0,768.8V812.0M848.0,768.8V812.0M849.0,768.8V812.0M850.0,772.4V812.0M851.0,772.4V812.0M852.0,772.4V812.0M853.0,772.4V812.0M854.0,772.4V812.0M855.0,772.4V812.0M857.0,776.0V812.0M858.0,779.6V815.6M861.0,783.2V812.0M863.0,786.8V812.0M864.0,786.8V815.6M866.0,786.8V815.6M867.0,786.8V815.6M868.0,786.8V815.6M869.0,786.8V815.6M870.0,786.8V815.6M871.0,786.8V812.0M872.0,786.8V815.6M873.0,783.2V815.6M874.0,783.2V815.6M875.0,783.2V812.0M876.0,783.2V812.0M878.0,783.2V812.0M879.0,783.2V812.0M881.0,783.2V812.0M882.0,783.2V812.0M883.0,783.2V812.0M884.0,783.2V812.0M885.0,783.2V812.0M886.0,783.2V812.0M887.0,783.2V808.4M888.0,783.2V808.4M889.0,783.2V808.4M890.0,783.2V808.4M892.0,783.2V808.4M893.0,783.2V808.4M894.0,783.2V808.4M895.0,786.8V812.0M896.0,786.8V812.0M897.0,786.8V812.0M898.0,786.8V812.0M899.0,786.8V812.0M900.0,786.8V812.0M901.0,786.8V812.0M902.0,786.8V812.0M903.0,786.8V812.0M904.0,790.4V812.0M905.0,790.4V812.0M906.0,790.4V812.0M907.0,790.4V812.0M908.0,786.8V812.0M909.0,790.4V812.0M910.0,790.4V812.0M911.0,790.4V815.6M912.0,786.8V815.6M913.0,786.8V815.6M914.0,786.8V815.6M915.0,786.8V815.6M916.0,786.8V812.0M918.0,786.8V808.4M919.0,783.2V808.4M920.0,779.6V804.8M922.0,779.6V801.2M923.0,779.6V801.2M924.0,779.6V801.2M925.0,779.6V801.2M926.0,779.6V801.2M927.0,779.6V808.4M928.0,779.6V808.4M929.0,783.2V808.4M930.0,783.2V808.4M931.0,783.2V808.4M932.0,783.2V808.4M933.0,783.2V808.4M935.0,783.2V808.4M937.0,786.8V804.8M938.0,786.8V808.4M939.0,786.8V808.4M940.0,786.8V808.4M941.0,786.8V808.4M942.0,786.8V812.0M943.0,794.0V815.6M944.0,794.0V819.2M946.0,790.4V815.6M949.0,794.0V815.6M950.0,794.0V815.6M952.0,794.0V815.6M953.0,794.0V815.6M954.0,794.0V815.6M955.0,790.4V815.6M956.0,794.0V815.6M957.0,794.0V815.6M958.0,794.0V815.6M959.0,794.0V815.6M960.0,794.0V815.6M961.0,797.6V815.6M962.0,797.6V819.2M963.0,797.6V819.2M964.0,801.2V819.2M965.0,801.2V819.2M966.0,804.8V822.8M967.0,804.8V822.8M968.0,804.8V822.8M970.0,808.4V822.8M971.0,808.4V822.8M973.0,804.8V826.4M974.0,804.8V826.4M975.0,808.4V826.4M976.0,808.4V826.4M977.0,808.4V826.4M978.0,808.4V826.4M979.0,808.4V826.4M981.0,808.4V826.4M982.0,808.4V826.4M983.0,808.4V826.4M984.0,808.4V826.4M986.0,808.4V826.4M987.0,808.4V826.4M988.0,808.4V826.4M990.0,804.8V826.4M991.0,804.8V826.4M992.0,804.8V826.4M994.0,804.8V826.4M995.0,804.8V826.4M996.0,804.8V826.4M998.0,804.8V830.0M999.0,804.8V830.0M1000.0,804.8V830.0M1001.0,804.8V830.0M1002.0,804.8V830.0M1019.5,693.4V711.3M1020.5,696.9V711.3M1021.5,700.5V714.9M1022.5,704.1V718.5M1023.5,707.7V722.1M1024.5,711.3V725.7M1025.5,714.9V729.3M1026.5,718.5V729.3M1027.5,722.1V732.9M1028.5,725.7V736.5M1030.5,732.9V740.1M1031.5,732.9V743.7M1032.5,736.5V747.3M1033.5,736.5V750.9M1034.5,740.1V754.5M1035.5,743.7V758.1M1036.5,747.3V758.1M1037.5,747.3V761.7M1038.5,750.9V765.3M1039.5,747.3V768.8M1040.5,747.3V768.8M1041.5,750.9V768.8M1042.5,750.9V768.8M1043.5,750.9V772.4M1044.5,750.9V772.4M1045.5,750.9V772.4M1046.5,750.9V772.4M1048.5,754.5V776.0M1049.5,758.1V776.0M1050.5,758.1V776.0M1051.5,761.7V779.6M1052.5,765.3V779.6M1053.5,768.8V779.6M1054.5,768.8V783.2M1055.5,772.4V783.2M1056.5,776.0V786.8M1057.5,779.6V786.8M1058.5,779.6V790.4M1059.5,779.6V790.4M1060.5,783.2V790.4M1061.5,783.2V790.4M1062.5,783.2V790.4M1063.5,783.2V794.0M1064.5,783.2V794.0M1065.5,786.8V794.0M1066.5,783.2V794.0M1067.5,783.2V794.0M1068.5,786.8V794.0M1069.5,786.8V794.0M1070.5,786.8V797.6M1071.5,786.8V797.6M1072.5,786.8V797.6M1073.5,786.8V797.6M1074.5,786.8V801.2M1075.5,786.8V801.2M1076.5,786.8V801.2M1077.5,786.8V801.2M1078.5,786.8V804.8M1079.5,786.8V804.8M1080.5,790.4V804.8M1081.5,790.4V804.8M1082.5,790.4V804.8M1083.5,790.4V808.4M1084.5,794.0V804.8M1085.5,794.0V804.8M1086.5,794.0V808.4M1087.5,794.0V808.4M1088.5,794.0V808.4M1089.5,794.0V808.4M1090.5,794.0V808.4M1091.5,797.6V808.4M1092.5,797.6V808.4M1093.5,794.0V812.0M1094.5,794.0V812.0M1095.5,797.6V812.0M1096.5,797.6V812.0M1097.5,794.0V812.0M1098.5,794.0V812.0M1099.5,794.0V815.6M1100.0,797.6V808.4M1101.0,797.6V808.4M1102.0,794.0V808.4M1103.0,794.0V808.4M1105.0,794.0V808.4M1107.0,790.4V812.0M1108.0,790.4V812.0M1109.0,790.4V812.0M1110.0,790.4V812.0M1111.0,790.4V812.0M1112.0,790.4V815.6M1113.0,790.4V815.6M1114.0,786.8V797.6M1115.0,786.8V797.6M1116.0,786.8V797.6M1117.0,786.8V797.6M1118.0,786.8V797.6M1119.0,786.8V797.6M1120.0,786.8V801.2M1121.0,786.8V801.2M1122.0,786.8V801.2M1123.0,786.8V801.2M1124.0,786.8V801.2M1125.0,786.8V801.2M1126.0,786.8V801.2M1127.0,786.8V801.2M1128.0,786.8V804.8M1129.0,786.8V804.8M1130.0,794.0V804.8M1131.0,794.0V804.8M1132.0,794.0V804.8M1133.0,794.0V804.8M1134.0,790.4V801.2M1136.0,790.4V801.2M1137.0,790.4V801.2M1139.0,790.4V801.2M1140.0,790.4V801.2M1141.0,790.4V801.2M1143.0,790.4V801.2M1144.0,790.4V801.2M1145.0,790.4V804.8M1147.0,790.4V804.8M1148.0,790.4V801.2M1149.0,790.4V801.2M1150.0,790.4V801.2M1151.0,790.4V801.2M1152.0,790.4V801.2M1153.0,790.4V801.2M1154.0,776.0V808.4M1155.0,776.0V808.4M1156.0,776.0V808.4M1157.0,776.0V812.0M1158.0,776.0V812.0M1159.0,779.6V812.0M1160.0,779.6V812.0M1161.0,779.6V812.0M1162.0,779.6V812.0M1164.0,779.6V812.0M1166.0,779.6V812.0M1167.0,779.6V812.0M1168.0,779.6V812.0M1169.0,779.6V812.0M1171.0,783.2V812.0M1172.0,783.2V808.4M1173.0,790.4V804.8M1174.0,790.4V804.8M1175.0,790.4V804.8M1176.0,790.4V804.8M1177.0,790.4V804.8M1178.0,790.4V804.8M1179.0,790.4V804.8M1180.0,790.4V804.8M1181.0,790.4V804.8M1182.0,790.4V804.8M1183.0,790.4V804.8M1184.0,790.4V804.8M1185.0,794.0V804.8M1186.0,794.0V804.8M1187.0,794.0V804.8M1188.0,794.0V804.8M1189.0,794.0V804.8M1205.0,693.4V700.5M1206.0,693.4V704.1M1207.0,696.9V707.7M1208.0,696.9V711.3M1209.0,700.5V714.9M1210.0,700.5V714.9M1211.0,704.1V718.5M1212.0,707.7V725.7M1213.0,707.7V725.7M1214.0,711.3V729.3M1215.0,711.3V732.9M1216.0,714.9V732.9M1217.0,718.5V732.9M1218.0,722.1V736.5M1219.0,725.7V740.1M1220.0,732.9V743.7M1221.0,732.9V743.7M1222.0,736.5V747.3M1223.0,740.1V750.9M1224.0,743.7V754.5M1225.0,743.7V754.5M1226.0,743.7V758.1M1227.0,743.7V758.1M1228.0,747.3V761.7M1229.0,747.3V761.7M1230.0,750.9V765.3M1231.0,750.9V765.3M1232.0,754.5V768.8M1233.0,754.5V768.8M1234.0,754.5V768.8M1235.0,754.5V772.4M1236.0,754.5V772.4M1237.0,754.5V776.0M1238.0,754.5V776.0M1239.0,754.5V779.6M1240.0,750.9V779.6M1241.0,750.9V783.2M1242.0,750.9V783.2M1243.0,754.5V783.2M1244.0,754.5V783.2M1245.0,758.1V786.8M1246.0,761.7V786.8M1247.0,765.3V783.2M1248.0,768.8V783.2M1249.0,768.8V786.8M1250.0,772.4V786.8M1251.0,776.0V786.8M1252.0,776.0V786.8M1253.0,779.6V790.4M1256.0,783.2V794.0M1257.0,783.2V794.0M1259.0,779.6V794.0M1260.0,779.6V797.6M1261.0,779.6V797.6M1262.0,779.6V797.6M1263.0,779.6V797.6M1265.0,779.6V797.6M1266.0,779.6V797.6M1267.0,779.6V797.6M1268.0,779.6V797.6M1269.0,779.6V797.6M1270.0,779.6V797.6M1271.0,779.6V801.2M1272.0,779.6V801.2M1273.0,783.2V801.2M1274.0,783.2V801.2M1275.0,783.2V801.2M1276.0,783.2V801.2M1277.0,786.8V801.2M1278.0,786.8V801.2M1279.0,786.8V801.2M1280.0,790.4V801.2M1300.4,696.9V707.7M1301.4,700.5V711.3M1302.4,700.5V714.9M1303.4,700.5V722.1M1304.4,704.1V725.7M1305.4,707.7V725.7M1306.4,711.3V732.9M1307.4,711.3V736.5M1308.4,714.9V736.5M1309.4,718.5V740.1M1310.4,718.5V740.1M1311.4,722.1V743.7M1312.4,722.1V747.3M1313.4,725.7V747.3M1314.4,729.3V750.9M1315.4,732.9V750.9M1316.4,732.9V754.5M1317.4,736.5V758.1M1318.4,740.1V758.1M1319.4,747.3V758.1M1320.4,747.3V761.7M1321.4,750.9V761.7M1322.4,754.5V765.3M1323.4,754.5V768.8M1324.4,754.5V768.8M1325.4,758.1V772.4M1326.4,758.1V776.0M1327.4,761.7V776.0M1328.4,761.7V779.6M1329.4,768.8V783.2M1330.4,768.8V783.2M1331.4,772.4V786.8M1333.4,776.0V790.4M1334.4,776.0V790.4M1335.4,776.0V790.4M1336.4,776.0V790.4M1337.4,776.0V790.4M1338.4,776.0V790.4M1339.4,776.0V790.4M1340.4,776.0V790.4M1341.4,776.0V790.4M1342.4,776.0V790.4M1343.4,779.6V794.0M1344.4,779.6V794.0M1345.4,779.6V794.0M1346.4,779.6V794.0M1347.4,779.6V794.0M1348.4,776.0V797.6M1349.4,779.6V797.6M1350.4,779.6V797.6M1351.4,779.6V797.6M1352.4,779.6V797.6M1353.4,783.2V797.6M1354.4,783.2V797.6M1355.4,783.2V797.6M1356.4,783.2V801.2M1357.4,783.2V801.2M1358.4,783.2V801.2M1359.4,783.2V801.2M1360.4,779.6V801.2M1361.4,779.6V804.8M1362.4,779.6V804.8M1363.4,779.6V804.8M1364.4,779.6V804.8M1365.4,779.6V804.8M1366.4,779.6V804.8M1367.4,783.2V808.4M1368.4,783.2V808.4M1369.4,786.8V808.4M1370.4,786.8V808.4M1371.4,786.8V808.4M1372.4,786.8V808.4M1373.4,786.8V808.4M1374.4,786.8V808.4M1397.5,696.9V707.7M1398.5,700.5V711.3M1399.5,704.1V714.9M1400.5,704.1V718.5M1401.5,707.7V722.1M1402.5,711.3V725.7M1403.5,714.9V729.3M1404.5,718.5V732.9M1405.5,718.5V736.5M1406.5,722.1V740.1M1407.5,725.7V743.7M1408.5,729.3V747.3M1409.5,732.9V747.3M1410.5,736.5V750.9M1411.5,740.1V754.5M1412.5,743.7V758.1M1413.5,747.3V758.1M1414.5,750.9V761.7M1415.5,754.5V765.3M1416.5,754.5V768.8M1417.5,758.1V768.8M1418.5,761.7V772.4M1419.5,765.3V776.0M1420.5,768.8V779.6M1421.5,768.8V779.6M1422.5,768.8V779.6M1423.5,768.8V779.6M1424.5,768.8V783.2M1425.5,765.3V783.2M1426.5,765.3V786.8M1427.5,765.3V786.8M1428.5,765.3V786.8M1429.5,765.3V790.4M1430.5,765.3V790.4M1431.5,765.3V790.4M1432.5,765.3V786.8M1433.5,765.3V790.4M1434.5,768.8V790.4M1435.5,772.4V790.4M1436.5,776.0V794.0M1437.5,779.6V794.0M1438.5,783.2V794.0M1439.5,790.4V797.6M1440.5,790.4V797.6M1441.5,790.4V801.2M1442.5,790.4V801.2M1443.5,790.4V804.8M1444.5,790.4V804.8M1445.5,790.4V804.8M1446.5,786.8V801.2M1447.5,786.8V801.2M1448.5,786.8V801.2M1449.5,790.4V804.8M1450.5,790.4V804.8M1451.5,790.4V804.8M1452.5,790.4V804.8M1453.5,786.8V804.8M1454.5,786.8V804.8M1455.5,786.8V804.8M1456.5,786.8V804.8M1457.5,786.8V804.8M1458.5,786.8V801.2M1460.5,786.8V801.2M1461.5,783.2V801.2M1462.5,783.2V801.2M1463.5,783.2V801.2M1464.5,783.2V801.2M1466.5,783.2V801.2M1467.5,783.2V801.2M1468.5,779.6V804.8M1469.5,779.6V801.2M1470.5,779.6V801.2M1471.3,750.9V790.4M1472.3,740.1V754.5M1473.3,725.7V750.9M1474.3,718.5V747.3M1476.3,714.9V740.1M1477.3,711.3V736.5M1478.3,707.7V732.9M1479.3,707.7V729.3M1480.3,704.1V725.7M1481.3,707.7V729.3M1482.3,707.7V729.3M1483.3,707.7V732.9M1484.3,707.7V736.5M1485.3,707.7V736.5M1486.3,711.3V740.1M1487.3,714.9V740.1M1488.3,718.5V743.7M1489.3,722.1V747.3M1490.3,725.7V747.3M1491.3,732.9V750.9M1492.3,736.5V754.5M1493.3,740.1V758.1M1494.3,740.1V758.1M1495.3,740.1V758.1M1496.3,743.7V758.1M1497.3,743.7V761.7M1498.3,747.3V761.7M1499.3,743.7V761.7M1500.3,743.7V761.7M1501.3,747.3V761.7M1502.3,747.3V765.3M1503.3,747.3V765.3M1504.3,747.3V765.3M1505.3,747.3V765.3M1506.3,747.3V768.8M1507.3,750.9V765.3M1508.3,750.9V765.3M1510.3,754.5V768.8M1511.3,758.1V768.8M1512.3,758.1V772.4M1513.3,761.7V776.0M1514.3,765.3V776.0M1515.3,765.3V779.6M1516.3,768.8V779.6M1517.3,772.4V779.6M1518.3,772.4V783.2M1519.3,772.4V783.2M1520.3,776.0V783.2M1521.3,776.0V786.8M1522.3,776.0V786.8M1523.3,776.0V783.2M1524.3,776.0V786.8M1525.3,776.0V786.8M1526.3,776.0V786.8M1527.3,776.0V786.8M1528.3,776.0V786.8M1529.3,776.0V786.8M1530.3,776.0V786.8M1532.3,779.6V790.4M1533.3,776.0V790.4M1534.3,776.0V790.4M1535.3,776.0V790.4M1536.3,772.4V790.4M1537.3,772.4V790.4M1538.3,772.4V790.4M1539.3,772.4V790.4M1540.3,772.4V790.4M1541.3,772.4V790.4M1542.3,772.4V790.4M1543.3,772.4V790.4M1545.3,772.4V790.4M1546.3,772.4V790.4M1547.3,776.0V790.4M1548.3,776.0V790.4M1549.3,776.0V790.4M1550.3,776.0V790.4M1551.3,776.0V790.4M1552.3,779.6V790.4M1553.3,779.6V790.4M1554.3,776.0V786.8M1555.3,776.0V786.8M1556.3,776.0V790.4M1557.3,776.0V790.4M1558.3,779.6V790.4M1559.3,779.6V790.4M1582.7,693.4V704.1M1583.7,696.9V707.7M1584.7,700.5V714.9M1585.7,704.1V718.5M1586.7,707.7V722.1M1587.7,711.3V725.7M1588.7,714.9V729.3M1589.7,718.5V732.9M1590.7,722.1V736.5M1591.7,725.7V740.1M1592.7,729.3V743.7M1593.7,729.3V747.3M1594.7,732.9V747.3M1595.7,736.5V750.9M1596.7,736.5V754.5M1597.7,740.1V758.1M1598.7,743.7V761.7M1599.7,747.3V761.7M1601.7,750.9V761.7M1602.7,754.5V761.7M1604.7,758.1V765.3M1605.7,761.7V768.8M1606.7,761.7V772.4M1607.7,761.7V772.4M1608.7,765.3V776.0M1609.7,765.3V776.0M1610.7,768.8V779.6M1611.7,772.4V779.6M1612.7,772.4V783.2M1613.7,772.4V783.2M1614.7,776.0V783.2M1615.7,776.0V786.8M1616.7,776.0V786.8M1617.7,779.6V786.8M1618.7,779.6V786.8M1619.7,783.2V790.4M1620.7,779.6V786.8M1621.7,783.2V786.8M1622.7,783.2V786.8M1623.7,783.2V786.8M1624.7,783.2V790.4M1625.7,783.2V790.4M1626.7,783.2V790.4M1627.7,783.2V790.4M1629.7,779.6V797.6M1630.7,779.6V797.6M1631.7,779.6V797.6M1632.7,779.6V797.6M1633.7,779.6V797.6M1634.7,779.6V797.6M1635.7,779.6V797.6M1636.7,779.6V797.6M1637.7,779.6V797.6M1638.7,779.6V797.6M1639.7,779.6V797.6M1640.7,783.2V801.2M1641.7,786.8V801.2M1642.7,786.8V801.2M1643.7,783.2V797.6M1644.7,786.8V797.6M1645.7,786.8V797.6M1646.7,786.8V797.6M1648.7,786.8V797.6M1650.7,786.8V797.6M1651.7,786.8V797.6M1652.7,786.8V797.6M1654.6,772.4V794.0M1655.6,765.3V786.8M1656.6,758.1V779.6M1657.6,750.9V772.4M1658.6,747.3V765.3M1659.6,740.1V758.1M1661.6,725.7V743.7M1662.6,722.1V736.5M1663.6,714.9V729.3M1664.6,711.3V725.7M1665.6,704.1V718.5M1666.6,700.5V711.3M1667.6,693.4V707.7" stroke="#e000e0" stroke-width="1.15" fill="none"/>
<line x1="618.5" y1="696" x2="618.5" y2="765" stroke="#e000e0" stroke-width="1.3"/>
<line x1="712.6" y1="696" x2="712.6" y2="805" stroke="#e000e0" stroke-width="1.3"/>
<line x1="810.8" y1="696" x2="810.8" y2="805" stroke="#e000e0" stroke-width="1.3"/>
<line x1="904.6" y1="739.6" x2="904.6" y2="800" stroke="#e000e0" stroke-width="1.3"/>
<line x1="907.5" y1="749.8" x2="907.5" y2="800" stroke="#e000e0" stroke-width="1.3"/>
<line x1="1003.5" y1="696" x2="1003.5" y2="828" stroke="#e000e0" stroke-width="1.3"/>
<line x1="1101" y1="719" x2="1101" y2="800" stroke="#e000e0" stroke-width="1.3"/>
<line x1="1189.5" y1="696" x2="1189.5" y2="805" stroke="#e000e0" stroke-width="1.3"/>
<line x1="1280.8" y1="696" x2="1280.8" y2="800" stroke="#e000e0" stroke-width="1.3"/>
<line x1="1375.5" y1="696" x2="1375.5" y2="850.6" stroke="#e000e0" stroke-width="1.3"/>
<line x1="1470.8" y1="715.8" x2="1470.8" y2="800" stroke="#e000e0" stroke-width="1.3"/>
<line x1="1560.6" y1="696" x2="1560.6" y2="790" stroke="#e000e0" stroke-width="1.3"/>
<line x1="1680.5" y1="696" x2="1680.5" y2="746.5" stroke="#e000e0" stroke-width="1.3"/>
<polyline points="624.3,797.5 624.8,798.7 625.3,798.3 625.8,799.3 626.3,799.9 626.8,799.8 627.3,801.2 627.8,800.3 628.3,801.3 628.8,801.3 629.3,800.5 629.8,802.2 630.3,802.6 630.8,803.4 631.3,803.4 631.8,803.5 632.3,803.5 632.8,803.2 633.3,803.2 633.8,802.3 634.3,802.6 634.8,802.0 635.3,800.7 635.8,801.2 636.3,799.1 636.8,799.8 637.3,798.9 637.8,798.9 638.3,799.1 638.8,798.1 639.3,797.5 639.8,797.8 640.3,796.9 640.8,797.2 641.3,798.5 641.8,798.8 642.3,798.1 642.8,799.3 643.3,800.0 643.8,800.0 644.3,800.2 644.8,800.9 645.3,801.4 645.8,801.3 646.3,802.5 646.8,801.7 647.3,802.8 647.8,804.3 648.3,803.1 648.8,804.0 649.3,803.3 649.8,804.4 650.3,804.2 650.8,804.5 651.3,803.8 651.8,804.7 652.3,802.9 652.8,803.0 653.3,802.8 653.8,802.7 654.3,802.4 654.8,800.9 655.3,802.4 655.8,800.8 656.3,800.2 656.8,799.4 657.3,799.7 657.8,798.7 658.3,799.3 658.8,798.5 659.3,798.7 659.8,797.7 660.3,798.3 660.8,799.9 661.3,799.9 661.8,799.9 662.3,799.8 662.8,801.5 663.3,800.5 663.8,801.1 664.3,803.0 664.8,802.5 665.3,804.0 665.8,804.1 666.3,805.4 666.8,805.7 667.3,805.6 667.8,805.5 668.3,806.0 668.8,806.0 669.3,804.9 669.8,803.0 670.3,803.8 670.8,803.4 671.3,803.1 671.8,802.5 672.3,802.8 672.8,801.2 673.3,801.6 673.8,799.9 674.3,799.4 674.8,799.5 675.3,799.2 675.8,798.7 676.3,798.9 676.8,799.8 677.3,800.2 677.8,800.2 678.3,800.6 678.8,800.5 679.3,800.7 679.8,800.8 680.3,801.7 680.8,801.6 681.3,802.4 681.8,803.2 682.3,803.5 682.8,804.2 683.3,803.4 683.8,803.1 684.3,804.0 684.8,805.9 685.3,805.1 685.8,804.2 686.3,804.8 686.8,803.5 687.3,804.2 687.8,802.8 688.3,802.5 688.8,802.7 689.3,801.4 689.8,801.6 690.3,802.3 690.8,801.2 691.3,800.0 691.8,800.1 692.3,799.9 692.8,799.2 693.3,799.4 693.8,799.5 694.3,798.5 694.8,798.6 695.3,798.4 695.8,798.7 696.3,798.7 696.8,799.9 697.3,800.5 697.8,800.0 698.3,800.2 698.8,801.3 699.3,801.5 699.8,802.4 700.3,802.5 700.8,802.6 701.3,802.3 701.8,803.8 702.3,803.9 702.8,803.6 703.3,803.9 703.8,804.1 704.3,805.8 704.8,805.6 705.3,804.1 705.8,805.0 706.3,804.8 706.8,804.7 707.3,804.5 707.8,804.0 708.3,804.2 708.8,804.0 709.3,803.0 709.8,803.6 710.3,802.4 710.8,801.7 711.3,801.9 711.8,800.7 712.3,801.0 712.8,800.3 713.3,800.3 713.8,800.2" stroke="#35dc12" stroke-width="3.0" fill="none" stroke-linejoin="round"/>
<polyline points="758.5,793.8 759.0,795.7 759.5,796.2 760.0,796.5 760.5,797.5 761.0,797.9 761.5,798.0 762.0,798.3 762.5,799.7 763.0,800.2 763.5,799.6 764.0,800.6 764.5,800.9 765.0,802.4 765.5,801.5 766.0,800.9 766.5,802.1 767.0,801.4 767.5,801.0 768.0,800.8 768.5,800.4 769.0,800.3 769.5,800.5 770.0,800.1 770.5,799.4 771.0,799.5 771.5,800.2 772.0,798.7 772.5,798.6 773.0,799.7 773.5,799.4 774.0,801.6 774.5,800.9 775.0,801.2 775.5,801.4 776.0,802.5 776.5,801.3 777.0,802.1 777.5,801.6 778.0,803.4 778.5,803.0 779.0,804.3 779.5,803.5 780.0,803.5 780.5,803.4 781.0,804.0 781.5,803.0 782.0,803.3 782.5,802.6 783.0,802.4 783.5,802.3 784.0,803.2 784.5,801.7 785.0,802.2 785.5,802.2 786.0,801.2 786.5,800.6 787.0,802.0 787.5,801.9 788.0,800.7 788.5,800.0 789.0,800.8 789.5,800.2 790.0,799.6 790.5,800.1 791.0,799.3 791.5,800.3 792.0,800.4 792.5,800.6 793.0,801.8 793.5,801.9 794.0,802.8 794.5,800.9 795.0,802.2 795.5,802.3 796.0,803.7 796.5,803.8 797.0,803.6 797.5,803.8 798.0,803.6 798.5,804.0 799.0,804.3 799.5,803.5 800.0,805.9 800.5,805.2 801.0,805.6 801.5,805.0 802.0,804.4 802.5,804.4 803.0,802.9 803.5,803.1 804.0,803.8 804.5,803.0 805.0,802.2 805.5,802.8 806.0,801.9 806.5,802.4 807.0,803.0 807.5,801.4 808.0,801.6 808.5,801.9 809.0,801.4 809.5,801.3 810.0,800.6" stroke="#35dc12" stroke-width="3.0" fill="none" stroke-linejoin="round"/>
<polyline points="825.0,799.8 825.5,798.7 826.0,799.7 826.5,800.3 827.0,799.0 827.5,799.4 828.0,799.7 828.5,799.9 829.0,799.7 829.5,798.6 830.0,798.7 830.5,799.7 831.0,798.5 831.5,798.8 832.0,798.1 832.5,798.1 833.0,796.8 833.5,797.9 834.0,797.0 834.5,797.5 835.0,797.6 835.5,798.8 836.0,798.6 836.5,798.6 837.0,798.2 837.5,797.8 838.0,798.9 838.5,798.3 839.0,798.8 839.5,799.4 840.0,798.9 840.5,799.1 841.0,798.7 841.5,799.9 842.0,799.7 842.5,799.9 843.0,800.4 843.5,798.9 844.0,799.8 844.5,800.2 845.0,800.2 845.5,800.3 846.0,800.4 846.5,799.5 847.0,800.4 847.5,801.1 848.0,800.6 848.5,800.6 849.0,801.2 849.5,800.0 850.0,801.2 850.5,801.6 851.0,800.6 851.5,800.2 852.0,800.7 852.5,800.1 853.0,799.8 853.5,800.1 854.0,799.1 854.5,800.1 855.0,799.0 855.5,799.2 856.0,799.8 856.5,799.2 857.0,799.3 857.5,799.7 858.0,799.6 858.5,799.8 859.0,798.3 859.5,798.9 860.0,797.5 860.5,798.6 861.0,798.7 861.5,797.6 862.0,798.0 862.5,798.1 863.0,797.4 863.5,797.1 864.0,798.0 864.5,796.5 865.0,797.1 865.5,797.6 866.0,797.3 866.5,798.1 867.0,798.1 867.5,797.7 868.0,798.4 868.5,798.0 869.0,797.1 869.5,797.6 870.0,798.0 870.5,798.1 871.0,797.2 871.5,799.3 872.0,797.4 872.5,797.8 873.0,798.6 873.5,798.6 874.0,799.4 874.5,798.8 875.0,799.0 875.5,799.2 876.0,798.6 876.5,798.4 877.0,798.9 877.5,799.7 878.0,799.2 878.5,800.0 879.0,799.3 879.5,800.0 880.0,799.8 880.5,800.3 881.0,800.0 881.5,800.3 882.0,800.0 882.5,801.0 883.0,800.5 883.5,800.9 884.0,801.1 884.5,800.4 885.0,800.6 885.5,801.1 886.0,801.9 886.5,800.9 887.0,801.0 887.5,801.1 888.0,801.6 888.5,801.3 889.0,801.6 889.5,802.4 890.0,801.7 890.5,802.4 891.0,801.9 891.5,802.5 892.0,803.0 892.5,801.9 893.0,803.0 893.5,803.2 894.0,803.1 894.5,803.4 895.0,803.5 895.5,802.7 896.0,803.4 896.5,803.9 897.0,804.3 897.5,803.0 898.0,803.5 898.5,803.2 899.0,803.9 899.5,803.5 900.0,803.6 900.5,804.6 901.0,805.4 901.5,803.3 902.0,805.3 902.5,804.0 903.0,804.9 903.5,804.8 904.0,805.4 904.5,804.7 905.0,804.5 905.5,804.9 906.0,805.5 906.5,804.7 907.0,805.4 907.5,805.3 908.0,805.2 908.5,804.9 909.0,805.0 909.5,804.9 910.0,804.1 910.5,803.8 911.0,802.7 911.5,803.2 912.0,802.6 912.5,803.5 913.0,802.4 913.5,802.4 914.0,802.8 914.5,802.8 915.0,802.7 915.5,801.5 916.0,801.8 916.5,802.0 917.0,800.8 917.5,800.9 918.0,800.2 918.5,800.3 919.0,800.8 919.5,800.3 920.0,799.8 920.5,799.7 921.0,800.6 921.5,800.2 922.0,799.1 922.5,800.8 923.0,799.4 923.5,799.5 924.0,799.3 924.5,799.2 925.0,799.7 925.5,798.6 926.0,799.3 926.5,799.1 927.0,800.0 927.5,799.3 928.0,799.3 928.5,799.2 929.0,799.2 929.5,798.9 930.0,797.6 930.5,799.0 931.0,798.5 931.5,799.0 932.0,798.7 932.5,798.2 933.0,798.0 933.5,797.9 934.0,798.5 934.5,798.2 935.0,797.8 935.5,798.0 936.0,798.3 936.5,797.7 937.0,798.1 937.5,798.1 938.0,797.4 938.5,799.0 939.0,799.2 939.5,799.9 940.0,800.4 940.5,799.6 941.0,800.6 941.5,800.7 942.0,800.8 942.5,801.5 943.0,801.8 943.5,800.9 944.0,802.6 944.5,802.0 945.0,802.0 945.5,802.3 946.0,802.8 946.5,802.6 947.0,804.0 947.5,803.9 948.0,803.5 948.5,804.6 949.0,804.6 949.5,804.8 950.0,805.5 950.5,805.1 951.0,805.2 951.5,805.8 952.0,804.8 952.5,805.3 953.0,806.4 953.5,806.9 954.0,805.7 954.5,806.7 955.0,806.5 955.5,806.9 956.0,807.6 956.5,808.2 957.0,808.5 957.5,808.3 958.0,808.3 958.5,808.3 959.0,807.5 959.5,808.8 960.0,808.2 960.5,808.4 961.0,809.2 961.5,808.5 962.0,810.4 962.5,810.0 963.0,810.1 963.5,810.3 964.0,810.4 964.5,810.5 965.0,811.0 965.5,810.5 966.0,811.1 966.5,811.1 967.0,811.5 967.5,810.6 968.0,811.3 968.5,811.1 969.0,811.5 969.5,811.5 970.0,811.4 970.5,811.6 971.0,811.6 971.5,812.1 972.0,811.6 972.5,811.7 973.0,811.0 973.5,811.4 974.0,812.0 974.5,812.1 975.0,811.2 975.5,811.7 976.0,811.6 976.5,811.8 977.0,811.5 977.5,811.6 978.0,811.8 978.5,812.0 979.0,812.4 979.5,811.5 980.0,811.5 980.5,812.5 981.0,812.5 981.5,812.3 982.0,811.9 982.5,813.1 983.0,812.2 983.5,813.4 984.0,813.1 984.5,813.0 985.0,813.1 985.5,813.7 986.0,813.4 986.5,812.6 987.0,813.3 987.5,812.7 988.0,814.1 988.5,814.4 989.0,814.6 989.5,813.5 990.0,815.4 990.5,815.4 991.0,814.5 991.5,813.7 992.0,814.4 992.5,815.4 993.0,816.1 993.5,814.9 994.0,814.3 994.5,814.9 995.0,816.5 995.5,815.3 996.0,814.4 996.5,813.9 997.0,815.1 997.5,815.0 998.0,814.2 998.5,814.1 999.0,814.1 999.5,813.7 1000.0,813.4 1000.5,813.2 1001.0,813.1 1001.5,813.8 1002.0,813.2" stroke="#35dc12" stroke-width="3.0" fill="none" stroke-linejoin="round"/>
<polyline points="1055.0,800.5 1055.5,800.1 1056.0,797.2 1056.5,797.6 1057.0,797.3 1057.5,795.9 1058.0,794.9 1058.5,794.6 1059.0,793.3 1059.5,792.4 1060.0,791.8 1060.5,792.3 1061.0,792.5 1061.5,793.2 1062.0,793.0 1062.5,793.0 1063.0,795.0 1063.5,793.6 1064.0,793.9 1064.5,794.2 1065.0,794.1 1065.5,794.0 1066.0,795.1 1066.5,796.0 1067.0,794.6 1067.5,795.4 1068.0,796.2 1068.5,795.9 1069.0,796.8 1069.5,796.7 1070.0,796.4 1070.5,796.9 1071.0,796.8 1071.5,797.4 1072.0,795.9 1072.5,797.4 1073.0,797.9 1073.5,797.3 1074.0,797.4 1074.5,797.1 1075.0,797.6 1075.5,797.4 1076.0,796.8 1076.5,796.9 1077.0,796.4 1077.5,797.8 1078.0,797.7 1078.5,798.2 1079.0,797.8 1079.5,798.1 1080.0,797.1 1080.5,796.9 1081.0,797.6 1081.5,797.7 1082.0,798.1 1082.5,797.9 1083.0,798.1 1083.5,798.5 1084.0,798.9 1084.5,799.1 1085.0,799.4 1085.5,799.3 1086.0,799.8 1086.5,799.3 1087.0,799.8 1087.5,800.5 1088.0,801.1 1088.5,800.8 1089.0,800.7 1089.5,802.1 1090.0,801.5 1090.5,801.3 1091.0,802.0 1091.5,802.1 1092.0,801.8 1092.5,803.0 1093.0,804.2 1093.5,803.2 1094.0,803.4 1094.5,804.5 1095.0,804.2 1095.5,804.3 1096.0,805.2 1096.5,804.2 1097.0,804.9 1097.5,805.4 1098.0,805.4 1098.5,804.9 1099.0,805.3 1099.5,806.8 1100.0,806.1 1100.5,806.2 1101.0,807.0" stroke="#35dc12" stroke-width="3.0" fill="none" stroke-linejoin="round"/>
<polyline points="1104.0,799.1 1104.5,799.6 1105.0,798.4 1105.5,799.7 1106.0,798.2 1106.5,798.4 1107.0,797.5 1107.5,797.7 1108.0,797.5 1108.5,797.0 1109.0,796.5 1109.5,796.5 1110.0,795.9 1110.5,795.4 1111.0,795.6 1111.5,795.4 1112.0,794.0 1112.5,793.8 1113.0,793.6 1113.5,794.1 1114.0,793.3 1114.5,794.8 1115.0,794.0 1115.5,794.1 1116.0,794.4 1116.5,793.6 1117.0,794.1 1117.5,794.2 1118.0,794.6 1118.5,793.4 1119.0,794.6 1119.5,794.2 1120.0,794.1 1120.5,794.5 1121.0,793.8 1121.5,793.8 1122.0,794.3 1122.5,793.7 1123.0,794.5 1123.5,794.6 1124.0,794.0 1124.5,794.0 1125.0,793.6 1125.5,793.5 1126.0,794.8 1126.5,793.7 1127.0,794.4 1127.5,794.6 1128.0,794.1 1128.5,794.3 1129.0,794.4 1129.5,795.9 1130.0,795.1 1130.5,795.7 1131.0,796.2 1131.5,795.7 1132.0,796.0 1132.5,795.2 1133.0,795.2 1133.5,796.4 1134.0,796.5 1134.5,795.4 1135.0,796.5 1135.5,796.2 1136.0,796.6 1136.5,796.8 1137.0,797.3 1137.5,796.2 1138.0,796.6 1138.5,797.3 1139.0,796.7 1139.5,797.2 1140.0,797.0 1140.5,796.4 1141.0,797.2 1141.5,798.2 1142.0,797.7 1142.5,797.5 1143.0,798.2 1143.5,798.8 1144.0,799.2 1144.5,799.4 1145.0,799.7 1145.5,799.1 1146.0,799.6 1146.5,799.8 1147.0,800.2 1147.5,800.9 1148.0,801.6 1148.5,801.0 1149.0,801.9 1149.5,802.2 1150.0,801.3 1150.5,801.7 1151.0,802.4 1151.5,801.9 1152.0,803.8 1152.5,802.1 1153.0,802.7 1153.5,803.7 1154.0,802.9 1154.5,803.6 1155.0,802.7 1155.5,803.6 1156.0,802.8 1156.5,803.4 1157.0,803.5 1157.5,802.2 1158.0,802.5 1158.5,802.0 1159.0,802.3 1159.5,803.3 1160.0,802.8 1160.5,803.2 1161.0,803.4 1161.5,803.2 1162.0,803.0 1162.5,802.4 1163.0,802.4 1163.5,802.7 1164.0,802.9 1164.5,803.0 1165.0,802.5 1165.5,802.2 1166.0,802.3 1166.5,803.1 1167.0,802.4 1167.5,803.2 1168.0,801.8 1168.5,802.6 1169.0,802.2 1169.5,802.4 1170.0,801.6 1170.5,802.1 1171.0,801.8 1171.5,801.6 1172.0,801.0 1172.5,800.8 1173.0,801.2 1173.5,801.6 1174.0,801.3 1174.5,801.2 1175.0,801.2 1175.5,800.2 1176.0,801.3 1176.5,800.8 1177.0,800.2 1177.5,800.2 1178.0,800.9 1178.5,800.4 1179.0,799.4 1179.5,801.2 1180.0,799.3 1180.5,800.8 1181.0,800.2 1181.5,799.2 1182.0,800.2 1182.5,800.1 1183.0,799.9 1183.5,799.6 1184.0,799.3 1184.5,799.1 1185.0,798.6 1185.5,798.9 1186.0,799.3 1186.5,798.5 1187.0,799.4 1187.5,797.6 1188.0,798.3 1188.5,797.4 1189.0,797.1" stroke="#35dc12" stroke-width="3.0" fill="none" stroke-linejoin="round"/>
<polyline points="1249.0,797.1 1249.5,796.8 1250.0,796.6 1250.5,796.3 1251.0,796.6 1251.5,795.9 1252.0,796.5 1252.5,796.3 1253.0,795.9 1253.5,796.6 1254.0,795.4 1254.5,796.5 1255.0,796.3 1255.5,796.4 1256.0,796.1 1256.5,796.4 1257.0,795.8 1257.5,795.3 1258.0,796.0 1258.5,795.3 1259.0,795.5 1259.5,795.6 1260.0,795.1 1260.5,796.0 1261.0,794.8 1261.5,796.2 1262.0,795.6 1262.5,796.5 1263.0,796.2 1263.5,796.0 1264.0,795.9 1264.5,795.8 1265.0,795.1 1265.5,795.5 1266.0,795.4 1266.5,795.5 1267.0,795.8 1267.5,795.5 1268.0,796.0 1268.5,795.8 1269.0,795.7 1269.5,796.2 1270.0,796.3 1270.5,795.2 1271.0,795.5 1271.5,796.9 1272.0,795.3 1272.5,795.3 1273.0,794.4 1273.5,795.2 1274.0,795.3 1274.5,794.6 1275.0,794.1 1275.5,793.9 1276.0,792.8 1276.5,793.8 1277.0,793.2 1277.5,793.4 1278.0,793.2 1278.5,792.9 1279.0,793.6 1279.5,792.9 1280.0,791.9 1280.5,792.3" stroke="#35dc12" stroke-width="3.0" fill="none" stroke-linejoin="round"/>
<polyline points="1346.6,797.3 1347.1,797.2 1347.6,798.1 1348.1,797.4 1348.6,796.9 1349.1,797.4 1349.6,798.3 1350.1,797.8 1350.6,798.5 1351.1,797.9 1351.6,799.0 1352.1,798.9 1352.6,798.7 1353.1,799.1 1353.6,799.4 1354.1,800.2 1354.6,800.0 1355.1,800.0 1355.6,800.3 1356.1,800.8 1356.6,800.8 1357.1,801.6 1357.6,800.5 1358.1,801.5 1358.6,801.3 1359.1,801.1 1359.6,801.8 1360.1,802.1 1360.6,802.4 1361.1,802.3 1361.6,801.8 1362.1,802.4 1362.6,802.7 1363.1,803.5 1363.6,802.9 1364.1,803.1 1364.6,804.0 1365.1,803.3 1365.6,802.9 1366.1,803.0 1366.6,803.1 1367.1,802.6 1367.6,801.4 1368.1,801.9 1368.6,802.4 1369.1,801.3 1369.6,801.9 1370.1,801.4 1370.6,800.7 1371.1,801.3 1371.6,799.6 1372.1,799.4 1372.6,799.5 1373.1,800.3 1373.6,799.7 1374.1,800.0 1374.6,799.4 1375.1,799.3 1375.6,798.8" stroke="#35dc12" stroke-width="3.0" fill="none" stroke-linejoin="round"/>
<polyline points="1440.6,793.2 1441.1,794.1 1441.6,794.2 1442.1,793.3 1442.6,794.5 1443.1,795.4 1443.6,794.9 1444.1,794.3 1444.6,795.3 1445.1,795.3 1445.6,795.2 1446.1,796.0 1446.6,796.3 1447.1,795.7 1447.6,796.2 1448.1,796.1 1448.6,796.5 1449.1,797.5 1449.6,796.7 1450.1,797.3 1450.6,797.3 1451.1,797.4 1451.6,796.9 1452.1,797.9 1452.6,797.2 1453.1,798.3 1453.6,798.0 1454.1,798.3 1454.6,798.1 1455.1,798.1 1455.6,798.1 1456.1,798.8 1456.6,798.9 1457.1,799.2 1457.6,799.1 1458.1,799.8 1458.6,799.6 1459.1,799.7 1459.6,799.7 1460.1,799.9 1460.6,800.0 1461.1,799.1 1461.6,798.6 1462.1,799.2 1462.6,799.0 1463.1,798.6 1463.6,798.5 1464.1,797.5 1464.6,797.4 1465.1,797.7 1465.6,797.5 1466.1,796.7 1466.6,797.3 1467.1,795.9 1467.6,797.2 1468.1,795.9 1468.6,795.9 1469.1,795.5 1469.6,795.1 1470.1,795.4 1470.6,794.4 1471.1,794.9" stroke="#35dc12" stroke-width="3.0" fill="none" stroke-linejoin="round"/>
<polyline points="1631.0,795.9 1631.5,795.7 1632.0,795.9 1632.5,795.2 1633.0,795.1 1633.5,795.4 1634.0,796.6 1634.5,796.3 1635.0,795.3 1635.5,797.0 1636.0,796.6 1636.5,796.8 1637.0,796.8 1637.5,797.0 1638.0,795.6 1638.5,796.5 1639.0,796.1 1639.5,797.5 1640.0,796.9 1640.5,796.6 1641.0,796.6 1641.5,795.7 1642.0,796.8 1642.5,796.4 1643.0,797.5 1643.5,797.3 1644.0,796.9 1644.5,796.8 1645.0,797.6 1645.5,796.6 1646.0,797.2 1646.5,796.7 1647.0,796.3 1647.5,796.4 1648.0,796.9 1648.5,795.1 1649.0,796.1 1649.5,796.0 1650.0,795.3 1650.5,796.0 1651.0,795.5 1651.5,795.3 1652.0,794.3 1652.5,795.0 1653.0,793.9 1653.5,794.6 1654.0,795.3 1654.5,793.6" stroke="#35dc12" stroke-width="3.0" fill="none" stroke-linejoin="round"/>
<line x1="660" y1="797" x2="660" y2="811" stroke="#35dc12" stroke-width="3"/>
<line x1="676" y1="797" x2="676" y2="811" stroke="#35dc12" stroke-width="3"/>
<line x1="770" y1="797" x2="770" y2="817" stroke="#35dc12" stroke-width="3"/>
<line x1="773" y1="797" x2="773" y2="817" stroke="#35dc12" stroke-width="3"/>
<line x1="782.6" y1="797" x2="782.6" y2="817" stroke="#35dc12" stroke-width="3"/>
<line x1="794" y1="797" x2="794" y2="817" stroke="#35dc12" stroke-width="3"/>
<line x1="847.7" y1="797" x2="847.7" y2="817" stroke="#35dc12" stroke-width="3"/>
<line x1="909" y1="797" x2="909" y2="818.4" stroke="#35dc12" stroke-width="3"/>
<line x1="913" y1="797" x2="913" y2="818.4" stroke="#35dc12" stroke-width="3"/>
<line x1="926" y1="797" x2="926" y2="809.6" stroke="#35dc12" stroke-width="3"/>
<line x1="1002" y1="797" x2="1002" y2="818.4" stroke="#35dc12" stroke-width="3"/>
<line x1="1065" y1="797" x2="1065" y2="817" stroke="#35dc12" stroke-width="3"/>
<line x1="1107" y1="797" x2="1107" y2="817.5" stroke="#35dc12" stroke-width="3"/>
<line x1="1118" y1="797" x2="1118" y2="817.5" stroke="#35dc12" stroke-width="3"/>
<line x1="1127" y1="797" x2="1127" y2="817.5" stroke="#35dc12" stroke-width="3"/>
<line x1="1254.5" y1="797" x2="1254.5" y2="816" stroke="#35dc12" stroke-width="3"/>
<line x1="1351" y1="797" x2="1351" y2="806.5" stroke="#35dc12" stroke-width="3"/>
<line x1="1362" y1="797" x2="1362" y2="806.5" stroke="#35dc12" stroke-width="3"/>
<line x1="1375.7" y1="797" x2="1375.7" y2="812.8" stroke="#35dc12" stroke-width="3"/>
<line x1="1634.4" y1="797" x2="1634.4" y2="816.8" stroke="#35dc12" stroke-width="3"/>
</g>
<line x1="801.5" y1="695" x2="801.5" y2="916" stroke="#000" stroke-width="1"/>
<rect x="555" y="695" width="1127" height="221" fill="none" stroke="#000" stroke-width="2"/>
<rect x="546.5" y="803.5" width="8.5" height="2" fill="#35c020"/>
<path d="M546.5,909.5 L554,913.5 L546.5,917.5 Z" fill="#30d010" stroke="#000" stroke-width="0.8"/>
<text x="561.0" y="915.5" font-size="9" fill="#000">-nan(ind)</text>
<path d="M787.5,917.5 L795,917.5 L791.25,924.5 Z" fill="#30d010" stroke="#000" stroke-width="0.8"/>
<text x="799.0" y="924.0" font-size="9" fill="#000" textLength="21.0" lengthAdjust="spacingAndGlyphs">-0.30</text>
<path d="M1062.5,693.5 L1070.5,693.5 L1066.5,686 Z" fill="#30d010" stroke="#000" stroke-width="0.8"/>
<text x="1074.0" y="694.0" font-size="9" fill="#000" textLength="17.5" lengthAdjust="spacingAndGlyphs">0.38</text>
<line x1="556" y1="925.5" x2="1683" y2="925.5" stroke="#000" stroke-width="1"/>
<line x1="564.5" y1="925" x2="564.5" y2="930" stroke="#000" stroke-width="1"/>
<line x1="589.5" y1="925" x2="589.5" y2="930" stroke="#000" stroke-width="1"/>
<line x1="614.5" y1="925" x2="614.5" y2="930" stroke="#000" stroke-width="1"/>
<line x1="640.5" y1="925" x2="640.5" y2="930" stroke="#000" stroke-width="1"/>
<line x1="665.5" y1="925" x2="665.5" y2="934.5" stroke="#000" stroke-width="1"/>
<line x1="690.5" y1="925" x2="690.5" y2="930" stroke="#000" stroke-width="1"/>
<line x1="715.5" y1="925" x2="715.5" y2="930" stroke="#000" stroke-width="1"/>
<line x1="740.5" y1="925" x2="740.5" y2="930" stroke="#000" stroke-width="1"/>
<line x1="765.5" y1="925" x2="765.5" y2="930" stroke="#000" stroke-width="1"/>
<line x1="790.5" y1="925" x2="790.5" y2="934.5" stroke="#000" stroke-width="1"/>
<line x1="815.5" y1="925" x2="815.5" y2="930" stroke="#000" stroke-width="1"/>
<line x1="840.5" y1="925" x2="840.5" y2="930" stroke="#000" stroke-width="1"/>
<line x1="865.5" y1="925" x2="865.5" y2="930" stroke="#000" stroke-width="1"/>
<line x1="890.5" y1="925" x2="890.5" y2="930" stroke="#000" stroke-width="1"/>
<line x1="915.5" y1="925" x2="915.5" y2="934.5" stroke="#000" stroke-width="1"/>
<line x1="940.5" y1="925" x2="940.5" y2="930" stroke="#000" stroke-width="1"/>
<line x1="965.5" y1="925" x2="965.5" y2="930" stroke="#000" stroke-width="1"/>
<line x1="990.5" y1="925" x2="990.5" y2="930" stroke="#000" stroke-width="1"/>
<line x1="1015.5" y1="925" x2="1015.5" y2="930" stroke="#000" stroke-width="1"/>
<line x1="1040.5" y1="925" x2="1040.5" y2="934.5" stroke="#000" stroke-width="1"/>
<line x1="1065.5" y1="925" x2="1065.5" y2="930" stroke="#000" stroke-width="1"/>
<line x1="1090.5" y1="925" x2="1090.5" y2="930" stroke="#000" stroke-width="1"/>
<line x1="1116.5" y1="925" x2="1116.5" y2="930" stroke="#000" stroke-width="1"/>
<line x1="1141.5" y1="925" x2="1141.5" y2="930" stroke="#000" stroke-width="1"/>
<line x1="1166.5" y1="925" x2="1166.5" y2="934.5" stroke="#000" stroke-width="1"/>
<line x1="1191.5" y1="925" x2="1191.5" y2="930" stroke="#000" stroke-width="1"/>
<line x1="1216.5" y1="925" x2="1216.5" y2="930" stroke="#000" stroke-width="1"/>
<line x1="1241.5" y1="925" x2="1241.5" y2="930" stroke="#000" stroke-width="1"/>
<line x1="1266.5" y1="925" x2="1266.5" y2="930" stroke="#000" stroke-width="1"/>
<line x1="1291.5" y1="925" x2="1291.5" y2="934.5" stroke="#000" stroke-width="1"/>
<line x1="1316.5" y1="925" x2="1316.5" y2="930" stroke="#000" stroke-width="1"/>
<line x1="1341.5" y1="925" x2="1341.5" y2="930" stroke="#000" stroke-width="1"/>
<line x1="1366.5" y1="925" x2="1366.5" y2="930" stroke="#000" stroke-width="1"/>
<line x1="1391.5" y1="925" x2="1391.5" y2="930" stroke="#000" stroke-width="1"/>
<line x1="1416.5" y1="925" x2="1416.5" y2="934.5" stroke="#000" stroke-width="1"/>
<line x1="1441.5" y1="925" x2="1441.5" y2="930" stroke="#000" stroke-width="1"/>
<line x1="1466.5" y1="925" x2="1466.5" y2="930" stroke="#000" stroke-width="1"/>
<line x1="1491.5" y1="925" x2="1491.5" y2="930" stroke="#000" stroke-width="1"/>
<line x1="1516.5" y1="925" x2="1516.5" y2="930" stroke="#000" stroke-width="1"/>
<line x1="1541.5" y1="925" x2="1541.5" y2="934.5" stroke="#000" stroke-width="1"/>
<line x1="1566.5" y1="925" x2="1566.5" y2="930" stroke="#000" stroke-width="1"/>
<line x1="1591.5" y1="925" x2="1591.5" y2="930" stroke="#000" stroke-width="1"/>
<line x1="1616.5" y1="925" x2="1616.5" y2="930" stroke="#000" stroke-width="1"/>
<line x1="1642.5" y1="925" x2="1642.5" y2="930" stroke="#000" stroke-width="1"/>
<line x1="1667.5" y1="925" x2="1667.5" y2="934.5" stroke="#000" stroke-width="1"/>
<line x1="801.5" y1="925" x2="801.5" y2="934.5" stroke="#000" stroke-width="1"/>
<clipPath id="cpT"><rect x="556" y="930" width="1135" height="30"/></clipPath><g clip-path="url(#cpT)">
<text x="664.4" y="946.6" font-size="12" fill="#000" text-anchor="middle" textLength="74.0" lengthAdjust="spacingAndGlyphs">14:56:40.000</text>
<text x="789.6" y="946.6" font-size="12" fill="#000" text-anchor="middle" textLength="74.0" lengthAdjust="spacingAndGlyphs">14:58:20.000</text>
<text x="914.9" y="946.6" font-size="12" fill="#000" text-anchor="middle" textLength="74.0" lengthAdjust="spacingAndGlyphs">15:00:00.000</text>
<text x="1040.2" y="946.6" font-size="12" fill="#000" text-anchor="middle" textLength="74.0" lengthAdjust="spacingAndGlyphs">15:01:40.000</text>
<text x="1165.4" y="946.6" font-size="12" fill="#000" text-anchor="middle" textLength="74.0" lengthAdjust="spacingAndGlyphs">15:03:20.000</text>
<text x="1290.7" y="946.6" font-size="12" fill="#000" text-anchor="middle" textLength="74.0" lengthAdjust="spacingAndGlyphs">15:05:00.000</text>
<text x="1415.9" y="946.6" font-size="12" fill="#000" text-anchor="middle" textLength="74.0" lengthAdjust="spacingAndGlyphs">15:06:40.000</text>
<text x="1541.2" y="946.6" font-size="12" fill="#000" text-anchor="middle" textLength="74.0" lengthAdjust="spacingAndGlyphs">15:08:20.000</text>
<text x="1666.4" y="946.6" font-size="12" fill="#000" text-anchor="middle" textLength="74.0" lengthAdjust="spacingAndGlyphs">15:10:00.000</text>
</g>
<text x="493.0" y="936.5" font-size="12" fill="#000">Time</text>
<text x="492.5" y="950.5" font-size="12" fill="#000">(s)</text>
<rect x="556" y="952.5" width="1127" height="12" fill="#dce8f8"/>
<path d="M558,958.5 L566,954.5 L566,962.5 Z" fill="#6b93cc"/>
<rect x="817.5" y="953.5" width="852" height="10.5" fill="url(#gThumb)" stroke="#7ba3da" stroke-width="1"/>
<path d="M1681,958.5 L1673,954.5 L1673,962.5 Z" fill="#6b93cc"/>
<rect x="1706.5" y="57.5" width="202" height="611" fill="#fff" stroke="#c8c8c8" stroke-width="1"/>
<line x1="1707" y1="73.5" x2="1908" y2="73.5" stroke="#d0d0d0" stroke-width="1"/>
<rect x="1708.5" y="59.5" width="12" height="12" fill="#e8163c" stroke="#000" stroke-width="1"/>
<rect x="1707" y="73.5" width="201" height="16" fill="url(#gSel)" stroke="#8db4e6" stroke-width="1"/>
<rect x="1708.5" y="75.5" width="12" height="12" fill="#0a28c8" stroke="#000" stroke-width="1"/>
<line x1="1707" y1="105.5" x2="1908" y2="105.5" stroke="#d0d0d0" stroke-width="1"/>
<rect x="1708.5" y="91.5" width="12" height="12" fill="#fff" stroke="#555" stroke-width="1"/>
<text x="1725.0" y="70.0" font-size="12" fill="#000">LabNTK_U21</text>
<text x="1904.5" y="70.0" font-size="12" fill="#000" text-anchor="end">0.669</text>
<text x="1725.0" y="86.0" font-size="12" fill="#000">lam1</text>
<text x="1904.5" y="86.0" font-size="12" fill="#000" text-anchor="end">0.670</text>
<text x="1725.0" y="102.0" font-size="12" fill="#000">vbat</text>
<text x="1904.5" y="102.0" font-size="12" fill="#000" text-anchor="end">11.92</text>
<rect x="1706.5" y="695.5" width="202" height="219" fill="#fff" stroke="#c8c8c8" stroke-width="1"/>
<line x1="1707" y1="711.5" x2="1908" y2="711.5" stroke="#d0d0d0" stroke-width="1"/>
<rect x="1708.5" y="697.5" width="12" height="12" fill="#0000dc" stroke="#000" stroke-width="1"/>
<line x1="1707" y1="727.5" x2="1908" y2="727.5" stroke="#d0d0d0" stroke-width="1"/>
<rect x="1708.5" y="713.5" width="12" height="12" fill="#1a8c1a" stroke="#000" stroke-width="1"/>
<rect x="1707" y="727.5" width="201" height="16" fill="url(#gOrg)" stroke="#f2c070" stroke-width="0.8"/>
<rect x="1708.5" y="729.5" width="12" height="12" fill="#22dd22" stroke="#000" stroke-width="1"/>
<line x1="1707" y1="759.5" x2="1908" y2="759.5" stroke="#d0d0d0" stroke-width="1"/>
<rect x="1708.5" y="745.5" width="12" height="12" fill="#e000e0" stroke="#000" stroke-width="1"/>
<line x1="1707" y1="775.5" x2="1908" y2="775.5" stroke="#d0d0d0" stroke-width="1"/>
<rect x="1708.5" y="761.5" width="12" height="12" fill="#707070" stroke="#000" stroke-width="1"/>
<line x1="1707" y1="791.5" x2="1908" y2="791.5" stroke="#d0d0d0" stroke-width="1"/>
<rect x="1708.5" y="777.5" width="12" height="12" fill="#000000" stroke="#000" stroke-width="1"/>
<line x1="1707" y1="807.5" x2="1908" y2="807.5" stroke="#d0d0d0" stroke-width="1"/>
<rect x="1708.5" y="793.5" width="12" height="12" fill="#cccccc" stroke="#000" stroke-width="1"/>
<text x="1725.0" y="708.0" font-size="12" fill="#000">% O2</text>
<text x="1904.5" y="708.0" font-size="12" fill="#000" text-anchor="end">20.32</text>
<text x="1725.0" y="724.0" font-size="12" fill="#000">LamLabOK</text>
<text x="1904.5" y="724.0" font-size="12" fill="#000" text-anchor="end">0.15</text>
<text x="1725.0" y="740.0" font-size="12" fill="#000">LamLabOK-f(500)</text>
<text x="1904.5" y="740.0" font-size="12" fill="#000" text-anchor="end">0.03</text>
<text x="1725.0" y="756.0" font-size="12" fill="#000">LambdaLabError</text>
<text x="1904.5" y="756.0" font-size="12" fill="#000" text-anchor="end">0.15</text>
<text x="1725.0" y="772.0" font-size="12" fill="#000">bap</text>
<text x="1904.5" y="772.0" font-size="12" fill="#000" text-anchor="end">1008</text>
<text x="1725.0" y="788.0" font-size="12" fill="#000">egt1</text>
<text x="1904.5" y="788.0" font-size="12" fill="#000" text-anchor="end">26</text>
<text x="1725.0" y="804.0" font-size="12" fill="#000">egt2</text>
<text x="1904.5" y="804.0" font-size="12" fill="#000" text-anchor="end">98</text>
<text x="9.0" y="1000.6" font-size="12" fill="#1a7d2a" textLength="666.0" lengthAdjust="spacingAndGlyphs">.\DownloadedData\RICESP\ECU sensor actuator tests\Lambda Sensor Calibrations\RR17819 validation live % O2 20.33.SD</text>
<text x="9.0" y="1014.6" font-size="12" fill="#1a7d2a" textLength="521.0" lengthAdjust="spacingAndGlyphs">S8(13660) Cal(RICESP-RR258-NTKcalibration-3) Cfg(RICESP-RRL014) Boot(1.73) Main(1.699.1)</text>
<text x="9.0" y="1028.4" font-size="12" fill="#1a7d2a" textLength="319.0" lengthAdjust="spacingAndGlyphs">DateTime(2022\1\11 14:50) UncompressedSize(23.5 MB)</text>
<text x="9.0" y="1042.3" font-size="12" fill="#888888" textLength="381.0" lengthAdjust="spacingAndGlyphs">RR17819 validation live % O2 20.33 egt1 amb temp egt2 in chamber</text>
<line x1="1130.5" y1="989" x2="1130.5" y2="1070" stroke="#c4c4c4" stroke-width="1"/>
<line x1="1698.5" y1="989" x2="1698.5" y2="1070" stroke="#c4c4c4" stroke-width="1"/>
<text x="1139.5" y="1000.6" font-size="12" fill="#f0962a" textLength="229.0" lengthAdjust="spacingAndGlyphs">LamLabOK-f(500) (50Hz) samples(58047)</text>
<text x="1139.5" y="1014.3" font-size="12" fill="#a01020" textLength="123.0" lengthAdjust="spacingAndGlyphs">runavg(LamLabOK,25)</text>
<text x="1139.5" y="1028.2" font-size="12" fill="#f0962a" textLength="237.0" lengthAdjust="spacingAndGlyphs">Unit(Internal No Converstion LPUnit,NONE)</text>
<text x="1139.5" y="1041.9" font-size="12" fill="#f0962a" textLength="215.0" lengthAdjust="spacingAndGlyphs">UnitGroup(MATHUG-LamLabOK-f(500))</text>
<text x="1706.0" y="1000.6" font-size="12" fill="#000" textLength="86.0" lengthAdjust="spacingAndGlyphs">Burst Log Mode</text>
<text x="1706.0" y="1028.4" font-size="12" fill="#000" textLength="98.0" lengthAdjust="spacingAndGlyphs">BASE, ENHANCED</text></svg></body></html>
